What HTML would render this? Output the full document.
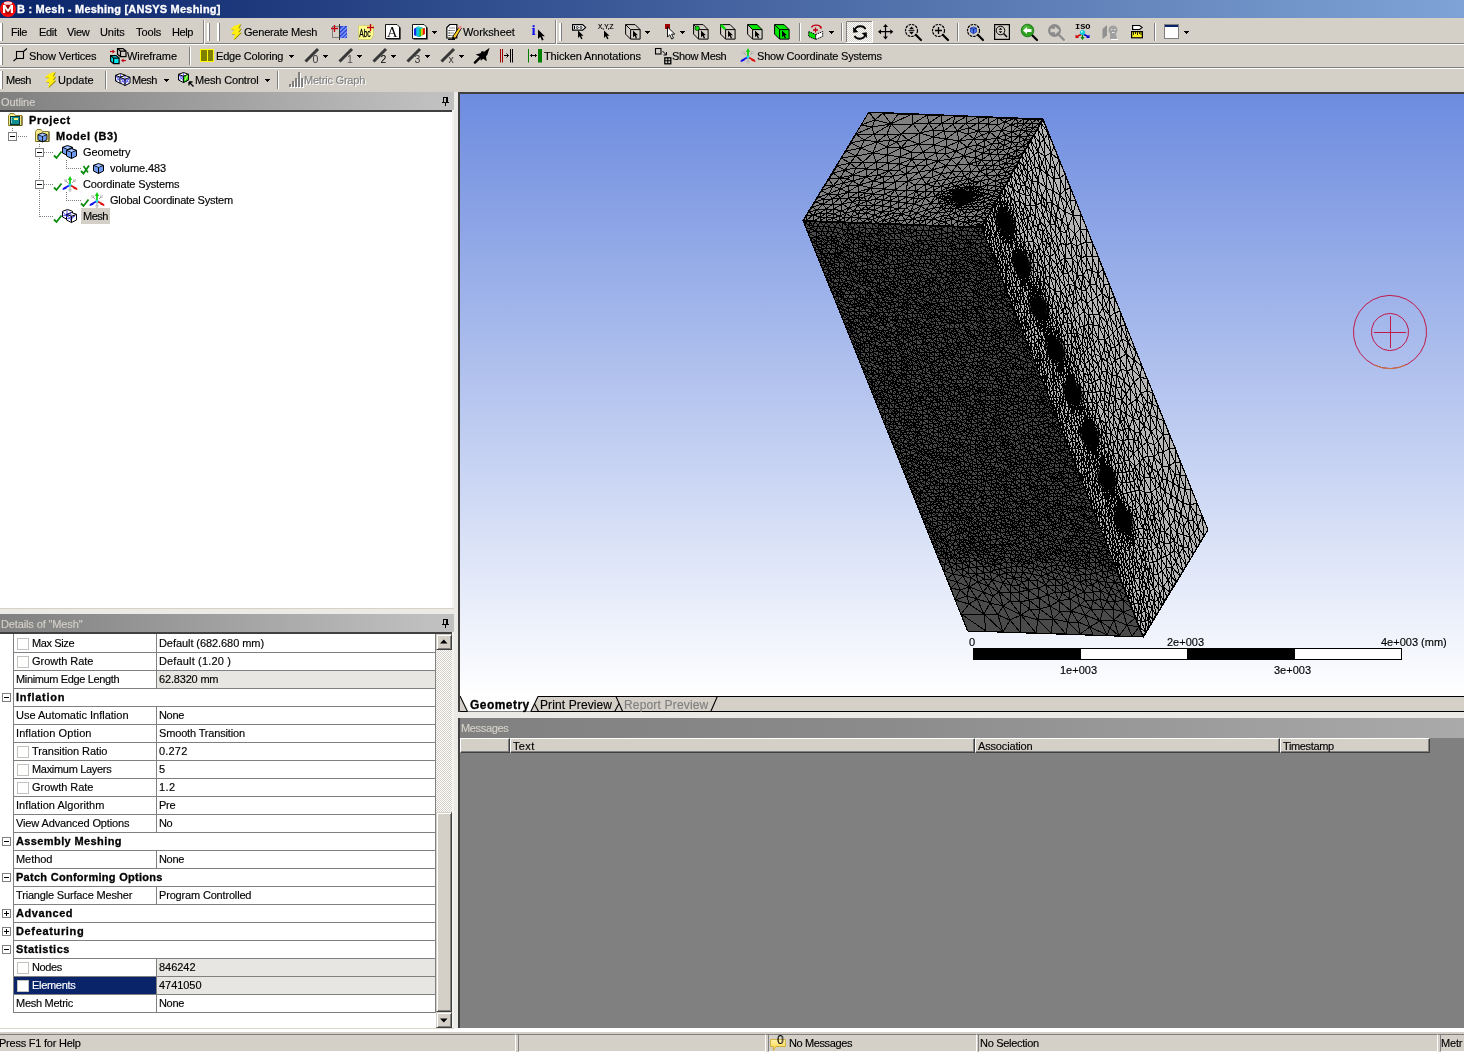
<!DOCTYPE html>
<html><head><meta charset="utf-8"><title>B : Mesh - Meshing [ANSYS Meshing]</title>
<style>
html,body{margin:0;padding:0;overflow:hidden;}
body{width:1464px;height:1052px;overflow:hidden;background:#d4d0c8;font-family:"Liberation Sans",sans-serif;font-size:11px;color:#000;position:relative;}
.a{position:absolute;}
.t{will-change:transform;position:absolute;white-space:nowrap;line-height:13px;height:13px;font-size:11px;letter-spacing:-0.2px;-webkit-text-stroke:0.15px currentColor;}
.n{letter-spacing:0;}
.b{font-weight:bold;letter-spacing:0.3px;-webkit-text-stroke:0.3px currentColor;}
svg{position:absolute;overflow:visible;will-change:transform;}
.vsep{position:absolute;width:1px;background:#808080;border-right:1px solid #fff;}
.grip{position:absolute;width:2px;background:#fff;border-right:1px solid #808080;}
.dd{position:absolute;width:0;height:0;border-left:3px solid transparent;border-right:3px solid transparent;border-top:3px solid #000;}
.hl{position:absolute;left:14px;width:421px;height:1px;background:#808080;}
.cb{position:absolute;left:17px;width:10px;height:10px;border:1px solid #c4c2bc;background:#fff;}
.ex{position:absolute;left:2px;width:7px;height:7px;border:1px solid #808080;background:#fff;}
.ex i{position:absolute;left:1px;top:3px;width:5px;height:1px;background:#000;}
.ex b{position:absolute;left:3px;top:1px;width:1px;height:5px;background:#000;}
.sbb{background:#d4d0c8;box-sizing:border-box;border:1px solid;border-color:#d4d0c8 #404040 #404040 #d4d0c8;box-shadow:inset 1px 1px 0 #fff,inset -1px -1px 0 #808080;}
.hc{height:15px;box-sizing:border-box;background:#d4d0c8;border:1px solid;border-color:#fff #404040 #404040 #fff;box-shadow:inset -1px -1px 0 #808080;}
.sp{top:1034px;height:18px;box-sizing:border-box;border:1px solid;border-color:#808080 #fff #fff #808080;}
</style></head><body>
<!-- title bar -->
<div class="a" style="left:0;top:0;width:1464px;height:18px;background:linear-gradient(to right,#0a246a 0px,#7fa3d6 1464px);"></div>
<svg style="left:0;top:0" width="17" height="18" viewBox="0 0 17 18"><defs><radialGradient id="mg" cx=".5" cy=".5" r=".5"><stop offset="0" stop-color="#600000"/><stop offset=".55" stop-color="#c00000"/><stop offset=".8" stop-color="#ff0808"/><stop offset="1" stop-color="#ff1010"/></radialGradient></defs><circle cx="8" cy="9" r="8" fill="url(#mg)"/><ellipse cx="8" cy="3.200" rx="4.200" ry="1.600" fill="#fff" opacity=".85"/><path d="M3 13V5h2.300l2.700 4.500 2.700-4.500h2.300v8h-2.200V8.500l-2 3.300h-1.600l-2-3.300v4.500z" fill="#fff"/></svg>
<span class="t b" style="left:17px;top:3px;color:#fff;letter-spacing:0.22px">B : Mesh - Meshing [ANSYS Meshing]</span>
<!-- toolbar separators -->
<div class="a" style="left:0;top:43px;width:1464px;height:1px;background:#808080"></div>
<div class="a" style="left:0;top:44px;width:1464px;height:1px;background:#fff"></div>
<div class="a" style="left:0;top:67px;width:1464px;height:1px;background:#808080"></div>
<div class="a" style="left:0;top:68px;width:1464px;height:1px;background:#fff"></div>
<!-- grips -->
<div class="grip" style="left:0;top:23px;height:18px"></div>
<div class="grip" style="left:0;top:47px;height:18px"></div>
<div class="grip" style="left:0;top:71px;height:18px"></div>
<!-- menu -->
<span class="t" style="left:11px;top:26px;letter-spacing:-0.44px">File</span>
<span class="t" style="left:39px;top:26px;letter-spacing:-0.29px">Edit</span>
<span class="t" style="left:67px;top:26px;letter-spacing:-0.31px">View</span>
<span class="t" style="left:100px;top:26px;letter-spacing:-0.09px">Units</span>
<span class="t" style="left:136px;top:26px;letter-spacing:-0.12px">Tools</span>
<span class="t" style="left:172px;top:26px;letter-spacing:-0.44px">Help</span>
<div class="a" style="left:203px;top:20px;width:1px;height:24px;background:#808080"></div>
<div class="a" style="left:204px;top:20px;width:1px;height:24px;background:#fff"></div>
<div class="grip" style="left:207px;top:23px;height:18px"></div>
<div class="grip" style="left:217px;top:23px;height:18px"></div>
<span class="t" style="left:244px;top:26px;letter-spacing:-0.20px">Generate Mesh</span>
<span class="t" style="left:463px;top:26px;letter-spacing:-0.07px">Worksheet</span>
<div class="a" style="left:555px;top:20px;width:1px;height:24px;background:#808080"></div>
<div class="a" style="left:556px;top:20px;width:1px;height:24px;background:#fff"></div>
<div class="grip" style="left:559px;top:23px;height:18px"></div>
<!-- row2 -->
<span class="t" style="left:29px;top:50px;letter-spacing:-0.18px">Show Vertices</span>
<span class="t" style="left:127px;top:50px;letter-spacing:-0.09px">Wireframe</span>
<div class="vsep" style="left:189px;top:47px;height:18px"></div>
<span class="t" style="left:216px;top:50px;letter-spacing:-0.19px">Edge Coloring</span>
<span class="t" style="left:544px;top:50px;letter-spacing:-0.11px">Thicken Annotations</span>
<span class="t" style="left:672px;top:50px;letter-spacing:-0.35px">Show Mesh</span>
<span class="t" style="left:757px;top:50px;letter-spacing:-0.21px">Show Coordinate Systems</span>
<!-- row3 -->
<span class="t" style="left:6px;top:74px;letter-spacing:-0.47px">Mesh</span>
<span class="t" style="left:58px;top:74px;letter-spacing:0.04px">Update</span>
<div class="vsep" style="left:105px;top:71px;height:18px"></div>
<span class="t" style="left:132px;top:74px;letter-spacing:-0.47px">Mesh</span>
<span class="t" style="left:195px;top:74px;letter-spacing:-0.16px">Mesh Control</span>
<div class="vsep" style="left:277px;top:71px;height:18px"></div>
<span class="t" style="left:305px;top:75px;color:#fff;letter-spacing:-0.21px">Metric Graph</span>
<span class="t" style="left:304px;top:74px;color:#808080;letter-spacing:-0.21px">Metric Graph</span>
<!-- toolbar icons row 1 -->
<svg style="left:0;top:18px" width="1464" height="74" viewBox="0 18 1464 74">
<defs>
<path id="cur" d="M0 0v7.500l1.800-1.700 1.400 3 1.300-.6-1.400-2.900h2.400z"/>
<g id="bolt"><path d="M12.400 .2L5.900 2.600L1.800 5.900L6.300 6.200L2.800 10.400L6.700 10.600L5.100 16.200L12.900 8.800L10 8.800L12.900 4.700L10 5.100Z" fill="#8c8000"/><path d="M11.700 -.3L5.200 2.100L1.100 5.400L5.600 5.700L2.100 9.900L6 10.100L4.400 15.700L12.200 8.300L9.300 8.300L12.200 4.200L9.300 4.600Z" fill="#ffee10"/></g>
<g id="dda" shape-rendering="crispEdges"><rect width="5" height="1"/><rect x="1" y="1" width="3" height="1"/><rect x="2" y="2" width="1" height="1"/></g>
<g id="cubeo" fill="none" stroke="#000" stroke-width="1"><path d="M.6 .6h9.500l5 5v9.500h-9.500l-5-5z"/><path d="M.6 .6l5 5h9.500M5.600 5.600v9.500"/></g>
<pattern id="dith" width="2" height="2" patternUnits="userSpaceOnUse"><rect width="2" height="2" fill="#fff"/><rect width="1" height="1" fill="#d4d0c8"/><rect x="1" y="1" width="1" height="1" fill="#d4d0c8"/></pattern>
<g id="mag"><circle cx="6.500" cy="6.500" r="6" fill="none" stroke="#000" stroke-width="1.200" stroke-dasharray="2.600 .9"/><path d="M11 11l5 5" stroke="#000" stroke-width="2.200" stroke-linecap="round"/></g>
</defs>
<use href="#bolt" x="229" y="24"/>
<!-- section plane -->
<g transform="translate(331,24)"><rect x="1.500" y="2.500" width="7" height="11" fill="none" stroke="#808080"/><rect x="8.500" y="2" width="7.500" height="12" fill="#3048d8"/><path d="M9 6.500l4.500-4.500M9 10.500l7-7M9.500 14l6.500-6.500M13 14l3-3" stroke="#8098ff" stroke-width="1.300"/><path d="M8.500 0v16" stroke="#303030" stroke-width="1"/><path d="M0 4.500h7M3.500 1v7" stroke="#c00010" stroke-width="1.300"/></g>
<!-- Abc -->
<g transform="translate(358,24)"><path d="M.5 1.500h15v9.500l-2.500 4.500h-12.500z" fill="#ffff90" stroke="#c8c870" stroke-width=".8"/><text x="1.200" y="11" font-family="Liberation Sans" font-size="9.500" textLength="11.500" lengthAdjust="spacingAndGlyphs" transform="scale(1,1.200)" stroke="#000" stroke-width=".25">Abc</text><path d="M9 3.500h7M12.500 0v7" stroke="#c00010" stroke-width="1.300"/></g>
<!-- A page -->
<g transform="translate(385,24)"><path d="M.5 .5h11.500l2.500 2.500v11.500h-14z" fill="#fff" stroke="#000" stroke-width=".9"/><path d="M1.500 15h13.500V3.500" fill="none" stroke="#000" stroke-width="1.200"/><text x="2" y="12.800" font-family="Liberation Serif" font-size="14.500">A</text></g>
<!-- colored cube page -->
<g transform="translate(412,24)"><path d="M.5 .5h11.500l2.500 2.500v11.500h-14z" fill="#fff" stroke="#000" stroke-width=".9"/><path d="M1.500 15h13.500V3.500" fill="none" stroke="#000" stroke-width="1.200"/><g transform="translate(-.8,-.8) scale(1.100)"><path d="M2.500 5l4-2 5 1.500v5.500l-4 2.500-5-1.500z" fill="#1030e0"/><path d="M4.500 4l2-1 5 1.500v5.500l-4 2.500-3-.9z" fill="#10c0e0"/><path d="M7.500 5.500l4-1v5.500l-4 2.500z" fill="#20c820"/><path d="M6.500 3l5 1.500-2 .5-4.500-1.300z" fill="#40e0a0"/><path d="M9 5.100l2.500-.6v5.500l-2.500 1.600z" fill="#f0d010"/><path d="M10.500 4.800l2-.5v5.500l-2 1.200z" fill="#e82010"/></g></g>
<use href="#dda" x="432" y="31"/>
<!-- worksheet -->
<g transform="translate(446,24)"><path d="M.8 3.500l3-3h7v13.500h-10z" fill="#fff" stroke="#000" stroke-width="1.200"/><path d="M2 15.300h7" stroke="#000" stroke-width="1.200"/><path d="M3 4h6M3 6.500h6M3 9h5M3 11.500h4" stroke="#909090" stroke-width="1"/><path d="M2.500 6.500h1M2.500 9h1M2.500 11.500h1" stroke="#000"/><path d="M13.500 2.500l2 1.500-6 10-3 1.500.5-3.200z" fill="#ffd020" stroke="#000" stroke-width=".9"/><circle cx="14" cy="3.500" r="1.700" fill="#f09090"/><path d="M7 12.500l-.5 3 2.800-1.500z" fill="#000"/></g>
<!-- i cursor -->
<g transform="translate(532,24)"><text x="-.5" y="11" font-family="Liberation Serif" font-size="15" font-weight="bold" fill="#1010f0">i</text><use href="#cur" x="6" y="5.500" transform="translate(6,5.500) scale(1.250) translate(-6,-5.500)"/></g>
<!-- label select -->
<g transform="translate(572,24)"><path d="M.6 .6h10l3 2.800-3 2.800h-10z" fill="#fff" stroke="#000" stroke-width="1.200"/><path d="M2.500 2v3M4.500 3.500h0" stroke="#000"/><circle cx="5.300" cy="3.500" r="1" fill="none" stroke="#000" stroke-width=".8"/><circle cx="9" cy="3.500" r="1" fill="none" stroke="#000" stroke-width=".8"/><use href="#cur" x="6" y="6.500"/></g>
<!-- xyz -->
<g transform="translate(598,24)"><text x="0" y="5" font-family="Liberation Sans" font-size="7.500" textLength="15.500" lengthAdjust="spacingAndGlyphs" stroke="#000" stroke-width=".2">X,Y,Z</text><use href="#cur" x="6" y="6.500"/></g>
<!-- cube cursor -->
<g transform="translate(625,24)"><use href="#cubeo"/><use href="#cur" x="8" y="6.500" transform="translate(8,6.500) scale(.9) translate(-8,-6.500)"/></g>
<use href="#dda" x="645" y="31"/>
<!-- red square cursor -->
<g transform="translate(665,24)"><rect width="5" height="5" fill="#a00000"/><path d="M2.500 3v10l2.300-2.200 1.900 4.200 1.800-.8-1.900-4.100h3.200z" fill="#fff" stroke="#000" stroke-width=".9"/></g>
<use href="#dda" x="680" y="31"/>
<!-- cube vertex -->
<g transform="translate(693,24)"><use href="#cubeo"/><circle cx="4.200" cy="4.200" r="2.300" fill="#00e000" stroke="#000" stroke-width=".6"/><use href="#cur" x="8" y="6.500" transform="translate(8,6.500) scale(.9) translate(-8,-6.500)"/></g>
<g transform="translate(720,24)"><use href="#cubeo"/><path d="M1 1l4.200 4.200" stroke="#00e000" stroke-width="2.600"/><use href="#cur" x="8" y="6.500" transform="translate(8,6.500) scale(.9) translate(-8,-6.500)"/></g>
<g transform="translate(747,24)"><path d="M.6 .6h9.500l5 5h-9.500z" fill="#00e800"/><use href="#cubeo"/><use href="#cur" x="8" y="6.500" transform="translate(8,6.500) scale(.9) translate(-8,-6.500)"/></g>
<g transform="translate(774,24)"><path d="M.6 .6h9.500l5 5v9.500h-9.500l-5-5z" fill="#00e800"/><use href="#cubeo"/><use href="#cur" x="8" y="6.500" transform="translate(8,6.500) scale(.9) translate(-8,-6.500)"/></g>
<!-- extend -->
<g transform="translate(808,24)"><path d="M3.500 3.500a5 3 0 0 1 9.500-.5" fill="none" stroke="#c00010" stroke-width="1.200"/><path d="M11 2.500l3 .2-.8 2.800z" fill="#c00010"/><path d="M5 6h5M7.500 3.500v5" stroke="#c00010" stroke-width="1.300"/><path d="M.7 7.500l7 3v5l-7-3z" fill="#00e000" stroke="#000" stroke-width="1" stroke-dasharray="1.500 .8"/><path d="M7.700 10.500l7-3v5l-7 3z" fill="#fff" stroke="#000" stroke-width="1" stroke-dasharray="1.500 .8"/></g>
<use href="#dda" x="829" y="31"/>
<!-- rotate (pressed) -->
<rect x="846" y="21" width="27" height="22" fill="url(#dith)"/><path d="M846.500 43V21.500h26" fill="none" stroke="#808080"/><path d="M846 42.500h26.500V21" fill="none" stroke="#fff"/>
<g transform="translate(853,24.500)"><path d="M2 5.200a5.500 4.500 0 0 1 10.500-.5" fill="none" stroke="#000" stroke-width="1.800"/><path d="M0 2.500l.3 5.800 5-.8z" fill="#000"/><path d="M12 10.800a5.500 4.500 0 0 1-10.500.5" fill="none" stroke="#000" stroke-width="1.800"/><path d="M14 13.500l-.3-5.800-5 .8z" fill="#000"/></g>
<!-- pan -->
<g transform="translate(878,24)" fill="#000"><path d="M7.500 0l2.500 3h-5zM7.500 15.500l2.500-3h-5zM0 7.700l3-2.500v5zM15.300 7.700l-3-2.500v5z"/><path d="M7.500 2.500v10.500M2.500 7.700h10.500" stroke="#000" stroke-width="1.200"/></g>
<!-- zoom -->
<g transform="translate(905,24)"><use href="#mag"/><path d="M6.500 2.500l2.500 2.800h-5zM6.500 10.500l2.500-2.800h-5z" fill="#000"/><path d="M3.500 6.500h6" stroke="#000" stroke-width=".8"/></g>
<g transform="translate(932,24)"><use href="#mag"/><path d="M6.500 3v7M3 6.500h7" stroke="#000" stroke-width="1.300"/></g>
<!-- zoom fit -->
<g transform="translate(967,24)"><use href="#mag"/><path d="M6.500 3l3 1v4l-3 1.800-3-1.800v-4z" fill="#4878f0" stroke="#1830a0" stroke-width=".7"/><path d="M3.800 4.300l2.700 1 2.700-1M6.500 5.300v4" stroke="#102080" stroke-width=".8" fill="none"/></g>
<!-- mag in box -->
<g transform="translate(994,24)"><rect x=".6" y=".6" width="14.800" height="14.800" fill="none" stroke="#000" stroke-width="1.200"/><circle cx="6.500" cy="6.500" r="4.300" fill="none" stroke="#000" stroke-width="1"/><path d="M9.500 9.500l3.500 3.500" stroke="#000" stroke-width="1.600"/><path d="M6.500 3.800l1.800 2h-3.600zM6.500 9.200l1.800-2h-3.600z" fill="#000"/></g>
<!-- green back -->
<g transform="translate(1021,24)"><path d="M11 11l5 5" stroke="#000" stroke-width="2.200" stroke-linecap="round"/><circle cx="6.500" cy="6.500" r="6.300" fill="#30a020" stroke="#107010" stroke-width=".8"/><circle cx="5.500" cy="5" r="3.500" fill="#60c850" opacity=".6"/><path d="M2 6.500l4-3.500v2h4.500v3h-4.500v2z" fill="#fff"/></g>
<!-- gray fwd -->
<g transform="translate(1048,24)"><path d="M11.500 11.500l5 5" stroke="#fff" stroke-width="2.200" stroke-linecap="round" opacity=".8"/><path d="M11 11l5 5" stroke="#8c8c8c" stroke-width="2.400" stroke-linecap="round"/><circle cx="6.500" cy="6.500" r="6.500" fill="#8c8c8c"/><path d="M11.500 6.500l-4.500-4v2.300h-4.500v3.400h4.500v2.300z" fill="#d4d0c8"/></g>
<!-- ISO -->
<g transform="translate(1075,24)"><text x="0" y="5" font-family="Liberation Mono" font-size="7.500" font-weight="bold" textLength="15.500" lengthAdjust="spacingAndGlyphs">ISO</text><path d="M7.500 9v6" stroke="#008000" stroke-width="1.200"/><path d="M5.500 13l2 3 2-3z" fill="#008000"/><path d="M7 10l-5 2.500" stroke="#d00000" stroke-width="1.500"/><path d="M.5 10.500v3.500h3.500z" fill="#d00000"/><path d="M8 10l5 2.500" stroke="#0000d0" stroke-width="1.500"/><path d="M14.500 10.500v3.500h-3.500z" fill="#0000d0"/><circle cx="7.500" cy="8.500" r="2.600" fill="#10c8d8"/><circle cx="6.800" cy="7.800" r="1" fill="#b0ffff"/></g>
<!-- look at (gray) -->
<g transform="translate(1102,24)"><path d="M.5 5l4.500-4v10.500l-4.500 3.500z" fill="#909090"/><circle cx="11" cy="6" r="4.500" fill="#a0a0a0"/><path d="M8 10h6l1 5h-7z" fill="#a0a0a0"/><path d="M9 5.500h1.500M12 5.500h1.500M10 8.500h2.500" stroke="#e8e8e8" stroke-width="1"/><path d="M9 15.500h7" stroke="#fff"/></g>
<!-- ruler -->
<g transform="translate(1131,24)"><path d="M1.600 1.500h7l2.500 2-2.500 2h-7z" fill="#fff" stroke="#000" stroke-width="1.200"/><rect x=".6" y="7.600" width="10.800" height="6.200" fill="#f8f020" stroke="#000" stroke-width="1.200"/><path d="M2.500 8v3M4.500 8v2M6.500 8v3M8.500 8v2M10 8v3" stroke="#000" stroke-width=".8"/></g>
<!-- window -->
<g transform="translate(1164,24)" shape-rendering="crispEdges"><rect x=".5" y=".5" width="14" height="14" fill="#fff" stroke="#808080"/><rect x="1" y="1" width="13" height="2" fill="#0a246a"/></g>
<use href="#dda" x="1184" y="31"/>
</svg>
<div class="vsep" style="left:799px;top:23px;height:18px"></div>
<div class="vsep" style="left:841px;top:23px;height:18px"></div>
<div class="vsep" style="left:957px;top:23px;height:18px"></div>
<div class="vsep" style="left:1154px;top:23px;height:18px"></div>
<!-- toolbar icons rows 2,3 -->
<svg style="left:0;top:18px" width="1464" height="74" viewBox="0 18 1464 74">
<defs>
<g id="slash"><path d="M1.500 13.500L14 1" stroke="#383838" stroke-width="3" stroke-linecap="butt"/></g>
<g id="csys2"><path d="M8 9V3" stroke="#10d010" stroke-width="1.800"/><path d="M8 0l2.200 4h-4.400z" fill="#10d010"/><path d="M8 9l-7 4" stroke="#1010f0" stroke-width="1.800"/><path d="M0 14l3.500-3.300 1.200 2z" fill="#1010f0"/><path d="M8 9l7 4" stroke="#e01010" stroke-width="1.800"/><path d="M16 14l-3.500-3.300-1.200 2z" fill="#e01010"/><path d="M8 10v5M3.500 4.500l3 3M12.500 4.500l-2.500 2.500" stroke="#a0a0a0" stroke-width="1"/><path d="M2.500 3.500l2.500.5-2 2zM13.500 3.500l-2.500.5 2 2zM8 16l-1.500-2.500h3z" fill="#e8e8e8" stroke="#909090" stroke-width=".4"/><circle cx="8" cy="9" r="1.500" fill="#20d8e8"/></g>
<g id="mc"><path d="M5.500 .5l5 1.800v5.700l-5 2.500-5-2.500v-5.700z" fill="#fff" stroke="#000" stroke-width="1"/><path d="M1 3l4.500 6M5.500 1v9M10 3l-4.500 6M1 7.500l9-4M1 3.500l9 4" stroke="#5050ff" stroke-width=".9" fill="none"/><path d="M.5 2.300l5 2 5-2M5.500 4.300v6.200" fill="none" stroke="#000" stroke-width="1"/></g>
</defs>
<!-- show vertices -->
<g transform="translate(13,48)" fill="none" stroke="#000" stroke-width="1.100"><rect x="3.500" y="3.500" width="7" height="7"/><path d="M.5 13l3-2.500M10.500 3.500l3.500-3"/></g>
<!-- wireframe -->
<g transform="translate(110,48)"><path d="M0 3.500h3" stroke="#c00010" stroke-width="1.200"/><path d="M2.500 1.500l2.500 2-2.500 2z" fill="#c00010"/><path d="M16 12.500h-3" stroke="#c00010" stroke-width="1.200"/><path d="M13.500 10.500l-2.500 2 2.500 2z" fill="#c00010"/><path d="M7.500 .6h5.500l3 2.500v5.500h-5.500l-3-2.500zM7.500 .6l3 2.500h5.500M10.500 3.100v5.500" fill="none" stroke="#000" stroke-width="1.200"/><path d="M.6 7.600h5.500l3 2.500v5.500h-5.500l-3-2.500z" fill="#00e8f0" stroke="#000" stroke-width="1.200"/><path d="M.6 7.600l3 2.500h5.500M3.600 10.100v5.500" fill="none" stroke="#000" stroke-width="1.200"/></g>
<!-- edge coloring -->
<g transform="translate(200,49)" shape-rendering="crispEdges"><rect x=".5" y=".5" width="13" height="12" fill="#808000" stroke="#ffff00"/><rect x="6.500" y="1" width="1" height="11" fill="#ffff00"/></g>
<use href="#dda" x="288.500" y="55"/>
<!-- slash icons -->
<g transform="translate(304,48)"><use href="#slash"/><text x="8.500" y="14.500" font-family="Liberation Sans" font-size="10.500" fill="#383838">0</text></g><use href="#dda" x="323" y="55"/>
<g transform="translate(338,48)"><use href="#slash"/><text x="9" y="14.500" font-family="Liberation Sans" font-size="10.500" fill="#505050">1</text></g><use href="#dda" x="357" y="55"/>
<g transform="translate(372,48)"><use href="#slash"/><text x="8.500" y="14.500" font-family="Liberation Sans" font-size="10.500" fill="#000">2</text></g><use href="#dda" x="391" y="55"/>
<g transform="translate(406,48)"><use href="#slash"/><text x="8.500" y="14.500" font-family="Liberation Sans" font-size="10.500" fill="#383838">3</text></g><use href="#dda" x="425" y="55"/>
<g transform="translate(440,48)"><use href="#slash"/><text x="8.500" y="14.500" font-family="Liberation Sans" font-size="10.500" fill="#383838">x</text></g><use href="#dda" x="459" y="55"/>
<!-- star arrow -->
<g transform="translate(474,48)"><path d="M.9 14.600l7-7" stroke="#000" stroke-width="2.400" stroke-linecap="round"/><path d="M15.600 -.2l-2.400 7.400-1.200.8.700 5.200-3.500-2.400-2.400 1.900-.7-3.900-4.400-2.400 4.800-1.100 1.300-2.400 2.300.9z" fill="#000"/></g>
<!-- red/black lines -->
<g transform="translate(500,48)" fill="none"><path d="M.5 1v13.500M2.500 1v13.500" stroke="#a00000" stroke-width="1"/><path d="M10.500 1v13.500M12.500 1v13.500" stroke="#000" stroke-width="1"/><path d="M4 7.500h4.500M6.500 5.500l2 2-2 2" stroke="#000" stroke-width="1"/></g>
<!-- thicken -->
<g transform="translate(528,48)" fill="none"><path d="M.5 1v13.500" stroke="#008000" stroke-width="1"/><rect x="10" y="1" width="4" height="13.500" fill="#008000"/><path d="M2.500 7.500h6M4 6l-1.500 1.500 1.500 1.500M7 6l1.500 1.500-1.500 1.500" stroke="#000" stroke-width="1"/></g>
<!-- show mesh -->
<g transform="translate(655,48)" fill="none" stroke="#000"><rect x=".5" y=".5" width="5.500" height="5.500" stroke-width="1.100"/><path d="M7.500 3l4 4M11.500 4v3h-3" stroke-width="1"/><rect x="9.800" y="9.800" width="6" height="6" stroke-width="1.300"/><path d="M12.800 9.800v6M9.800 12.800h6" stroke-width="1.100"/></g>
<use href="#csys2" x="740" y="48"/>
<!-- row3 -->
<use href="#bolt" x="43.500" y="72"/>
<use href="#mc" x="115" y="73"/><use href="#mc" x="119.500" y="75"/>
<use href="#dda" x="164" y="79"/>
<g transform="translate(178,72)"><use href="#mc"/><path d="M5.500 4.300l5-2v5.700l-5 2.500z" fill="#30d820" stroke="#000" stroke-width=".8"/><path d="M7 8l2.500-4.500" stroke="#c8ff60" stroke-width="1.200"/><path d="M11 10h3.500M11 10v3.500M11 10l4.500 4.500" stroke="#000" stroke-width="1.300" fill="none"/></g>
<use href="#dda" x="265" y="79"/>
<g transform="translate(289,72)" shape-rendering="crispEdges"><g fill="#fff"><rect x="1" y="13" width="2" height="3"/><rect x="4" y="10" width="2" height="6"/><rect x="7" y="7" width="2" height="9"/><rect x="10" y="1" width="2" height="15"/><rect x="13" y="7" width="2" height="9"/></g><g fill="#808080"><rect x="0" y="12" width="2" height="3"/><rect x="3" y="9" width="2" height="6"/><rect x="6" y="6" width="2" height="9"/><rect x="9" y="0" width="2" height="15"/><rect x="12" y="6" width="2" height="9"/></g></g>
</svg>
<!-- outline panel -->
<div class="a" style="left:0;top:92px;width:454px;height:18px;background:linear-gradient(to right,#808080,#c0c0c0 430px,#c0c0c0)"></div>
<span class="t" style="left:1px;top:96px;color:#d4d0c8;letter-spacing:-0.10px">Outline</span>
<div class="a" style="left:0;top:110px;width:452px;height:2px;background:#404040"></div>
<div class="a" style="left:0;top:112px;width:452px;height:496px;background:#fff"></div>
<div class="a" style="left:452px;top:110px;width:2px;height:500px;background:#f4f2ee"></div>
<div class="a" style="left:0;top:608px;width:454px;height:1px;background:#d8d2c4"></div>
<div class="a" style="left:0;top:609px;width:454px;height:5px;background:#eceae6"></div>
<div class="a" style="left:454px;top:92px;width:4px;height:940px;background:#eceae6"></div>
<!-- details panel -->
<div class="a" style="left:0;top:614px;width:454px;height:18px;background:linear-gradient(to right,#808080,#c0c0c0 430px,#c0c0c0)"></div>
<span class="t" style="left:1px;top:618px;color:#d4d0c8;letter-spacing:-0.13px">Details of "Mesh"</span>
<div class="a" style="left:0;top:632px;width:452px;height:2px;background:#404040"></div>
<div class="a" style="left:0;top:634px;width:452px;height:394px;background:#fff"></div>
<div class="a" style="left:452px;top:632px;width:2px;height:398px;background:#f4f2ee"></div>
<svg style="left:440px;top:92px" width="12" height="540" viewBox="440 92 12 540" shape-rendering="crispEdges"><g id="pin"><rect x="443" y="97" width="5" height="1"/><rect x="443" y="97" width="1" height="5"/><rect x="446" y="97" width="2" height="5"/><rect x="442" y="102" width="7" height="1"/><rect x="445" y="103" width="1" height="3"/></g><use href="#pin" y="522"/></svg>
<!-- tree -->
<svg width="0" height="0" style="left:0;top:0"><defs>
<pattern id="dotv" width="1" height="2" patternUnits="userSpaceOnUse"><rect width="1" height="1" fill="#808080"/></pattern>
<pattern id="doth" width="2" height="1" patternUnits="userSpaceOnUse"><rect width="1" height="1" fill="#808080"/></pattern>
<g id="chk"><path d="M0.500 5.500l2.500 2.500 5-6.500" fill="none" stroke="#0a8a0a" stroke-width="1.800"/></g>
<g id="folder"><path d="M.5 3.500l1.500-2h4l1.500 2h6.500v10h-13.500z" fill="#f3e98a" stroke="#8a8030" stroke-width="1"/><path d="M1.500 13.500h12.500v-9.500" fill="none" stroke="#5a5420" stroke-width="1"/></g>
<g id="cube1"><path d="M5.500 .5l5 1.800v5.700l-5 2.500-5-2.500v-5.700z" fill="#6f9cf0" stroke="#000" stroke-width="1"/><path d="M.5 2.300l5 2 5-2M5.500 4.300v6.200" fill="none" stroke="#000" stroke-width="1"/><path d="M5.500 1.400l3.600 1.200-3.600 1.300-3.600-1.300z" fill="#a8c6ff"/></g>
<g id="csys"><path d="M8 8V2" stroke="#10c010" stroke-width="1.600"/><path d="M8 0l2 3.500h-4z" fill="#10c010"/><path d="M8 8l-7 4" stroke="#1020f0" stroke-width="2"/><path d="M8 8l7 4" stroke="#e01010" stroke-width="2"/><path d="M8 9v5M3 3l3 3M13 3l-2 2" stroke="#909090" stroke-width="1"/><circle cx="8" cy="8" r="1.300" fill="#20d0e0"/></g>
</defs></svg>

<svg style="left:0;top:112px" width="452" height="120" viewBox="0 112 452 120">
<rect x="12" y="127" width="1" height="6" fill="url(#dotv)"/>
<rect x="17" y="136" width="10" height="1" fill="url(#doth)"/>
<rect x="39" y="143" width="1" height="74" fill="url(#dotv)"/>
<rect x="44" y="152" width="10" height="1" fill="url(#doth)"/>
<rect x="44" y="184" width="10" height="1" fill="url(#doth)"/>
<rect x="39" y="216" width="15" height="1" fill="url(#doth)"/>
<rect x="66" y="159" width="1" height="10" fill="url(#dotv)"/>
<rect x="66" y="168" width="15" height="1" fill="url(#doth)"/>
<rect x="66" y="191" width="1" height="10" fill="url(#dotv)"/>
<rect x="66" y="200" width="15" height="1" fill="url(#doth)"/>
<!-- expand boxes -->
<g fill="#fff" stroke="#808080"><rect x="8.500" y="132.500" width="8" height="8"/><rect x="35.500" y="148.500" width="8" height="8"/><rect x="35.500" y="180.500" width="8" height="8"/></g>
<g fill="#000"><rect x="10" y="136" width="5" height="1"/><rect x="37" y="152" width="5" height="1"/><rect x="37" y="184" width="5" height="1"/></g>
<!-- project icon -->
<use href="#folder" x="8" y="112"/>
<rect x="10.500" y="116.500" width="9" height="8" fill="#109090" stroke="#003838"/><rect x="14" y="118" width="4" height="2" fill="#f0f080"/><path d="M11 118h1M11 120h1M11 122h1" stroke="#fff"/>
<!-- model icon -->
<use href="#folder" x="35" y="128"/>
<g transform="translate(37.500,132.500) scale(.9)"><use href="#cube1"/></g>
<!-- geometry -->
<use href="#chk" x="53.500" y="150"/>
<use href="#cube1" x="62" y="145"/><use href="#cube1" x="66" y="148"/>
<!-- volume -->
<path d="M81 171l2.500 2.500 5.500-8" fill="none" stroke="#0a8a0a" stroke-width="1.800"/><path d="M83.500 166l4.500 6.500" stroke="#0a8a0a" stroke-width="1.600"/>
<use href="#cube1" x="93" y="163"/>
<!-- csys -->
<use href="#chk" x="53.500" y="182"/>
<use href="#csys2" x="62" y="176"/>
<use href="#chk" x="80.500" y="198"/>
<use href="#csys2" x="89" y="192"/>
<!-- mesh -->
<use href="#chk" x="53.500" y="214"/>
<g id="mshi"><path d="M5.500 .5l5 1.800v5.700l-5 2.500-5-2.500v-5.700z" fill="#fff" stroke="#000" stroke-width="1" transform="translate(62,209)"/><path d="M5.500 .5l5 1.800v5.700l-5 2.500-5-2.500v-5.700z" fill="#fff" stroke="#000" stroke-width="1" transform="translate(66,212)"/>
<path d="M63 212l4 5M67 210v7M71 212l-4 5M63 216l8-3M67 215l4 5M71 214v7M75 215l-4 5M67 219l8-3" stroke="#3030e0" stroke-width=".8" fill="none"/>
<path d="M66.500 214.300l5 2 5-2M71.500 216.300v6.200" fill="none" stroke="#000"/></g>
</svg>
<div class="a" style="left:81px;top:208px;width:29px;height:16px;background:#d4d0c8"></div>
<span class="t b" style="left:29px;top:114px;letter-spacing:0.66px">Project</span>
<span class="t b" style="left:56px;top:130px;letter-spacing:0.58px">Model (B3)</span>
<span class="t" style="left:83px;top:146px;letter-spacing:-0.13px">Geometry</span>
<span class="t" style="left:110px;top:162px;letter-spacing:-0.07px">volume.483</span>
<span class="t" style="left:83px;top:178px;letter-spacing:-0.15px">Coordinate Systems</span>
<span class="t" style="left:110px;top:194px;letter-spacing:-0.23px">Global Coordinate System</span>
<span class="t" style="left:83px;top:210px;letter-spacing:-0.47px">Mesh</span>
<!-- details grid -->
<div class="a" style="left:13px;top:634px;width:1px;height:379px;background:#808080"></div>
<div class="a" style="left:435px;top:634px;width:1px;height:379px;background:#808080"></div>
<div class="cb" style="top:638px"></div>
<span class="t" style="left:32px;top:637px;letter-spacing:-0.39px">Max Size</span>
<span class="t" style="left:159px;top:637px;letter-spacing:-0.07px">Default (682.680 mm)</span>
<div class="a" style="left:156px;top:634px;width:1px;height:18px;background:#808080"></div>
<div class="hl" style="top:652px"></div>
<div class="cb" style="top:656px"></div>
<span class="t" style="left:32px;top:655px;letter-spacing:-0.03px">Growth Rate</span>
<span class="t" style="left:159px;top:655px;letter-spacing:0.15px">Default (1.20 )</span>
<div class="a" style="left:156px;top:652px;width:1px;height:18px;background:#808080"></div>
<div class="hl" style="top:670px"></div>
<div class="a" style="left:157px;top:671px;width:278px;height:17px;background:#e8e6e2"></div>
<span class="t" style="left:16px;top:673px;letter-spacing:-0.36px">Minimum Edge Length</span>
<span class="t" style="left:159px;top:673px;letter-spacing:-0.18px">62.8320 mm</span>
<div class="a" style="left:156px;top:670px;width:1px;height:18px;background:#808080"></div>
<div class="hl" style="top:688px"></div>
<div class="ex" style="top:693px"><i></i></div>
<span class="t b" style="left:16px;top:691px;letter-spacing:0.70px">Inflation</span>
<div class="hl" style="top:706px"></div>
<span class="t" style="left:16px;top:709px;letter-spacing:-0.00px">Use Automatic Inflation</span>
<span class="t" style="left:159px;top:709px;letter-spacing:-0.34px">None</span>
<div class="a" style="left:156px;top:706px;width:1px;height:18px;background:#808080"></div>
<div class="hl" style="top:724px"></div>
<span class="t" style="left:16px;top:727px;letter-spacing:0.10px">Inflation Option</span>
<span class="t" style="left:159px;top:727px;letter-spacing:-0.16px">Smooth Transition</span>
<div class="a" style="left:156px;top:724px;width:1px;height:18px;background:#808080"></div>
<div class="hl" style="top:742px"></div>
<div class="cb" style="top:746px"></div>
<span class="t" style="left:32px;top:745px;letter-spacing:-0.08px">Transition Ratio</span>
<span class="t" style="left:159px;top:745px;letter-spacing:0.18px">0.272</span>
<div class="a" style="left:156px;top:742px;width:1px;height:18px;background:#808080"></div>
<div class="hl" style="top:760px"></div>
<div class="cb" style="top:764px"></div>
<span class="t" style="left:32px;top:763px;letter-spacing:-0.31px">Maximum Layers</span>
<span class="t" style="left:159px;top:763px">5</span>
<div class="a" style="left:156px;top:760px;width:1px;height:18px;background:#808080"></div>
<div class="hl" style="top:778px"></div>
<div class="cb" style="top:782px"></div>
<span class="t" style="left:32px;top:781px;letter-spacing:-0.03px">Growth Rate</span>
<span class="t" style="left:159px;top:781px;letter-spacing:0.44px">1.2</span>
<div class="a" style="left:156px;top:778px;width:1px;height:18px;background:#808080"></div>
<div class="hl" style="top:796px"></div>
<span class="t" style="left:16px;top:799px;letter-spacing:0.05px">Inflation Algorithm</span>
<span class="t" style="left:159px;top:799px;letter-spacing:-0.31px">Pre</span>
<div class="a" style="left:156px;top:796px;width:1px;height:18px;background:#808080"></div>
<div class="hl" style="top:814px"></div>
<span class="t" style="left:16px;top:817px;letter-spacing:-0.12px">View Advanced Options</span>
<span class="t" style="left:159px;top:817px;letter-spacing:-0.36px">No</span>
<div class="a" style="left:156px;top:814px;width:1px;height:18px;background:#808080"></div>
<div class="hl" style="top:832px"></div>
<div class="ex" style="top:837px"><i></i></div>
<span class="t b" style="left:16px;top:835px;letter-spacing:0.39px">Assembly Meshing</span>
<div class="hl" style="top:850px"></div>
<span class="t" style="left:16px;top:853px;letter-spacing:-0.04px">Method</span>
<span class="t" style="left:159px;top:853px;letter-spacing:-0.34px">None</span>
<div class="a" style="left:156px;top:850px;width:1px;height:18px;background:#808080"></div>
<div class="hl" style="top:868px"></div>
<div class="ex" style="top:873px"><i></i></div>
<span class="t b" style="left:16px;top:871px;letter-spacing:0.28px">Patch Conforming Options</span>
<div class="hl" style="top:886px"></div>
<span class="t" style="left:16px;top:889px;letter-spacing:-0.17px">Triangle Surface Mesher</span>
<span class="t" style="left:159px;top:889px;letter-spacing:-0.17px">Program Controlled</span>
<div class="a" style="left:156px;top:886px;width:1px;height:18px;background:#808080"></div>
<div class="hl" style="top:904px"></div>
<div class="ex" style="top:909px"><i></i><b></b></div>
<span class="t b" style="left:16px;top:907px;letter-spacing:0.57px">Advanced</span>
<div class="hl" style="top:922px"></div>
<div class="ex" style="top:927px"><i></i><b></b></div>
<span class="t b" style="left:16px;top:925px;letter-spacing:0.65px">Defeaturing</span>
<div class="hl" style="top:940px"></div>
<div class="ex" style="top:945px"><i></i></div>
<span class="t b" style="left:16px;top:943px;letter-spacing:0.50px">Statistics</span>
<div class="hl" style="top:958px"></div>
<div class="a" style="left:157px;top:959px;width:278px;height:17px;background:#e8e6e2"></div>
<div class="cb" style="top:962px"></div>
<span class="t" style="left:32px;top:961px;letter-spacing:-0.38px">Nodes</span>
<span class="t" style="left:159px;top:961px;letter-spacing:-0.03px">846242</span>
<div class="a" style="left:156px;top:958px;width:1px;height:18px;background:#808080"></div>
<div class="hl" style="top:976px"></div>
<div class="a" style="left:157px;top:977px;width:278px;height:17px;background:#e8e6e2"></div>
<div class="a" style="left:14px;top:977px;width:142px;height:17px;background:#0a246a"></div>
<div class="cb" style="top:980px"></div>
<span class="t" style="left:32px;top:979px;color:#fff;letter-spacing:-0.30px">Elements</span>
<span class="t" style="left:159px;top:979px;letter-spacing:-0.05px">4741050</span>
<div class="a" style="left:156px;top:976px;width:1px;height:18px;background:#808080"></div>
<div class="hl" style="top:994px"></div>
<span class="t" style="left:16px;top:997px;letter-spacing:-0.27px">Mesh Metric</span>
<span class="t" style="left:159px;top:997px;letter-spacing:-0.34px">None</span>
<div class="a" style="left:156px;top:994px;width:1px;height:18px;background:#808080"></div>
<div class="hl" style="top:1012px"></div>
<div class="a" style="left:436px;top:634px;width:16px;height:394px;background:#eae8e4;background-image:conic-gradient(#fff 25%,#d4d0c8 0 50%,#fff 0 75%,#d4d0c8 0);background-size:2px 2px"></div>
<div class="a sbb" style="left:436px;top:634px;width:16px;height:16px"></div>
<div class="a sbb" style="left:436px;top:812px;width:16px;height:200px"></div>
<div class="a sbb" style="left:436px;top:1012px;width:16px;height:16px"></div>
<svg style="left:440px;top:639px" width="8" height="5"><path d="M0 4.500h7.500L3.750 .5z" fill="#000"/></svg>
<svg style="left:440px;top:1018px" width="8" height="5"><path d="M0 .5h7.500L3.750 4.500z" fill="#000"/></svg>
<!-- viewport -->
<div class="a" style="left:458px;top:92px;width:1006px;height:605px;background:#404040"></div>
<div class="a" id="vp" style="left:460px;top:94px;width:1004px;height:602px;background:linear-gradient(to bottom,#6d8cdf 0%,#ffffff 100%)"></div>
<!-- tab bar -->
<div class="a" style="left:460px;top:696px;width:1004px;height:16px;background:#d4d0c8"></div>
<div class="a" style="left:458px;top:711px;width:1006px;height:1px;background:#000"></div>
<div class="a" style="left:536px;top:696px;width:928px;height:1px;background:#000"></div>
<div class="a" style="left:458px;top:712px;width:1006px;height:6px;background:#eceae6"></div>
<!-- messages -->
<div class="a" style="left:458px;top:718px;width:1006px;height:310px;background:#808080"></div>
<div class="a" style="left:458px;top:718px;width:1006px;height:20px;background:linear-gradient(to right,#808080,#8a8a8a 400px,#aaaaaa 1006px)"></div>
<div class="a" style="left:458px;top:718px;width:2px;height:310px;background:#404040"></div>
<span class="t" style="left:461px;top:722px;color:#d4d0c8;letter-spacing:-0.35px">Messages</span>
<div class="a" style="left:458px;top:1028px;width:1006px;height:4px;background:#fff"></div>
<div class="a" style="left:0px;top:1028px;width:458px;height:4px;background:#fff"></div>
<!-- status bar -->
<div class="a" style="left:0;top:1032px;width:1464px;height:2px;background:#d4d0c8"></div>
<div class="a" style="left:0;top:1034px;width:1464px;height:1px;background:#808080"></div>
<div class="a" style="left:0;top:1028px;width:454px;height:1px;background:#dcd8cc"></div>
<span class="t" style="left:-1px;top:1037px;letter-spacing:-0.23px">Press F1 for Help</span>
<span class="t" style="left:789px;top:1037px;letter-spacing:-0.38px">No Messages</span>
<span class="t" style="left:980px;top:1037px;letter-spacing:-0.29px">No Selection</span>
<span class="t" style="left:1441px;top:1037px">Metr</span>
<!-- mesh object -->
<svg style="left:460px;top:94px" width="1004" height="602" viewBox="460 94 1004 602" shape-rendering="crispEdges">
<defs><radialGradient id="hg"><stop offset="0" stop-color="#000"/><stop offset=".6" stop-color="#000"/><stop offset="1" stop-color="#000" stop-opacity="0"/></radialGradient></defs>
<polygon points="869,112 1043,119 981.5,227 803,220.5" fill="#808080"/>
<polygon points="803,220.5 981.5,227 1143.5,637 967.5,631" fill="#4a4a4a"/>
<polygon points="1043,119 1208,530 1143.5,637 981.5,227" fill="#b6b6b6"/>
<g fill="none" stroke="#000" stroke-width="1">
<path d="M869 112l6 8 8-7-14-1-8 13 14-5-3 7 2 7 3 8-16 6-15 3 10 5-6 7-13 3-4 7 7 5 3 5 10-2-5 5-5-3-3 6-2 6 10-3 11-7-6-4 13-4 0-8 10-7 11-7 13 2 12 2 14 0 1 6 5 5 9 4 11-2-6-6-14 4 0 7-6 7 7 2 4-5-11 3-11 1 7-7 4 6-10 7-1-6-9 5 10 1 3 4 6 3-4 8 5 4 4 2 0 4 8-4 6-3 3-4 5-1 4 0-2 2-2-2-2 4-6 1 2 3 5-1-1-3 4-2 3-1-1-1 2-2 1-1 3 0 0-2-2 1 2 1 2-1-2-1 2-1 1-1 1 1-2 0 0-1-3 0 0-2-2 1 0 2 2-1-2-1 0-1-2 1-2 0-1-2-2 0-5 3 2 1 1 2 4 0 2 0-2 2 2 2 1-3 1 1 3 0 1-1 1 0 1-1 0-2-2 0 0 1M883 113l15 1-7 10-16-4M883 113l8 11 21-10 1 10 14-9 2 8 12-8 14 1 12 0-14 8 2-8-13 7 11 1-9 7-11-1 0 7 1 8 2 8-10 6-3-7 13 1 9 1 11-3 3-10 15-2 8-4 3 5 7 4-8 3-1 6-8 5-6 6-5-8-8-5-5 8-5 7-5 8 6 5 5-7 10-1 7-7 7-2 6-2 1-7-8-2 0 7-11-2-13 3 6 6-5 7 4 5-9 2 4 4 5-6 6-6 9 1 5 5 4-6 5-6 7-5 6-6 2 6-8 0-10 0-7-2 1 4 1 4 3 5-9 1-2-8 8 2 5-6 3 5-8 1-6 6-3 7 8-2 4 4-7 2-3 3-1 2 3 1 3 2 3-1 2-3 0-6 9-2 6 2 2-6-3-5 5-5 7-2 6 1-3 3-3-4-6-3-1 5 3 4-8 1-8 5-10 2-3 4 0 2 1 3-4 0-5 1 4 1-4 3 0 2-2 1 2 0 3 0 0-2-1 0-2 1 0 1-2 1-2 2 1 1-2 2-1 1 2 1 2-1 3 0-2-1 2-1 0-1 1-2 1-2 2 1 2-1 2 0 1-3 4 1-1 3 5-2 5 1-2 4 7-2-5-2 0-4-5 3 0-4-5 1 1 2 4 1-2 3 7-2 7-3 7-1 3-4 2-4 2-4-4-2 6-2-5-2-9 3 8 1-3 3-7 2 6 2 6-1-5-3 7-1 2-4 2-4-7 2-4-3 4-6 1-5-7 2 7-6-9 0 5-4 4 4 0 4 6 1-1 5 6-2-5-3-7 4M898 114l14 0 15 1 14 0 1 8-9 7-4-7-16 1 7 9-1 11 15 1-11 7-11 7 4 7 10-7 12 2-6 9-10 8 10-1 9-3-4 7 10-2-6 7-8 0-8 5 1-7M967 116l11 1 0 6 10 1 1-7-11 6-9 5-12 3-4-7 13-1 1-7M978 117l11 0 9 1-10 6 9 1 1-7 9 0-2 4-7-4M978 117l-12 6 3 5 9 3 4 4 8-3-2-8-10 7-4 8 11 1-1 7-9 4-11 5-7 9 5 6 2 5-8 1 4 4-9 2-10 3-4-5-5-4M1007 118l9 0-11 4-8 3 5 5 10 2 9-2-2 6 6 4-2 6-7 0-4-4-7-2-8-2-5 6-3 6-6 3 7 1 8 0-1-5-5-5 7-1 6-3 6-3 1-5 7 4 9 0 3-4 5-1-3-3-2 4 3 3-6 1-3 4-6 2 4 4 6-4-2 4-4 0 2 4-3 4-5 2-4 3-1-3-5-2 3-6 6-2 3-4-7 0-1-5 8-1-7 6-2 6-7 2-6-1-8 1-5-3-7-2-2 6-8-4-8-6-13-2-12 6 12 2 13-6-2-10-11 8-13-2 11-6 2 8 0 8 10 4 11-4-3 9M1016 118l7 1 7 0 7 0 5 0-2 4-3-4-5 4-2-4-6 5-3 6 6-3-3-3-1-5-5 4-2-5-5 7 1 7 5-5 4 3 5 1 5 1M1005 122l-3 8-5 8-12 2-8 5-3-6-7 8 10-2M1005 122l6 3-9 5-12 2-5 8M929 123l13 0 2 8 13 0 9-8 12 0 0 8 12 1 7 6 2 5-2 6-7 5-8 6M929 123l-9 10 13-3M1018 123l-7 2 6 2 1-4 6 1-7 3M1032 123l8 0-2 4-2 4-2 4-3 4-2 3-4-2 6-1-3-3-2-5-7 5 0 6M1032 123l-5 4-1 4 7-3 7-5M1032 123l1 5 5-1M1032 123l-8 1M891 124l-17 10-18 0 8 6 10-6 13 0-10 8 10 5 10-5 4 6-1 9 11-5 12 0-4-8-8 8 1 7-13 5 1-7-12 6-12-1 1 7-11 0-3-7 13 0-3-9 14 2 14-7 10 4M891 124l22 0-12 10-4 8-7-2-13 2-13-2-3 8-10-5 13-3M891 124l-4 10 3 6-3 7 0 8 1 8-11 6 12 2 4 5-10 7-10-2 10-4 10-1 13-2 13-2 13-2M891 124l-19 3-16 7-5 9-5 8-5 7-4 8 8 4 5-7-9-5 15-2 5-8 12 5 4-11M891 124l10 10-14 0M861 125l11 2M861 125l-5 9M997 125l-7 7M1027 127l6 1M969 128l-1 6-9 7M1002 130l3 5 7-3M957 131l11 3 6 5M978 131l-10 3M920 133l13 4-14 7-18 4-14-1-14 6-17 3 7 6-13 1 6 5 10 1-13 6 0 6-6-2-7-1-11 1-4 6 8 1 10-3 4-4 6-4-13 3-7 8-12 5 4-6M920 133l-12 7-7-6-11 6M920 133l-19 1M1005 135l0 5-1 5 8-3M1005 135l-8 3M1005 135l6 2M908 140l-11 2M908 140l-7 8M908 140l11 4M999 143l5 2-1 5M1004 145l-7 4M1004 145l6 3 6 3 7-5M1016 146l0 5-9 3M1027 146l-2 4-9 1-4 5-5 2M946 147l-10 6 2 8 13-2-6-5 1-7M989 150l1 4 2 6 1 5 6 0M1016 151l1 5-5 0M1016 151l6 3-2 4-3-2M873 153l-10 9-7 6-3 7 13 2 11-8 1 6-5 6-2 7 12-5 1 6 0 5-8 5 7 1 7 1 8-5 8-6-11 0-11 4-1 6-9 5 0 5 0 5-8-2 8-3-6-1-2 4-7 5 4 4-6 0 2-4-8 4 6 0M945 154l-7 7-11 4-8 7 3 6-14 3 7 4M1020 158l-7 1M1020 158l-2 4-2 4-4-2M912 159l-5 7 9 0 11-1M1000 160l-7 5 1 5-7-1-7 2 6 4 11 0 5 4-1 4 4 3-5 1 2 3-2 3-2 4-7 3-2 4-3 4 7-3-2 4-2 4-2 4-3-4-9 3-9 1 4 3 5-4-4-4-5 5-7-1 2-6 0-3 5 0-5 3 4 3 1 4-2 5 6-2-2 3 7-2-5-1M938 161l8 5 11-1 12-1M888 163l11 1 8 2-1 8 10-8 3 6-11 9-2 9 0 7 0 6 0 5 5 3 10-5 10-3-5 7-3 6 7 0-5 4-2-4 7-4 8 0 4 4-2 5-2 4 7 0 6 1 7-5 8-4M888 163l1 8 10-7 0 6-6 6 2 6-12 1 0-6 6-6 10-1 7 4-11 8-11 7 11 1 3 6-8 0-7 4-1 6-8 4 8 2-8 3-6 4-5 3 7 1 3-4 1-4 5 2 3-5 8-1 4 2-2 5-8 2-2 3 6 0 4-5 5 2 8 0 4-4 2-5-10 3 4 6 8-1 4-6 4-7-7-2-8-1-8 6-4 4 7 1-9 4-5-3 7-2M985 165l2 4-1 6-6 6-6 5-2 3-3 2-1 1-1 1 1 1-2 2-1-2 2-1-2 0-3 0 1 1-2 0-3 0 1 1 2-1-1-1-1-2 3-1 3 1 2 1 2-1-4 0-1-2-2 1-1-1-2 2 3 1 3-1-3 2-1 1 0 1 2-1 0 1 1 2 1 0 2-1 3-1 1 1 1-1-2 0-1 2-3 1 2 0-2 1 0 2 1 1-1 2 0 3 5-3-5 0 4-2-3 0 2-1 1 1 2-2 4-2 2-3-4-1-2 1 0-1-2-1-2-1 3 0 1-3 4-1-1 3-4 1-2-1 0-3-5 1 1-2-2-3 5-5-8 2 3 3-4 3-4 2-4 1-4-2 4-5 4 3-4 4-5 1 1-3-6-2 0 5 6-3 8-2 0 3 2 1 2 1-2 2-3 1 2 1 1 1-2 1 0-1 1-1 2-1 2-1-3 0 1 1M985 165l8 0-6 4M907 166l-8 4M1016 166l-7 1-7 2-5 6-8 4-3-4M1016 166l-3 4-4-3-3 5-1 4M856 168l-11 2-5 8M845 170l-12 3-4 6 4 7 7 3 8 3 1 6-7 6 7 4 5 3-8 2 3-5 3-6-10 2-8 5-7 4-7 0 6-4 1 4-1 4 0 4 6 0 7 0 6 1 6 0 0-5 8 1 9 1-2-6-8 1 1 4M845 170l8 5M889 171l-11 4 5 2M971 172l-7 4 4 3 1 4 1 3M906 174l2 7-13 9 0-8 13-1M878 175l-12 2 7 4-14 4 7-8M964 176l-4 5-5 5 8-2 6-1 4 0M968 179l5 2 7 0 7 4 8-4 0 5 6-3-1 4-5 4 5 2-7 3 5 1-2 4-3 4-4-1 7-3-5-1-5-2-7 2-3-2-2 3-4 1 1 2 3-3-2-1-3-1-3 2 3 0 3-1 0-2 4 0-2-2 4-1 3 1 5 2-3 4 6 2-6 2 3 2 5 1-7 4-3 4-6-1 0 5 6-4 6 0-3 4-3-4M989 179l-2 6 1 5-5-1-3-2-6-1-5 2M973 181l-4 2-4 4-6 0 2 2 3 0M859 185l-11 1 0 6 10 0 0 5 6 0-4 3-2-3-6 5 8-2 7 1-3-4 9-3 3 5-9 2-1 5-5 4 5 3M859 185l12 3 13 1-11 5 11 0 6 2 0 5-8 5-8-1 2-6M859 185l-1 7-9 6 9-1 7-4-1 4M987 185l-7 2-4 1 2 2M987 185l-4 4-4 3-5 2 0 2-3 0-2 1-2-1-1 0-1 1M987 185l8 1 5 1M833 186l-4 8 9 1-6 4-8 0-9 3 8 2 3 5-9 1 3 3-7 2 1 6-7-1-1-4-2 4 3 0 6-5-7 1 3-4 8-2-4 5-4-3 3-5 11-3 1-5-6-2 11-3-5 5M848 186l-8 3-11 5-8-3-3 6-3 5-3 5 5 3 6-6 9-5-3-5M933 186l0 5-8 7 6 5 7-5 4 1 3 1 5 0 4-1 0 1 0 2-2 2-1-2-1-2 2-2-3 0-4 2-1 3 3 2 3 3 6 0 5 2-6 3 4 3 6-3 6-1 3-3-6 0-7 1M941 186l-8 5 2 5-10 2-7 1 1-4 6-4 0 7-11 6-8 4-5 6-4 6 4 4 6 0 6 0 0-5 10-3-4 5-6-2-4-3-8-2-3-5 8-1M955 186l4 1-2 3 4-1 4-2M974 186l2 2M995 186l-7 4 7 1-2 5-2 4-8 2 0 4-5 0-4 3-2-3-6 1-4-2-1 2-2-1 3-1 4-1-3-1 4-1M995 186l0 5M871 188l2 6-6 7 7 4-6 4-7 1-7 1 4 3 3-4-3-5-9 3-8 3 1-7-9 0 1 5-8 0 7-5-1-5 8-1 2 6M871 188l-6 5 8 1M871 188l-13 4 7 1M955 189l-2 2-2-1-3 3 4 1 3-2-1 2-2 2 0-2 1-3 4-1-2 2 4-1M895 190l-5 6M962 190l0 2-2 1 2 0 0-1M916 191l9 0 8 0 8 0 5 0 2 2-1 4-5 2-3 4 5 0-3 4 3 2M916 191l-10 6-8-1 0 6 8 1 7-5 6-3M916 191l-3 7 5 1-4 5-3 7 6 2 9-3 8-2-4 4M941 191l-6 5 3 2 1 5 6-3 2-3-4-1-1 3M941 191l1 3-7 2-4 7 8 0 2 4 6-2 4-3 3-2 2-2 0 2 1 1 2 0-1-1 2 0 0-1 1-2M946 191l-4 3-4 4 5-2 5-3 5-2 2 1 2 1-1 2 3 0-2 2 2-1M975 191l-3 2 0 1M848 192l-8 6-2-3M967 192l0 1M971 192l-1 1-2 1M971 192l1 1 2 1M948 193l-6 1 1 2M970 193l0 2M970 193l2 0M959 195l2 0 2 0 3 1-2 1-2 1-2 1-2 0-2 1 2 0 2-1-1-1-3 0-2 1-2-1 1-1 2-1-3 0-3 2M972 195l2 1-2 2-1-2-1 2-2 0 1-1 1 1-1 1-3 0-1 0-1-1M952 196l0 2M952 196l-5 1M952 196l1 1 1 2 1-2 1 1 1-1 0-1M981 196l-5 2M981 196l-2 4-5 1 2 2-5 1 1 2-4 3 3 3 8-2-5-1M906 197l-8 5-8-1 0 6 0 4 8-2-8-2-8-1 0 6 8-5 8-5 0 7M906 197l7 1 1 6M953 197l2 0 2 0 2 1-1 1-2-1M840 198l9 0 3 4 6 3 2-5M840 198l-7 6-10 0M966 198l-1 1-1 1M968 198l1 1 3-1-2 0M958 199l0 1-1 1-3 1-3 0-4 0 3-2M969 199l0 2M945 200l2 2 0 3M979 200l4 2-5 4-6 0 4-3 3-3M867 201l-9 4-4 6-3 6-6 5-1-4-5 3 1-5 6-3-2 5-4-2 1-5 5 2 5 4-7 1M963 201l0 2 3-2M947 202l-3 1M958 202l1 2-3 0M961 202l-2 2 0 2-2-1-1 3-2-2M961 202l2 1-1 2-3-1-2 1M983 202l-7 1 2 3 1 4-4 6M931 203l3 5 4 4 8 0-4 4 4 2-6 3-8 4 6 0 7-3-5-1-7-2-3-3M939 203l-5 5 7-1-3 5-5 7 9-3 7-1 2-4 4 2 1-5-5 3M963 203l-4 1M858 205l8 1 2 3M874 205l-8 1M959 206l-3 2 5-1M983 206l-4 4 7-2-2 5 5 0M966 207l2 2-3 4M950 208l-4 4 3 3 6-2-3 6 7-3-1 5 6 1 4 1 2 3 5-5 9 0-2 4-1 2-5-1 2-2 6-3M834 209l7 2-8 3-6-1-7 4 0-4M834 209l-1 5 7 2-7 2 6 3M979 210l5 3M890 211l-3 4-3 5-5-3-6 2-5 0 2 4 6 0 8-3 4 3 9-3-2 3 6 1 4-4 2 4 6-5M882 212l5 3-8 2-3 6-3-4M917 213l6 3M917 213l-8 3M833 214l-7 3-6 4-6 0 6-4 0 4 6 0 7-3-1 3M833 214l0 4-7-1-6 0-7-2M858 214l-7 3M949 215l3 4 6 2-1 5 6 0 5-3M949 215l-3 3 6 1-1 7 6 0 7-4-1 4 7 0 6 0 6-1-4-1-3-3M946 218l-1 4 6 4M933 219l-1 6-6 0-1-5-6 1 1 3-7 0 6-3M933 219l-7 6-6-1 5-4 8-1M952 219l-7 3 0 3M876 223l6 0M888 223l7 0M978 224l-8 2"/>
<path d="M804 221l5 0-4 2-1-2M809 221l6 0 3 5 2-4 4 4 2-4 6 0 6 0 5 0 5 7 4 6-3 3 5 2-2-5 6 4-4 1 4 4 4-1-4-4 0 5 0 4 5 4-5 0 0-4-5-5-4-5-5-3-6-2-5-1-2 4 3 4 4 1-3 2-4-3 0-4-5 0 2 5 3-1-5-4-5-1 2 4 5 2 3 3 0 5 4 4 2 4-3-2-5-2 2 6 3 4-4 0 2 4-4-1-3 0 4 4 3-3 3 0-1-4 0-5 3-1 5 2 2 4 2-2-4-2-3 3-2-5 3-2-5-2-1 2 0 3-3 1-1 4-2 3 1 4 6 4 0 4 4 4 3 4 2-3 4 1 2 4 4 2 4 2-2 2-1 5 3 4 1 3 1 5-6 0-5 1-5-2-2-4-3-5-1-5-2-5-2-4 4 2-2 2 4 3-2 2-4 0 1 4 2 4 2 4 5 2-4 2-1-4 3-2 3-3-6-2-2 3 5 2 6 2 6 3 0 4 0 4-1 3 2 3 1 4 6 3-5 2-1-5-5-2 4-2-4-2 0 4-4 1 3 2-2 2 2 4 1 4 3-3 3-3-4-3 3-2 4-2-5-2 3-2-4-4-4-3-1-4 5 3-4 1-5-2 4-2-1-4-4 2 1 4-3 2 6 3 6 0 4-1 4 3 2 5 0 4-2 2 5 1 5 0 4-1-2-5-2 3 0 3 2 4 5 2 4-2 2-2-2-5 2-4 3-4 3 6-6-2-2-4 5 0 7 3-4 3 6 3-2-6 6 2 1-4 4 4-5 0-4-5 5 1-4-4-2-3-4 0-3-3-6-1 0 4 1 3-1 3-3 0-5-2-2-4 0-3 1-3-2-3 3-3 2-2 0-4-5-3-2 1-4-1-5-1-1 3-5 2-4 2 3 3 4-1 3-2-6-2-5-5-2 4 7 1-1 5 5 2 5 2-4 3 7 1 6 1-3 2-3-3 3-3 3 4 3 3-3 0-3-1 0 2 3-1M809 221l4 5 2-5 5 1 6 0 3 5 4 5 2-5-3-5-3 5 6 0 3-5 4 7 6 0 5 0-1 6-5-2 1-4 0-3-5-4 6 1 4 6 7 3 5 4 4 0 1-3 2-4 4 5-6-1 3 4 3-3 5 2-2-4-7-3-6-6-5 0-2 4 1 5 0 4-2 3 6 2 6 4 4 0 0 4-4-4 0 4 4 0 3 5 1 4-6-2-2 3 2 5 5 5-5 0 0 4 3 5 4 1 2-2 3 5-5-3 0 5-3 2-4 1-5-1 2-3 3 4 3 5-3 3 1 4 4 3 4 1 4-1 2-2-2-4-3-4 5 1 2-2 2 3 2-1-4-2 2-2 4 0 5 2 3 4 3-2-3-5-3 3 6 2 2 6 3 5-4-2-4 1-1 3 4 1-3-4-4-4-1-4 5 0 5 4-1 3 0 2-4-1-5-1 4 4 2 3 3 5 1-4-2-3-2 2 4 1 5 3-6 1 0 5 5-1-5-4-5-2 2-3-5-2 3-1M809 221l0 4-3 3 5 1-3 4 2 4 2 4 1 4 4 0-5-4 4 0-6-4 6 0-8-4-2-5-1-5 4 2 2 4 2-3 5 0 6 0 5 1-1 4 3 5 5 1 2 4 1 5 5 2 4 3-6 1 2-4-1-4-5-3 3-3 3-3 3 6 2-3-2-5-3 2-2-6-7-2 3 6-2 4-3-5-5-1-2 5-3 3-2 2-5-4 5-2-5-4-8 2M843 222l-1 7-4 4 3 5-5-1-2 3 1 3 4 3 3 6-6-4-1 5 3-1 2 3 2-3-4 0-2-4-5 1-5-1-4 1-3 1-2-5 5 4 7 4 6 0M849 223l6 0-2 6 6-2-4-4 6 0 4 5 7 1 0-6 6 5-6 1M849 223l-1 3 5 3 4 5-5 1M866 223l-1 5 5 5-4 0 3 3 1 4 0 5-4 1-4-3 2-2 6-1 4 5 2-3-6-2-5-4-5 0 4 5 1-5 1-3-6-1 5-4-6-1M866 223l6 0 6 1 0 4 1 4-3 2 4 6 5 3 5 1 0-5 5 0 0 4-5-4-2-6 7 6 6 0 5 6-2 3 5 2-3-5 1-4-6-2-1-5 2-3 5 2 4 0 5-2 0 5-5-3-1-4 6 2 7-1 5 6 5 2 3 4 7 4-1 5 0 3-5-3-1 4-4-4-2 3 6 1 5 5 6 0 0 4 4 4-1 3 1 4-4 2-6-4-4 0-6 0 2-4 4 4 0-3-4-1-3-5-6-1-5 0 4 4-3 3-2 2-4 1-2 3 4 2-2-5-6 0-5-2-1-4 5-1 5-1-1-4 4 2 4 0-1 3 2 4 2 4-4-2 1 4-3 2-4 2 0-4-4-3 1 4 3-1M878 224l5 0 6 0 6 0 6 1 1 6-5-2 3 5-6-1 1 6 5 5 6 1 5 1-2 4 3 5 5 0-4-4-4-1-2 3-3-5-1 3-5 0-5-1-3-6 5-1 5 4 4 1-4-4-5-1 0 4 3 4 5 4-6 0 1-4 2-4-5 0-2 3-5 0-1 4-3-4 4 0 4 5-5-1 0 4 6 3-4 3 0 4-3 1 4 4-1-5 5 1 2 5 4 5-6-2-6 0 1 4-5 1 6 3 5 4 3 6 2-4-3-5-2 3-2-5-4-3 4 0 1-4 2-3 2-2 5-1 3-2-4-2 0-4 5 3 0-4 5 3 3-2 3 3-6-1-2 4 4 4 5 3 3-2 2 4 4 1 4-1-1-5-6-2-5-1-5-1 3 3M878 224l5 4-1 3-3 1 5 3 6 4-5 1 0 3-4 1-5-2 4-2 1-4 4 4 5 4 5 3M883 224l0 4 5 5-6-2-4-3 5 0 5 0 0 5 6 0 7 6 3-3 3-3-1-4 5 4 0 4-4-4M883 224l5 4 6 5 3-4-2-5-2 4 4 1 4-4 5 0 0 4-4 2 2 5 3 5 6 2 6 4 3 5 4 0 0 3 4 4 4 3-4 2 0-5 0-5-4-2 2-3 4 2 5 0 5 0 5 0 6 0 4 4 5-1 5 1 4-1 2-2 5 2 4-1-2-6 5-1 2-4-2-5-3 2 5 3 2 4-4 0 5 4-1-4M889 224l4 4 1 5M889 224l-1 4 5 0M809 225l4 1 3 5-5-2M901 225l5 4 4 0-4-4 6 0 4 6 2-6 6 0 5 1 6 0 0 4 6 4 6 4 6 3 6 2 5 5 0-4-5-1-4 2-2-4-3 2-3-5-5 1-1-5 6-1 0 5 5-2 1 5 4-3 2 5 0 6 3 5 0 4-5-3-2 4 5 1-3-5 0-4-4 0 2-3 0-3-5-2-4 0 1-5M912 225l-2 4M912 225l6 0 5 5 1-5 5 5 6 0 6-1 6 4 6-1 4-2 4 5-8-3 4 6 4-3 1-5-5 0-5-4 1 6-1 4-5-3 0-7-6 3 0 5-7 0-1 4 5 0-2 4 5-1 1-2-4-1 3-4M818 226l-2 5 0 6 7 2 3 5 2-3M818 226l4 5-1 4M824 226l-2 5 4 5M824 226l4 5-6 0-6 0M929 226l6 4-1 4-6 2-3 4-5 0-4-4 5-1-5-4M929 226l0 4-6 0-2 5-1 5 3 4 2-4 6 1 2-3M935 226l6 0 6 0 6 6M935 226l6 3 0-3M947 226l5 0 6 1-1 3M958 227l4 3 6 1 6 0-4-4 5 0-1 4 4 0-3-4 6 0-3 4 5 1-2-5M958 227l6 0 6 0-2 4 4 4 2-4 5 4-1-4M964 227l4 4-1 4 5 0-1 4-1 3-3 1-3 1-2-4-3 3M964 227l-2 3 5 5 4 4 6 0 4 4 4 3 0 4 5 0 2 4 1 4-3-1 2-3-5-1-1 4-4-4 3-3-5-3 1-4 6-1M865 228l1 5M842 229l5 4M929 230l-1 6 3 5 5 1 2 5 4 4 4 4-4-1-2 2-4-1-1 4-5 0-5 1-1 3-1 4-5-1-3 3-1 4M929 230l5 4 4 4 3 3 2 5 4 5 1-4 5 4-2-5-1-3M882 231l2 4-3 1M860 232l-3 2 1 5M983 232l2 5-6-2 4-3M888 233l-4 2 1 5-5 0 1 4-2 3-5-2 3 3 2 3 5-1-5-3-3-5-3-5-4-1M857 234l3 2M900 234l4 2 7 1 5-1 0 4 4 0-2 3 1 4 4-3 5 5 2 5-4 1-4-3-1 4-4-1-2 4 4 4 1-4 4 4 4 5 3 5 5 4 1-4 5 5 3 6 4 4 4 1-4-4-4-1 1 6 3-2 0-3 4 0 0 4 5-1 5 3 5 1 3-3-6-2 4-2 2 4 3-3-5-1-1-4 2-3-2-5 5 2-3 3 2 4-3 3-5-3 0-4 6 0-5-4 3-1-2-4-3-4 3-4-6-1-2 3-2 2-2-3 1-3 3 4-4-1-3 2-4-4-1-5 1-4 5 4 5 0M921 235l4 5 3 4-5 0-5-1-5 0-2 3 2 5-1 4-5-2-4 2-1 4 5 3 4-1-4-2-4-4 6 2 3-2 3 4-4 2-2-4-2-4-4-2 0 4M921 235l7 1M961 235l1 5 5 3 5 2-2-3 5 1 6 0 1-4-5 0-5-4 7 0-2 4-2 4-4-4-5 0 1 4 2 4 4 5 2 4-4-2 0 3-4-2 1-4 5 1 3-3 6 4 5 0 3-3M961 235l5 4 4 3M961 235l6 0-1 4-4 1-5-2-5-2M979 235l3 4M816 237l0 4 1 4 4-1 1 5 1 4-4-3 2 4 1 4 4-1 5 2M873 237l-3 3M873 237l7 3M911 237l-4 4 4 5 4 2 4-1 4 2 3 3M911 237l2 6 3-3 2 3M911 237l5 3M841 238l6 3 2 4 1 4-2 2 5 1 1 6-5-3-1-4-1-4-3 1M841 238l2 6 6 1 4-2 1-3M901 239l-1 5 0 3 3 4M942 239l4 4-3 3 5 1-2-4-5-2M831 240l0 4 4-1 1 5 3-2 4-2 4-3 6 2 5 1 4 3 1 5-1 4-3 2-5 0-4 1 1 4-5-2 4-2 4 3 0-4 4 4 1-4 4 3-1 5-3 4 0 4 1 4-4-2-3 3-5-3-5-5-4 0 4 4 5 1-1-5 2-2 3-2-1-4 5 3 6 0 5-1 5-1-4-2 2-3 5 2-3 3 6 1-1 4 0 4 4 4-5-1-4-3-5-4-5-3 1 4-4 0-3-4-1 5-6-2 2 5 2 5-2 2-3-5 3-2 5 2 3-2 4 3 3-1-3-3-4-3-4 1 4 3 4-1 0-3 4-1 0-4 5 4 0-5M831 240l3 0M816 241l5 0 0 3 5 0 5 5-2 4-3 4 4 6 5 4 4 4 0-4-5-4 5-1 5 1 0 4 5 2-1-4-4-2M816 241l5 3 5 4 3 5 5 5 5 4 0 5 4 4 4 0 4 3 4-3 1 5 3 5-6-2 3 4 6 2 5 1-2 4 1 5 3 3 1-2 3 3 2 5-6-2-2 4 5 1-3-5 0-4-4 1 1-4 3-2 1 3M821 241l5 3 5 0 5 4M864 241l2 5 4 3-2 2-5 1 4 4 3 3-4 0-3 2 4 4 1-3-5-1-1-5-4-4-5 0-3-3-3-2 2-2 5 3 4 0 4-1 0-4M931 241l-3 3 0 5 3-1 1 3M931 241l2 4 3-3M853 243l1 5-4 1M885 243l-1 4 0 3 0 4 3 0M885 243l3 4 5 3-1 5 1 6 4-2 5 0 5 0 0 3-5 1-5-4-5-4-5 3 2 6 5 5 4 3 3 3-5-1-6-1 4 4 3 4 3-2 1 5 2 4 2-2 4 1 2 3 5 3 4 3 4 1-1-5-5-2-2 3 0 5 4-2 0-3-4 0-3-5-4-1-4-4-5-4 1-4 2-4 2 4 3-2 2-4-3-3-1 3 2 4M913 243l2 5-2 3 5 0-1 4 3 4 5 1 1-5-5 1 4 4 5 4 5 2-2 3-5-1-5-1 2 4-3 3 5 1 4-2M946 243l5 3 4-1 4 4 5-1 0 3 3 4 2 4-3 2 5 2 3 5 5 2 1 5 2 5 5-1 1 4-6-3-2 3 2 4 6 3 4-1 4 3 4-1-4-4-4 2-3-2-1 3 3 5 3 4 2-3 5 3 5 2 3 3-3 2 0-5-2-4-3 2 0-4-1-4 0-5-1-5 2-3-3-1 1 4-5-3-3-4-5-4-7 0 4 3-3 2-3 1 5 4 2-3-4-2-4-3-3 3 4 1-1-4 3-2 2-3 5 3-3 3 1 4 3 2 3-1 4 0 2 5 3-2 4 1-3 4-4 1 0 5 0 4-5-1-2 2 5 2-3 2-4 2-4 2 1 3 3 4 3 5-6-2-3 2-1 4 5 2-4 2-1-4-4-4-4-4 0 4 4 0 5 0-4-3-5-1 3-3 2 4-1 3 0 4 4 0 3-1 3 0 4-3 5 2 0 3 4 1-4 3-2 3 3 4-1 2 0 4-4 1 3 6 3 4-1 4-4 0-4-3 1-4 5-1-5-3 0 4 4 3 4 0 4 2-5 2-4 4 0-4 1-4 3 4 5 3 4 2 5 1 6 3 4-3 0 5-4-2-1 3 3 4-2 4-4-6 6 2 5-1 1-5-4-4-3-3-3-3 3-4 6 2 5 3 3-2 2 4 1 4-4-2 3-2-5-2-1-4 4 2-2-4-3-2 1 4-4 1-4-5-6-2 4 5 2-3 4 1 0 4-4 3-2-5-6-1 2-4-5-1-5-2-4-4-3-5 1-3-4-1-2 3 5 1 4 1 6 1 4 2 4 0 4 2 4-2-3-5 3-2-2-4-2-4-4-3-5-3-3 2-4-1 1 4 3-3 2 5 5 2 1 5-4 0 3 3 1 4 3 5 2 5 3-4 0-6-5-2 2-3-5-2-1 3 4 2 1 4-1 3-4 3 0-5 1-3-4-3-4 1-4 2-2-3-1 4-4-3-4 1 4 3 4-1 3-1 3 3 1-5-4-4-5-1-2-4 0-4-3-1-2-4 3-3 2 5-3 2 3 5 4 2-2 2 3 4 2-3-3-3 3 0-3-5-4-4 3-1 4-1 2-4-5-4-4-2-1 3 5-1-1 4 4 4M975 243l5 4-4 2 2 5 3 4 1 4 5 1 5 4 4-1-1-4-2-4-3 2-4-3 1 6 3-3 5 2-3 2 0 3 6 3-2-4-4-2-2-4 0-3-3-4-2-3M975 243l1 6-4-4 3-2M826 244l0 4M843 244l4 3M881 244l3 3 4 3 0-3 2-3M923 244l0 5-1 3-4-1 1-4M928 244l3 4 6 3 1-4 5-1M928 244l5 1 4 6 3 5 1 4 6 4-4 2-3 3 1 4-4-3 3-1-2-5 5 2 4 2 3 3 4 3-3 1 4 2 5 3 4-2-4-6-2 3-3 2-1-3 4 1 6 3 1-4-5-2-4-4-5 0-4 0 0-4 4 0 0 4 4 3-5 0-4 0 1 6 6 2-2-4-5-4-5 2 1 5 5-1 0 4-2 3-6-2 2 5 4-3M964 244l5 3-5 1 4 3 3 3M813 245l2 4 4 1-3 3 5 1 5 3-3-4 6 0M817 245l-2 4 1 4 2 4 2 4 1 4 4 1-2 3 1 4 2 4 4 1 1-3 4-1 4 0 0-3-4 0-3-4M933 245l-2 3M933 245l5 2M972 245l-3 2 7 2M866 246l-4 1 6 4 4 5 3 5 3-3 2 4-2 3 6 0 5 3M866 246l2 5-1 5 5 0 1-3 1-4 5 2-2 3 5 2 2-2 3 4-4 2-5-2 4-2 5 2M951 246l4 2 4 1 5 2-2 3-5-3-2-3M951 246l-3 1M879 247l0 4 5 3M879 247l-2 1-3 1M879 247l5 0 4 0M969 247l-1 4-4 0M854 248l4 4-1 3 2 3M854 248l-1 4-4 3-7-3 3 5 5 2-1-4-4 2-3 2-2-4 5 2 1 4 2 4 3-2 3-1 2 4 2-4 5-1M915 248l3 3 3 5-1 3-5 0 0 4M870 249l3 4 5 5M923 249l5 0M959 249l-2 2M893 250l4 5 0 4 1 5-5-3 1 4-5-1-6-4-3 2 4 3 2 4 0 3 4 1 4-4 4-1 5 3M868 251l5 2 4 1M879 251l3 5 1 4 1 5 5-1M953 251l-1 4 3 4-4 0-4 1-4-3-1-3M853 252l4 3-3 3M823 253l-2 1-3 3 4 1-2 3 5 1 0 4M982 253l-1 5 6 5 1 4 4 0 0 3 6 0 2 4-5 0 3-4M930 254l5 5-1 3 4 2 3-4 2 6 3 5-6-2-5-3-1-4M962 254l3 3 2-2M978 254l-3 2 4 4 3 2 2 3 2 5 6 0-4-3-2 3 1 5 0 4 5 3 4 5 0-4 4 3 4 0 2 4 1 4 2 4-3 3 5 1-2-4-5-1-3-2-5 1-3-3-5-3-3-5-3-5-6 0-6-2M857 255l5 1 5 0-1 3 2 3M892 255l5 0 5 4 0 4-4 1 4 3-4 1 0 4M946 255l5 4 3 3M946 255l-3 2-2 3-6-1 3 5-3 2 2 4M946 255l6 0-1 4 0 5 5 1 0 3-5-4M862 256l4 3M940 256l3 1M975 256l-4 1 3 4-3 2 5 2 3 5M975 256l-1 5 5-1 2-2 5-1 4 0M975 256l6 2M826 257l-1 5 3 4M909 257l-2 2M909 257l6 2M965 257l1 4-4-3-2 2 3 5-5-2 3 5-1 4-5-1 3 4 2 5-3 1-2-4-2 2 2 4-4-1-4-5M965 257l-3 1M965 257l4 2 2 4-3 3 6 2 2 4-5-1-3 2-4-2-4 1M971 257l-2 2 5 2 2 4-2 3-3 3-5-2 2-3-2-5M822 258l3 4 5 1M979 260l0 3 3-1M875 261l5 1M875 261l3 4 4 4 4 0M974 261l5 2 5 2 3-2 5 1M825 262l-4 3 2 4 6 1-1 4 3 1 4 3-2 4 1 5 4-1 4 0 5 1 3 1 3-2 1 4 5-2 2 6 4 5-4 2-1-4 5 2 4 3-4 0-4-1 2 4-5-2M839 262l5 5-1 4 0 4-4-1 1 4-5-4 0-3-6-1 2 5M854 262l4 0 4 4M979 263l2 4 3-2 4 2M979 263l-3 2 5 2M898 264l0 4-4-3 0 4M898 264l-4 1M930 264l-2 4-3 3 2 4 5 3 3 2 4 2-2 2 1 5 3-2 5 3 2 5-3 3-1 4-6 1-1 3-5-2 6-1 6 3 0-4 4 4 0 3 4 1 5 4 0-4 5 4 3-2 2 4 5 1 4 4-4 3 6 3 3-2-5-4 2 6 2 5 3 4-4-1-2 4-4-1-3 3-5-2-2-5-6-2-4-1 1-3-5 1 1 4 3-2-4-2 0-6 3-1-3-3-5-4 4 0 1 4 4-2-2-5 6 2 5 0 0 4-4 1-5-2-5-2-4-4 4-2-4-3 4 0 5-1 4 5 1-3 4-1-1-5-4-5 5 1 4 3 4 0 4 2 5 4 4-1-1-4-3-3 4 0 2-2 4 1-2-3 1-4-4 1 1 5 2-2 4 1 2-2-1-4-1-3 5 1M848 265l-4 2 3 4M848 265l4 2 4-1M884 265l-2 4-5 0 5 5-1 3 4 1-1 4 2 5 3 4-5-2-2 3-3-4-3-2 1 4 5 2-2 2 5 2 2-3 4 1 4 3 4 2-1 3-4 2-4 0-3-4 5 1-2 3 4 4 0-4 5 3-5 1-4 1-1 4-3-4-3 3-1-5 4-1 4-2-5-2 1 4 4 3 0-5M912 265l3 4-5 0-4 0M956 265l5 3 2-3 5 1 3 5 2 4 3 5-4 2 2 4 5 3 3-2 3-2-5-2-4-3 1-4M835 267l4 0 5 0M835 267l0 4 4 3M852 267l3 4M947 268l-1 3M956 268l-1 3-1 3M956 268l5 0 5 1-2 2 1 3M961 268l3 3M867 269l0 4-1 3 4 1 5 1-3 4 0 5 5 3 2-2 0-4-4-6 1-2 3 3M867 269l5 0 5 4-1 3M882 269l4 3 2 5 2-4M882 269l0 5 4-2M829 270l-5 3 4 1 2 4 5 0 5 0 4 5-5-1-1 4 0 3 2 2-4 0-4 1 6 4 5 2-4 3-4-1M863 270l4 3-4 0 0 4-3 1-1 3 3 4 3 5-4 4-5 0-2-4-3 1-1-3M992 270l3 4-1 4-2 4 4 1M992 270l-1 4-1 4 2 4-4 1 1 4-4-2 3-2 3 3-2 1M867 273l3 4-3 3-1-4M867 273l5 0-2 4 2 5 4 4M872 273l5 0 5 1 6 3 5 4 0 3 4 2 6 2 4 2 2-3 1-3 2-4-3-3-3 2-6 0M983 273l4 2 3 3M828 274l-2 3 2 3 2-2 3 4 6 0 1-4 3-3 3 5 2-4M882 274l3 4 4 3 1 4 3-1M991 274l4 0 3 3 2-3 1 4 2 4 1 4 0 4-4 1 4 3-3 1-5-3-3 1M991 274l-4 1-3 2M901 275l5 4 6 1 6 3-2-5 5 3 3-3 2 4 3 4 1 3 5 3 3-3 2 5 5 4-5 0 4 4 5 0-4-4-2-6 3-2 6 2 5 4-1 4-3 1 0 4 5 2-1-4 5 3 5-1 3-2 0-3 3-3 6 1-3-4-3-2-2-3 5 2-3 1 0 5 1 5-4 1-4-3 1 5-1 4 6 4-1-4 4 1 4 3 2 4 5 3-1 3 5 1 3 5-6-1-2-5-2-3-2-3M901 275l4 0 4 2M905 275l1 4-1 4-4 1 4 2 0-3 5 1 3 4-2 2-4 0-1 3 5 4 5 1-2 3-3 3-4 0-1 3 4 1 1-4 4 5-2 4-1 5 0 4-5-3 3 4 4 3-2-4-2 1-4 0-4 0 1-4 4 0-1 4 0 4 4 5-3 2-3 1-1 3 5 4 4-1 4 3 0 4 3 4 2 4 3-1 5 2 1-4 5-1 4 4 4 2-4 1 0 4-2 3-5-2-2 3 0 3 4-1 3-3 4 3 5 1 0-4-4 0-5 0 2 6-1 3 1 4-5 0 1-3 4 3 3-2-4-2-3 1-1-3-2 2 2 4 3 5 2-5 3 1 1 4-4-5M927 275l-3 3-5-2 2 5-3 2 6 4 5-1 1-3-2-4-2 3-2 5-1 5 5 0 2-3 2 5 4 1-2 3 4 5 2-5-4-3-1-3 5 2-4 1M927 275l1 4 4 3 0-4 4-1 3 5 3-4-6-1-1 3 2 4 4 3 2 5-5-3-5-3-4 0M863 277l4 3-3 2 3 4 3 5 2-4M863 277l1 5-4-4M888 277l-3 1M998 277l-4 1M840 278l6 2-2 3 3 4 1-3 3-3 2 5-5-2-2-4 5 1 5 2-3 3 6 2 3-3 2-3 5 1-2-3 5 2-3 1M942 278l5 3 2 4 2-3 2-3 4 2-2 2 3 5 3-1 2 4-3 2-3 3-1-4-3-3-1 3-3-4M964 278l4 3 4 1 5 2-3 2 2 5 0 3-3 3-5-5 5 0M906 279l4 5 5 1-3-5M828 280l5 2 5 4 3 3 1-3 4 4 4 4 6 0 4 3M828 280l1 4 5 3-3 1 1 4 2 4 5 5M935 280l-3 2 5 2-4 2-3 3-6-2 4 5 4 2 2 4 6 0 0-4 3-2 5 3 4-3 4 0 2-4 2 5 2 4 4-1 4 4M960 280l4 2 4-1M960 280l0 4-5-1-2 2 5 3 2-4 1 3 4 0 3 5-2 4 0 4-5 1 1-4M976 280l1 4 3-1M859 281l-3 2 3 5 6 2 4 3 3 2-2-4-5-1M859 281l5 1M893 281l4 0 4 3-4 2 0-5M893 281l4 5M921 281l5 1 4 1 2-1 1 4 2 6-3 2-3 1-5 2 7 3 7 3 3 4-4-1-2 3-3-5-3 0 1 3 2-3-1-4 3-2-5-3-6-3-3 1 4 4-2 3 3 5 2 4-5-2 3-2 4-1-2-2-3-5M921 281l3 6-4 0 3 5M947 281l4 1 2 3M957 281l3 3 4-2 1 5-2 4 3 5 7 1 5 4 5 4 6 3-5 0-5-2-1-5 1-3 1-4-4 0M833 282l-4 2 2 4 5 3M872 282l7 2 5-2M992 282l-1 4M918 283l2 4-2 3-5-2 2-3 3 5 2 3M918 283l-3 2 5 2M930 283l3 3M879 284l7 3 5 2 2 4 2-4M879 284l5 5 3 4 3 4-5-1-2 3 4 1 3-3 1-3M960 284l5 3M977 284l2 5 1 5 5 2 2 3-4-1 4 5 5 3 3 1 1-3 3 5 3-1 4-2 4 1-1-3 2-2 1 4-3-2M977 284l5 3 2 4-5-2-3 2 4 3 3 4-1 3 5 2 0-4 2-2 2 4 1 5 2 4 4 3 0 5 5 3 5 2-2 3-3-5-4 2 0 5M890 285l1 4M890 285l-4 2-2 2-5-1M905 286l2 4 4 3 5 0M1000 286l4 4 2 0M847 287l4 4-1 3-6 0-4 0 0-3 1-2-3 0M847 287l-1 3-5-1 3 5-4-3M859 288l-1 4 3 2M846 290l-2 4-1 4-3-4M846 290l5 1 5 3M877 290l3 4-3 4-4 1-4 3M877 290l-2 2 2 6 4 5 1 4 4 2 4 0 4 3-2 4-5 1 1 5-4-3-4-1 3 4M911 290l0 3-5 0M1004 290l3 4-3 0 5 4M1004 290l0 4 0 3M870 291l-1 2M870 291l5 1 5 2 3 5 2 3M984 291l3 3M984 291l-4 3M928 292l1 3 2 5-4 2 5 2M952 292l1 5 4-1M956 292l4 1 6 3M893 293l5 2-3 2 3 5 1 5 3 5-3 3-3 1-2-4-5 1-2 4-4-5-5-4-4 2-4-1-3-3-3 2 6 1 2-2 6 1-3-4 4 1-2-3M893 293l2 4-3 4 2 3M911 293l5 5 3 5 3 4 3 4-2 3 4 5-2 4-6-2-2 3 4 4 5 3 5 0 4 2-2-5-2 3 0 3-5-3-4 2-2 3-2-3 4 0-1-5 0-3 4-2-1 4 2 4 1 4-5-2 3 5-5-2-3 3-5 2 1 4-5-3 1 5 2 5 2 5 3 5 2-3-5-2-5-2 3-3 3-2 5 2 5 3 1-3 4 5 1 4 2 3 2 5-4-2-2-4 4 1 2-3-5-4-3 2-5-3-3 3 2 5-4-2 2 4-1 4-2 4-3-4 5 0 5-1 3-2 5 0M911 293l0 4-3 2 6 2-3-4M844 294l4 4 3 3-4 0-2 2 3 5 6-1 6 4-1 4-5-4 0-4 5-1 4-1 4 1-2-4 0-3M898 295l5 4 0 4M903 295l0 4-4 0M948 295l1 3-4 0M948 295l5 2 3 3 1 3-4 2-4-3-1 4 4 4 5 0 5 0 3 2 1-3-4-3 0 4 0 4 5 2 3 4 2 4 3 6 5 2-1 3-4-5 3-3 5 2-2-4 6 3 4 4 0 4 0 4-2 3-4 0 4 4-5 0 4 4-5-1-4-3-5-2-4-4 0 4-4 1-5-4-5 0 3 2-1 2-2-4 0-3 5 3 4-3 2 4 3-2-2-5 5 2-3-4 4 1-1 3 3 4-6-1M920 296l2 4-6-2M996 296l2 4 3-1 1 4 4-2M890 297l2 4 6 1M890 297l5 0M953 297l0 4-4 1 0-4 4 3 4 2 4-2-5-1M953 297l-4 1M843 298l2 5 5 1 1-3M843 298l4 3 1-3-5 0M869 298l4 1M877 298l6 1-2 4 5 3 0 3M903 299l4 3M903 299l5 0M987 299l4 2 5 3-2-5 4 1 4 3 4 3 2 4 1 6 4-2 1 5 3-1 1 4-2 1-2-4-3 2-5-3-2-5 5 3 2 5 2 4 3-2 4 3-3 2-4-3-3 2-2-4 3-2 5 2 1 5 2 4 4 2-1-4-5-2-3 2 3 5-3 2M922 300l-3 3 6 2 5 2-3 2 3 5 4 3 5 1-3 3-2-4-3 1-4 1 3 5-5-1-3-5 5 1 5 3 4-1 6 1-3-4 1-2 4-1 0 4 5 0 0 4-7-1-2 4-4-5-1 4-2 3 5 2-3 3 2 4 4 5 2-4 5 2-1-4-4 2-6-1 2-3-4-1-4 1 6 3-5 2-3 3-4 0 0-4 4 4-2 3 2 5 6 2 3-3-1-4 4-3 1 6 4 4 4 1 2-2 4-2 4 5 5 0 1-4 0-4-4 1-1-5-2 2 3 3-4-1-2 3 0 4-4-2-4-2 2 4-1 2-3-3 2-3-2-3-5-4 6 1-4-5 0-5 4 3 5 2 4 4-4 2 4 5-6-2 2 4 2 5-4-3M922 300l5 2-2 3M998 300l-2 4-4 2-3 2-2 4-3 3 2 5 6 1-2 3 5 2M847 301l3 3 4 0 0 3-4-3-2 4M914 301l5 2-2 2-6-1M914 301l3 4 5 2-2 3 3 4-5-1-5 0 4 4-5 1 4 2 3 1 2 4-4-1-3 2 4 3 3-1 3-1-3-2M961 301l6 4 4 4-5 0-4 1-4-3M978 301l-4 1-1 4 2 4 2-1 2-3 3 4 2 5-5-2-2 1M978 301l4 0M865 302l-2 3 1 3 3 4 3 5 5 3 3 5 2-3 5 4 3 4 3-2 1 5 5-2 4 3 2 4-4 2-4-3-3-4-2 4-5-2 2 3-4-1-2-4 4 2 3-2-5-3-2 3-5-1-4-2-3-4-5 0 2-4 3 4 5 1 4 3-2 2 0 3-4-2-2 4 4 0 2-2 3 4 2 4-5 3-1-5 4-2 6 3-2-5-4-2 0 4M881 303l-2 2 3 2-4 1 0 5-5 0M970 303l3 3 6 0M987 303l2 5 5 2-1 4-6-2-5-2 2-2M1002 303l0 5 6 2 5 4 1-4-4-3 2-1 2 4-6 0 2-3M1002 303l-6 1 6 4 2 5 4-3M907 304l3 4-2 2M879 305l-1 3M917 305l-2 4 3 4-1 4 2 4 3-3 1-4 4 1 0 4M917 305l3 5-5-1-5-1 3 5M953 305l-1 5-1 2-3-3M967 305l6 1-2 3M937 306l3 3-5 0-5-2 2 4-5-2-2 2 5 3 1 4 5 3M944 306l-3 1-1 2 4 2 0-5M973 306l4 3 2 4 3-3-5-1M899 307l-2 4-3-3 0 4 5 3-1 4-1 3-2 3-3-5-4 2M941 307l3 4 0 4-4-3-5-3 1 5 3 4 5 1-2 3 3 3 4 4-5-1-4-2-2 4 5 3-4 1 4 4M989 308l4 6 5 4 1 5 7 3-4 2 0 3 4-1 0 5 3 5 4 5M935 309l-3 2-2 3 6 0-2 3M940 309l0 3 0 4 4 3 5 4 5 5 1-4-3-2 2-1-5-2M966 309l2 4 4 0M874 310l4 3 5-1M920 310l-2 3 4 5-5-1-1 3-4 2 5 2 1 5 0 4-3 2 5 1 2 4 3 2 2 3-3 3-4 0-1 4 6 0 5 1-1-3-4 2-5-4-4 0-2 2-5-3-3 2 5 3 5 2 3-2M920 310l5 1 2 4 3-1M1014 310l1 4-2 0 4 4-2-4M860 311l4 4 3-3M897 311l2 4 4 4-5 0-3 0-3-3 0 4 5 2-2-3 1-3M897 311l5 1 1 4 4-2M897 311l-3 1M932 311l4 3 4 2M944 311l7 1-3 3M944 311l-4 1-4 2M840 312l5 2 3 5 5 3-2 1-3 0 3 4-6-3-2-4 5-1 2-3M840 312l2 4 1 4 5 3-3 1 2 4 1 4 4 1 5 1 5 3 0-5-2-5 4-1 4 3 4 4M965 312l3 1 4 4-2 3 6 1M878 313l5 3 4 1-3 2M878 313l2 5 0 4M878 313l-2 3-1 4 5-2 3-2M968 313l-1 3-2 2-3-4M998 313l6 0M998 313l-5 1M957 314l-4 3 1 4 1 3-6-1-4 2-5 1-5-1 3 5 1 4M957 314l5 4 4 4-2 4 3 3 3 2 5-1-6-3-5-1-5-3-4 1 5 5 4-3-2-4 0-4 3 0 5 2-4 2 6 2-3 3-2 2-1 2-2-5M957 314l1 5 1 4 3-1-4-3-4 2 5 2 1 6 3 5 5 2-3 3-6-2 4-3 3-3 4 3-2 2-2-5 4 0-1-4-3-5-4 0M854 315l4 3 1-3-5 0M859 315l4 3 3 4-4-1 1-3-5 0 0 5 6 3M859 315l5 0 6 2 1 5 4-2M864 315l-1 3 4 1-1 3 5 0 3 5 4-2 7 1M864 315l3 4 3-2M899 315l4 1 4 3M927 315l4 3 1 4 3 3-5-1 3 4-5-1-2 4M876 316l4 2M903 316l0 3 3 4 4 4 4-1 0 4 4 3M887 317l5 3 3-1M965 318l1 4M848 319l0 4M848 319l3 4M867 319l4 3-2 4-1 3-4 1 3 3 3 4 2 5 4 4 6 1 4 3 1 4-4 1-5 1-1 5 3 4 2-3-5-1-4-5-4 1-4 0-1 4-3 3 6 2-4 2 4 3-3 1 4 2 3 5 2-4-5-1-1-3 6 4 5 3 3 3-5-1-5-1 3 4 2-3-3-5-2-5 3 1-1 4 5-1 0 4-2 2 3 6-1 4-4-4 0-3 5 3 2-5 3 0 4-1 4 0 4 2 5 2-4-6-4-5 3-3 5 3-2 2-3-5 0-5 5 0 4-1-1-4-3 1 4 3 5 2 2 4-5 1-5-2-1 4 2 3-1 3-1 5 5 2 3 4 3 4 6 2 4 0 6 0-6-3 3-2 3 5 6 3 3 0 1 3-1 5-4-1-3 2 2 4-4 2-6-4-5 0-6-1-1-4 3-2 4-1-6-4 1-4 1-3 5 5 3 2 4 2 3-4 1-3-4-2-1-4-5-3-4 3-5-4-3-4-5 0-5-1-1 4-1 2-3-4-5-5 3-1 3 3-1 3 0 3-4-3-1-5 1-4 2 3 3-1-5-2-1-5-5-4-4-6-5 0-4-4 0 5-4-5 0 5-5-4-2 3 3 1 4 0 4 5 0-5 4 3 4 1-2 3-2-4 0-4 0-4 5 4 0-5 5 4 0-4 3-1 4-1 4 0 5 2 4 2 3-4 2 6-5-2 3 5-2 2 4 2-3 2 0 3-4-2 0-4-4-3-5-1-5-3-4-3-1-4-1-4 4-1 2-4 4 3-1-4-3 1M916 320l1 4M986 320l4 4-3 4-4 1-3 3 4 1-1 3 3 4 5 0-4-4-4 0-1 4-5-1-3-4 1-5M862 321l-4 2-5-1M871 322l7 3 5 5-5 0 3 3-2 2-3-3M932 322l-2 2-2 3-3-4M858 323l2 4 4 3M910 323l0 4-4 0-1 3-4-3-2 1-4-3M878 325l0 5M945 325l-1 3-2 2 1 3 3-2 1 5 3-3 2 5-4 2-1 3-1 3-4 2-4 1 2 3-5 0-1 4-5 1M940 326l2 4-4 0M1006 326l4 4 0 4 0 3 3 3 4 2 5 1-4-4M1006 326l0 4-4-2M1006 326l4 1 4 3M851 327l2 4-3-1 1-3M901 327l1 4-5 0 2-3 3 3 3-1 5 2 4-2 4-1 4 4M910 327l0 5 2 4 0 5-4-3 0 4-4 2-5-4 0 3 5 1 2 5-5 0-2 2-2-5-3 3-3-3 0-5-6 1 6 4-1 3 0 4-4-3 0-4-5-3-6-2-1-4M910 327l4 3 1 5-5-3M924 327l4 0 3 4M1010 327l0 3-4 0 4 4 3-1M944 328l2 3 3-2M954 328l3 4-2 3-2-4M954 328l6 1-3 3 2 5 2 5 6 1-1 3 4 4 0-5 4 0 1 4-5-4-3-2M987 328l0 4 4 4-4 0-1 4 3 3M868 329l-1 4-1 3-4-4M868 329l4 1M960 329l6 2M983 329l1 4 3 3 0-4 4 0 4 3M983 329l4 3-3 1M850 330l2 3-2 3 4 1-2-4 1-2M883 330l5 0 4 3-4 0 2 4 5 0 0 3 4 0-1-5-1-4M888 330l0 3M905 330l2 4 5 2 3-1 2 4-1 5 4 4 2-4 3-2M942 330l4 1 4 2 5 2 1 4-4-1 3-3 4 2-3 2M902 331l-1 3 3 1 4 3-5 0 1 6 5 3 4-2 3 3M902 331l2 4M902 331l5 3 1 4 4-2 5 3 5 1 3-2 2-3 5 4-7-1M970 331l0 3M970 331l4 4 5 0 3 5 3 3 1-3-4 0-1 3-4-4-1 3-2 3M892 333l6 2-3 2M857 334l2 5 2 4 4 0-1 4-3-4-1 2 4 2 1 5 4 0-5-5 5 1-4-5-3-6-3 2 6 4 5 1 6 2-3 2 0 4-4 0 0-4 4 0 5 3-2-5 4 3-2 2-5 1-4-4 1-4 3 4M901 334l-3 1 5 3M931 334l1 5 2 4-5-1 4 5 2 5M931 334l-4 1M1023 334l2 4 1 4-4-5 1-3M876 335l3 0M866 336l-4 1 5 3-2 3M866 336l4 1-3 3 5 2-2 2-3-4-1-4M854 337l2 5 5 1M854 337l5 2-3 3-3 2-2-4 5 2 1 4-2 2 1 4 2-2-3-2-2-4 4 2 3-1 1 4 4 3-5 1-4-1 2 4 1 4 2 4 2 4 1 4 2 4 2-2M870 337l5 4-3 1M890 337l5 3-4 1 6 5-6 0-5 0 4 3 5 4-1-4M937 337l-1 4 5 1M1010 337l-1 3-1 4 3 5 3 5 5 1 1 5 7 2-3 2 3 3 4 4 4 0 2-2-5-2-1 4 4 4 0-4 4 2-2-4-1-4-4 2 3 4M1022 337l3 1M952 338l0 6-4-4M999 338l1 5-5-4 1 4-2 3-1 4-5 1-3 2 2 4 5 1-3-3 3-1M999 338l6 2-2 2-3 1-1 4-2 3M917 339l5 5-6 0-3 1 1 5 2 4-3 3-2 3 5 2-3 3 4 5 3 5-5-1 1 4 3 6 5-1 0 4-4 2 2 4 0 3-1 2-1 3-3 1 5 4 4-1 4 3-1-4-3 1 1 4 5 3 5 2 2 4 2 4-3 2 4 2 0 4-3 2 6 2-3-4-4-3 1 5-1 5 1 5 4 2 4 1 1-3 1-4 3 4-4 0 6 4-2-4 5 2-3 2 5 2-2-4 2-2 1-3 6 0 1-3 5 0 0-3 2-2 5 1 5 1 4 3-1 4-4-1 3 4 1-3 5 1 3 5 5 3 5 0-1-4-4-3-2-4-5-2 0-4 2-3 6 3 4-2 3-2 2 5-5-3-5-2-5 1 2 5-4-2-3-4-4-4-4-6 0-4 2-3 0-3 4-1 2-3 5 3 3 4-3 2 4 2-1-4 5 3-4 1-4 1 0-3-2-4 2-2 5 1-2 3-5-2-3-5-5-4 0-4-5 1-6-3-5 2-4 1 5 4 6 3 2-2 3-1-1-4-2 2 0 3-4-3 2 5 0 4 3 3-2 3 5 4-1 4 5 2 0 4-3 1-4 3-2-5-3 4-2-4-5-3-1-5-4-4 2-4-4-5-4 1-5-1-1 4-4-5 5 1-4-5 2-3 3 4 4 5 0 4 6 4 1 5 3-1 3 1-1-4-6-1-4 2-2-6-5-5 1-4-5-1-1 4-1 3 5 2 6 1 3-1 3 5M932 339l4 2 1 4 5 3 6 1 2-2-4-1M895 340l4 3-2 3 4 3 2 4-2 3 3 4M895 340l2 6 4 0-2-3M922 340l0 4 5 1 6 2-4 3-5-2 1 4M991 340l5 3 4 0 4 4-1-5M1005 340l3 4-4 3 7 2-4 3-6 0-2-5-5-1M1005 340l4 0 4 0M936 341l-2 2-1 4 5 2 4 2 4 1-2 3 5 0 3 4 5 2 1 5-4 1 2 5-3 3 4 4 5 0 0 5-5-5-6 0 2-4-4-1-3-4-4-4-3-3 5-1 2 4 5 4 3-3 5 3-3 2 2 4-5-1-2-5-5 0-2 3 5 1 2 5 5 4 1-4 1-3 4 3 4 4 6 2 4 5-2 4 0 5-5-3-3-4-4-1-4-2-4 1 1 6 4 5 1 5 2-2 4 1 3 4 3 4 2-3-5-1-5 2 0-4-4-1-1 4-3-3 0-4 4 3M856 342l4 3M885 342l1 4-4 1-2 2 3 2-5 0M976 342l3 5-4 2 4 3 4-2 2 3-2 3 4 1-3 3 1 3-4-2-4 0-3-3-1 4-6 0-2 4 5 1-3-5-5 0-5-1 3-3 7 4 5 3 1-3 4-1 2-4-5 1 0-5 1-4-5 1-4 0-4-3-1 3-1 4-4-1 4 5 0-4 4 3 3 5 2-4 5 0-4-4-5 0 4 4 4 4 4 4 0-5 5 4 3-2 6 2 1 4 1 4 2 4 3-1 4 4 6 0-2-5 1-2 4 0 5 1 4 4-2 3-4 0-6-1 6 5 0-4 1-4 3 4 1 4 3 5-4 2 1 5 3 5 0 5-4 2-1 4 1 4-4 1 5 3-1-4-5-3 1 4 0 3-5 0 3 4 4 4 1 5 2 6-4 1-3 3-3-5 6 2-4-4-2 2-4 0-3 1-4-2-2 3-1 5 2 6 3-3 3 4 3 4 5-1 4 2 4-1 4 3 0-5-4 2-4-3-4 2-4-3-1 4-1 3-2 4-7-2-6 1-6-1-4-1 3 4 1-3-4-5 0 4-3 3-4 0-1-4 5 4 6 1 3 4-4 2-4 1-5-1 4-3-4-4-4-1 3-3-5-2-3 3-6-5-6 0 0-4 6 4-2 3-4-3-5-4 0 4 5 0 0 4-2 3 2 4-3 3-3 3-1 3-4-3 5 0 5 2-2-5 5 1-2-4-5-1 2 4-7-2-5-5-5-1-6-2-3-5-6-2-7-3 5-1 2 4 0 4-3 2 2 4 3 5 1-3-4-2-3 3 6 2 2 4 4 3 5 3-1-3-4 0-6 0-6-3-6-2-3 1-2-4-1-4-2-4-1-4 5 3-4 1 7 4-3-5-2-5-1-4 6 3 4-2-5-2-2-5 2-5 5 2 4-2-6-3 2 5 3 5 2 4 5 2-3 2-6 2-1-5-1-4 6 3 4-2 1 4 3 4 6 2 3 5-1 3-2 3 1 4-1 3-4-3-6-4 6 0 4 0 6 2-4-5-5-5 0 4 3 4M976 342l5 1 4 0-1 4-1 3M1026 342l2 4 1 3-2 2-4-3 3-1-4-4 1 5M1026 342l-4 1 6 3-2 1M934 343l3 2-4 2M947 343l5 1 6 2 3 4 4 4-1 3-4 1-6-2 3 5-4 2 1 4-5-2-3 1M947 343l3 4 2-3M981 343l-2 4 0 5 4 4-4 1 2 4 1 4 0 3 4 3 3 0 4 2 5 3-1-4-4 1-3 2-4-4-1 4-4 0 2 4-1 4 5 4 5 5 6 3 1-3 3 0 5 2 1-3-4-4-5-2-6-1 2-4 0-3-5-2-1-4 3-2 5 3-1-4-5-3-4 2-1 4-6 0 1 4-3 1 5 3 2-4 4 5 4 4 5 5 4 3 1 3 4-1 5 1-4-4-5-1-1 2M981 343l3 4-5 0M996 343l3 4 4 2 1-2-5 0M904 344l-3 2 5 3M922 344l2 4M857 346l4 3 3-2M857 346l1 4 3-1-1 4 1 4-2 3 5 1 3 5 4 4-4 1 0-5 2-4-5-1-3-4M901 346l0 3M1004 347l3 5 7 2-4 2 0 4-2 3-5-2-2 3-2 3-3 1-4 1-5-2-2-4 4-2-2-4 2-2-1-4M942 348l0 3-2 1-1 4 0 3-5-3-4-3M956 349l5 1 5 0 4 4 4-1 5-1 6 1 4 2M1003 349l4 3-1 4 4 4 2 4 4-1 2 4 0 3 4 4 5 0 1 4 2 5 6 3-1 5-2 4 0 5-2 4-3-4 5 0 3 4-5 0-4-1-5-1-4-1-4 0-4 0-4 2 1-4 0-5-4-4 1-3-3-4 1-3 4 4-2 3 5 1-1 3 5 1 6 5-1 4 0 3 4-2 4 4-4 1-4-3 0 5 4 6-4 2 5 3 4-2 0-4 4-1 4 4 7 0-3-5-1 3 4 2 2 4 4 2 4 3 4 1-3-4-5 0-5 1-5 1-2 4-4-3-4 1 0 6-2 2 4 3-2-5-4 0 2 2-1 4 5-1 4 1 4 4 4 2 4 3 3 3-2 3 5 1 3 5 1-3-4-2-3-4 5 2-2 2-2 4-3-5-2 3 2 4-5 1-5-4 0 3-5-2 5-1-4-4-1 5-1 4-1 4-3 1-4 0-5-1-2 3-3-4-4 1-6-3 5 0 5 2 0 3 3 1 0 2 0 4 4 3 4 4 0 3 1 5-4 1 0 4-3 2-5-2-3-4 0-4 6 0 5 4-1-4 5 3 4-2-5-3-4-3 4 0 5 2-5 1-4 2-4 0 0 5-3 3 2 6-4 3 2 4 4-1-6-3-5-2-2-5 5-1 4-1-5-2 2-2 6 1 5 3 3 4-6-2-3 4 2 6 6 2 2 4 2-2 4-1 5 0-1-4-3-4 2-4 6 3-3 2-5-1-3-3 5-1 3 5-2 3-4 0 1-4-4 0 1-3-5 0 2-4 8 3 2-3 3-2-1-4-1-4 0-5-6-2-4-3 3-1 1 4 3-3 3 5 5 1 4-2 3-3 3-1 5 2 0 3 5 1 4 3-1 2 4 0-3-2 2-2 1 4 1 4-5-4-3-5-5-4 4 0 1 4 2-3-3-1-3-3 1-3-5-4-5 1-5-3-3 2-3-1-3-4-4 0-4-4-4 1 4 3 0 5-4-4 0-4-4 1-4-3 0-4-1-5-2-5 4 2-1-5 5 3-1-4 5 3 4-1 2-4 3 6 5-1 4-2 0 4-3 2-1-4 0-4-2-3-2 3-1 5-5-2 1 4-5-3-4 1-4 2-2 3 4 4 5 2 4 4 5 0-2-5-3 2-4-1-3-5-2 3 1 4 0 4-4 2 0-5-5 1 1-3-1-4 5 2 3-1M1003 349l-2 3 0 5 2 4 2-2 3 4 4 5 3-2-3-2-4-1-2 3 6 2 0-4M858 350l2 3M970 350l4 3 5 4 0-5M970 350l0 4-1 4-5-1M899 351l2 5 0 5-5 0 0 4 6 4-6 1-5-1 2 4 6 2-2 3-4-1 0-4M899 351l-4 2 2 5 4-2 5 2 2-3 3 5-5-2 2 4 2 4 3-1-1 5-1 4 4 0M942 351l2 4-1 3 4 1 2-4 5 1-2 3-5 0 2 6 4-2-1-4M940 352l4 3-5 1-5 0 0 5 3 5M1001 352l5 4-5 1-3 2-2-5M1007 352l3 4-4 0-1 3M1023 352l2 5 3-2 2 4-3 3 5 5-5 0-4 2 4 5 5 3-4 1-4 1-4-1-5-1 1-3 6 0 2 5 2 2 4 2 3-2 3 5 5 2-2 2-4 1 5 3 4 2 2 3 2-2-1-4-3 3 4 1 2 4-4-2 1 4 1 4-4 1 6 3-2-4-4-3 0 4 3 5 3-2 3-2-5-2 3-2-4-2-3 1-2-5 2-3-1-4-3 2-1-4-3-4 3-2 2 4 3-3 1 4 2 4-4-1-4-2M890 353l-3 1 0 4-4-3 0 4-5-3M890 353l2 4 4 4 5 4 1 4 4 6-5-2M890 353l5 0-3 4-1 4 5 4-5 0 5 5M895 353l6 3M956 353l-2 3M916 354l5 2 2 5-5-2-2-5M1014 354l1 4 1 5M924 355l2 4-3 2-3 3 2 5-4-3 2-2 5 3 5 3-4 3-4-4 0 4-5-3M944 355l3 4 6 4 5 3 1 4 4-1 2-3 3 5 5 2 2-4-3-4-2 2 5 2 2 4 4 2M1019 355l-2 2-2 1-5 2M1019 355l6 2-5 3-5-2-5-2M983 356l1 4-3 1M892 357l-5 1 0 4-5 0 2 5-4-2-2 4-4 2 4 3 3 4 0 3 3 4 0 4 4 0-4-4 0-4 0-4 4 3 1 5-5-4-3-3-3 0M979 357l5 3 5 1 3-3 6 1 5 2 3 5-5-2-3-5-3 4-3-5M1025 357l5 2 2 4 2-2 2 4-4-2 0 4M1025 357l2 5 0 5 1 4 3 0 0 3-4 0 1-3-5-2-5-2-3-1M887 358l4 3-4 1 0 4-3 1 4 4 3-2-4-3 4-1-4-3-4-3-1 3M887 358l-4 1M897 358l-1 3-5 0 0 4 0 4M943 358l1 4-5-3-5 2 5 2M960 358l2 4 3 4-4-1-4-4M926 359l2 4-5-2 2 6 1 6-2 4-2 3-3 4 1 5-5-2-2 4-4-1-2 3 5 1 3 4 2 4 1 4-5-3 1 4-4-2-4 1-4 0-2 2 4 4 0 3 0 4 0 4-5-2 5-2-5-2 5-2 5 0-5-3 1-3-5-1-5-4-1-4 3-1 5 0-2-4-3-4-1 3 4 1-3 4-1-5-4 1 2 5-4 3 5 1-1 4 6 0-1 4 5 3 4 4-4 0 4 3-4 1-1 3-4-5-5 0-4-4-4 3 3 5 5 4-2 4 2 4 2-4-4 0-2 2-2-3-2-4-1-4 1-4 5 2 3-1-1 3-4 1 2-3-1-5 2-4 4 1 3 3 0 4-2 4-3-4 1-4 4 4M926 359l4 2-2 2-3 4M947 359l-3 3-2 4-1 3 3 4-2 4 0 3 4 1 3 5 5 4-4 1-3 2-5-2-3-3-1 4 4-1 3-2 4-3 1 5 5 5-4-1-2 3-2-5-2-4 5 2 1 4-4-2-4 3-1-5-1-4-2 1-5-1-1 5 5 0-4-5-6-2-4-2-2-3 4 1-2 2M873 360l-4 2 3 5 2 4M911 360l-3 2 5 3 5 1M911 360l2 5M930 361l4 0M989 361l2 4 4-2 4 4 2 4 6 2 1-3 4-2-1 5 4 4-5 0-3-4-3-4-5-2M989 361l6 2 1 5 5 3 5 4-4 1 0 4-4-1-3-2M869 362l6 2 5 1 3 5 5 1M944 362l5 3 2 5-2 4-3 3 5 2 0 4-2 3-6-2 2 5-4-2 2-3-6 0 2 4M962 362l-1 3 2 4-5-3 3-1M1027 362l5 1M995 363l6 1 3 5-3 2-4 1 5 4 6 4-2 4-5-1-2 2 4 5-5-1 1 3 4 3-5 0-2-4 3 1M875 364l-3 3-1 3M875 364l3 5 4 4 5 2 6 2 3 5 3 5 2-3 3 5 5 1 1-3 5 0-1-5 5 2M905 364l3 4 4 2M1024 364l-4 1 3 4-1 5 6 4 5 3-1-4 3-2 4-2 1 4-3 2 5 2 2 4-5-1 3-3-2-4-5-2 2 4-5-2-1-3 4 1M972 365l5 1 5 2 5-1 2 4M982 365l5 2M982 365l-5 1-2 3 5 2 5 4 5 0 5 5 3-1 0-3 4 0-1-5M1020 365l-2 2M867 366l5 1 6 2 0 5 4-1 2 4 3-2-4-5-1 3M910 366l-2 2-1 3-1 4 1 4-4-3-4-1 3 4 4 4-5 1M977 366l3 5 2-3M1006 366l2 4 3 3-1 4-2 3 2 5 4 0 0 3 4 4 6 3 4 5 1-4 4-1 5 1-3-5-5-1 3 5-6-3-5-2 3-3 5 3-3 2 2 4 4 4 4 0-4-5M1006 366l-2 3 4 1M884 367l-1 3-5-1M905 367l2 4 4 3 0 5-1 4 4-1-3-3-4 0-1 4 4 0 0 4-4-1-2 3-2 3-5-1-3-4 1-3-3-1 2 4 5 0-2 4-5-1 4 4M905 367l-3 2M905 367l3 1M970 367l3 6-3 3-2-5-5-2 1 5-2 5 6 1 4 5 6 3-2 2-4-1 0-4 5-2 5 0-3-3 4-1 5 4-6 0 0 4 5 0 5 1 1-4-5-1-1 4-1 3 6 2 4-1 2-2 1-4-4-5 6 3-3-4M970 367l-2 4-4 3-5-4 1 4 2 5M934 369l0 4 4 2M934 369l5 3 3 5 4 0-2-4-5-1 2-3M930 370l4 3 5-1M930 370l2 5 3 1M951 370l5 2 4 2 4 0 6 2-2 4-4-6M980 371l-3 2-4 0 1 5-4-2 2 4 0 5-5 2-5-3-6-1 3 4 3-3 4-1 2-3 4 0 5 3 1 5 5 2 3 0-4-3-4 1 3 4 4 4 5 4 5 0 4 3 1 5 7 2 6 4 4-1 5 2 5 3 6 3 2-4 3-2-3-3 0 5-4 0-4-3-5 1 1-4-5-2-5 1-6 0-3 2-6-1M1028 371l3 3M922 373l4 0 6 2-3 3-5-1 2 4 2 4-4 2 5 1 4 4-4 1 4 3-5 0 4 6 6 0-4-3-2 3 1 4-4-2 3-2 5 5 5 2 3-1 0 4 5-2 2 6 4 4 1 4-3 1-5-1 2-3 3 4 4 3 3-2 0-4-4 2 4 2 3 5-5 0-2 3 3 5 2-4 4 4 5 1 1-4-3-3 3 0 5 3 2-4 3 3 1 4 2-2 3-1 5 0-1 5-4-5 0-4 5 0M922 373l2 4-4-2 2 5-6-2-2 4M922 373l-2 2-4 3-5 1-5-4-3 1M926 373l3 5 5 1-2 3 2 5-5 1-1-3 4-3 5 2-3 3M973 373l5 3 1 4-2 3-3-5 5 2M977 373l1 3-4 2-2 2M878 374l6 3-3 1M911 374l-5 1M911 374l5 4M960 374l-2 2M1022 374l-2 4 3 4 1-3M990 375l-1 5-6-1M1006 375l4 2 4 4 5 4-5 0 4 3 4 2 2 5-5 2-7-2 3 3 3 3M866 376l5 3 0 3 3 1M866 376l1 4 4 2 3 4 1 5 3-1 4 1 2 5-2 3 4 1-2-4-4-2-2-4M942 377l4 4 5-2M946 377l0 4-3 3M929 378l-3 3 6 1-3-4M1028 378l-2 3 2 4 2-2 2 4 3 4M871 379l-4 1 2 4 5 2 5 0 5 3-2 2-3-5 5-1 5 0-1 4 4 6 5 4 1 4 2 5M1037 379l-4 2 6 3-2-5M989 380l6 0M989 380l-1 3 4 5 0 4 3 4 0 4 5 0 6 3-3-5 0-3 4 4 3 2 3 4 5 4M946 381l5 2 5 0-2 3 0 4 6 4 5 3 1 5 0 3-2 2-2-3-3-3-3 2-4-1 1-3-4-1-6-2 4 5-5 0 4 4-4 0 0 4 3 3 7 4 6 1 5 3 4 4-6-2 2-2M1018 381l5 1 3-1M871 382l-2 2 2 4 3-2M1023 382l2 5 2 5-3 3 5 1M1023 382l5 3 2 5 2-3 4-1M1023 382l-4 3-1 3 0 4-5 0-1 3-1 3-4-4M892 383l-3 2 5 2-2 3-4-1-1 4-3 3 5 2-3 2 4 3-5 0-3-4-5-4-2-4 5 3 2 5-1 5 3 5 1-3 0-3 1-3M906 383l0 3M906 383l4 4 3 4 5 1 0 4-3 2-4 0 2 5-4-2 1 4-4-4-4-2 3-2-5-2 2-3 3 5 4 4-3 0 0 5-1 3-3-3-4-3-3 1M951 383l3 3-5 0M966 383l1 4 2 4-3 1-2 2 1 3-4 1-6-2 5-2 2-3-3-4-1 2-4-3 5 1 5 1 2 4M977 383l5 4 1 3 2 3 0 3 5-1 5 5 0 4 0 3M895 384l4 3 3 5 5 1-2 4 6 1-2 3M937 384l4 3M962 384l2 4-2 3 2 3 5 2 1 5 4-2 4 0-4-5-5-3 0 5M1006 384l4 1 4 3 4 0M1006 384l3 4 5 0-1 4-4-4 1-3M889 385l3 5 0 5-3 3 5 2 4 3 4-1 0 4M1019 385l6 2 3-2 4 2M899 387l5 2 3 4 4 5M915 387l3 5 4 1M924 387l4 3-3 1-5-2-2 3 4 4 3 4 1 5-6-4-2-5M967 387l5 2 2 5 4-1 2 4 5 3-4 1-3-2M967 387l-3 1 5 3 3-2M871 388l1 4 5 3 3-1 2-3 5 2-3-4M871 388l4 3-3 1 2 4 3-1 1 4 4 0M929 388l-1 2 5 2 0 4 4 3 5 2-4 1 4 3-5 2-2 3-3 2 2 4-6-2-1-5 3-1 5 2-2-4M992 388l6 1M992 388l4 3M1041 388l4 1-2 3-2-4M958 389l2 5 4 0M928 390l1 3M976 390l2 3 3-1-5-2M983 390l-2 2-1 5M986 390l-1 3-4-1M986 390l4 5 2-3M933 392l5 4-1 3M938 392l0 4-5 0 1 3M938 392l5 4-1 5-4-5 5 0M887 393l2 5 1 5 4 5 5 4 5 0 4 0 1 3 6 1 4 1 3 3 6-1 0-5-6 1-3 2-3-4-5-4-5-3-4-4 0-3M887 393l5 2M985 393l5 2 0 5 0 4 5 0 4-1 1-3-2-5 5 3 4 1 4-1 3 3 4 3-5 1-7-2-2 2 3 5 2 6 0 5-5-3-1-4 6 2 5 2M960 394l1 4 5 4 4-1 1 5 5-2 5 0-3-2M1040 394l2 5 4 0M1040 394l-2 2 4 3 5 4 3-2 1 4 2 4 1 4 2 4-4-3-2-3 4 2-2 1-5-1 5 5 1 5-1 3 2 3 2-2 3-2-1-4-5 2 6 2 2 4-5-2 2 4-3 2-1-4-4 3 0 4-1 2-3-4 4 2 3 3-4-1 3 5 5-1-4-3-1 4-4-1 1-4-5 0-2 3 6 1 3 5-5 1 0-3-4 0 2 5 3 4-6-1 4 4-3 0-5 1 1-4 3-1-2-6-6-3 2 6 6 3 3-3 2-2M951 395l2 4 2-3M990 395l5 1 3-1M1024 395l0 4-2 3M874 396l1 4 2 4 4 0 4-1 4 5-5 1 4 4 4 0 3 4 4 0 0-5-3 2-1 3-5 0-2-4-3 1 1 6-3 0 2 4 4 1-3 3 4 1-1-4M874 396l4 3 3 5 4 2 4 2 3 5 2-2 0-3-5 0 1-5M995 396l5 4 4 5-5-2M1038 396l-1 4-1 4 3 4 5 0-2 3 5 2-1 3-4 1 6 3 0 3 0 4 4-1M905 397l1 4-4 1-5-3M1019 397l-4 1-1 3-1 4 0 5 0 4-4 2 5 5-2 4-4 3-2-5 3-2M1019 397l5 2 4 1-1 3 3 5 1-4 4 4 0 4-4 1-1-5 5 4 4 0 0-4 3 3 1 3-1 3-3 4-4-4M915 398l5 3 2 5 0 4 5-1-5-3-4 0-4 1-3 2-6 0 3 3 3-3 1 4-3 2-1 4 5 4 1-4-5-4M961 398l-2 3 4 1-1 2M961 398l2 4 3 3 5 1-2 3-5-2M1003 398l-3 2M1011 398l-1 3M1011 398l4 0M878 399l-3 1 6 4-3 4-1-4M953 399l6 2M953 399l3 4M1024 399l3 4-1 3 4 2 5 0 1-4 4 0 4 4M1042 399l-1 3-4-2 5-1M925 400l4 4M925 400l7 2M925 400l-5 1M985 400l5 0 5 4 5 4 4-3 4 2-2-4M985 400l0 4 3 3 5 2-4 3 6 1M1037 400l3 4 4 0-3-2-1 2-1 4-4 0 4 4 3-1M942 401l0 4 3 3M981 401l0 3 3 4 5 4-1-5M981 401l4 3 5 0M963 402l3 0 5 4 5 2-2 2 5 1 3 3-5 0-5-1 1 3-1 3-3 1 2 3-5-4 2-3-4-5-5-1M976 404l4 4-1 3 5 0 5 1 3 6 3 4-3 0 0-4 3-2-6-4-3 4-4 2-5 1-5 0 5 4 4-1-4-3 0 4 0 4-5 0-1-4 1-4-4-3 5 0 4 3 0-5-4 2-4-3-5-2M981 404l4 0-1 4-4 0 4 3 2 5 6 2-4 2-6-2M981 404l-1 4-4 0M1013 405l-5 2-1 3M918 406l-1 4-3-3M918 406l4 4 0 5-5-5-1 3-1 3-1 3-6 0 0 3 5 1 5-1 0 3-5-2 3 4-5 1-1 3-2 4-3-4-5-1 1 5-5-2-2-4 6 1-4 3 3 5 4 5-6-2-3-4 5 1 2-3 4 3 3-3 5-1 1 4 3-2 4-1 3-3 5 2 1 4 3-2-4-2-1-5-4 3-3-4-3-3 5 0 5-1 5 4 6 4 4 5 5 5-5-1 4 4 0 3-4-4 0-3-5-4 5 0 2-3 4 1 3-2 5 1 5 1 5 1 4 4 4 4 4 0 0 3-4-3 0 5 4-2 4-1-4-2 2-3 2-2-6-3-5 0 4 4 3 4M971 406l3 4 3 4M1026 406l0 4 1 4-4-3-1-4 4 3 5 3 0 4-4 1 1 5 0 4-5-3-4-3-5 0 4 5-6-1 1 5 3-1 2-3 1-5 4-1 0 4 5-1 5-2 5 4-6 1 1-5-2-4M937 407l3 4 2-2M1008 407l5 3 4 3M878 408l6 1-4 3 5 2-1-5M878 408l2 4 2 4 3-2 5 3M889 408l-1 5M889 408l5 3 5 1M1000 408l4 4-1 2M1030 408l-4 2-3 1M969 409l0 4 3 0M935 410l2 4 5 1-3 3 6 2 4 4 1 4 4-3 1 5 2 4-3 4-2 4M935 410l5 1 2 4 3-3-5-1-3 3-3 2 5 2-3 2 2 4-5-1-5 1-6-4 0-5-6-2-4 0-4-1M950 410l4 3 2-2M894 411l2 3M945 412l2 5 5-1-1 5 6 3 1 4 6 3 3 5 2-3-5-2-2 4-3-4-1-3-3 2-3 3-2-5-4-3 3-1M1004 412l5 4-5 2-5-3 0 3 3 4-3 2-4-2 2-2 5 2 2-4-5 0-4-2 2 4-5-2M1039 412l4 2 4-1M912 413l3 3 3 3 1-2M954 413l-2 3M954 413l4 4-2 3-5 1-6-1-4 2 1 4 5 4-5 0M969 413l-1 3M928 414l4 5 1 4 0 5 5-1 4-1 4-1-5-3-5-2-3 3 5 4 0-3M982 414l4 2 2 4-2 4 5 1 4 4-5-1-4 0 2 4 5 4 3 5-4 0-2 4-4-2-3 3 3 3 1 3 4 3-3 1 3 3 5 3-2 5-3-1-3 0-4-4 2-3 4 4 1 3 1 4-6-1 0 5-4-3-5-3 1 4-1 3-4-4-5-1-3 1-2 3 4 5 1-3-5-2-3-4 5 1 3 5 3-1 2-4-4-5-1 4 3 5 6 4 0 5 1 6 4 3 2-3-6 0-5-6-6-5 1 5 5 0 4 0 4 3-3 3 3 7 0 5 4 0 5 1 5 1 4 3 4 5 4-1 2 4-6-3-5-2 1-3-1-4-3 1-1-4-4 3 0-5 4 2 4 3 5 2-4 2 5 2-1 3-3 3-5 1-5 0-4 0-5 1 2 5 3 4 5 1 4 3 1-2-5-1 2-3 4 1 5-1 3 2 1-3 5 2 2 3-4-1 2-2 3-2 4 1 3 4 3 3 5-1 4 4 5 3 3 1-1-3-2 2 5 4-2-3 3-1-1 4-5 2-5-1-4-2-1-5 1-5 1-4-6 0 0 5 0 3 4 1-4-4-4 0 4 3-3 2 3 5 5-1 4-1 0 3-3 2 2 5-4 1 3 3 0 4 5 3-1-3-4 0-6-1-5-2 2 5-3 2 3 5 5 2 5 6 5 6 9 5 3-5-2-6 5-2-7-4 2 6-6-3 4-3-7-2-2-6-3 3-2-6-4-5 1-2-5-2-3-5-5-3-4-5-6-3 0-4 4-1-3-4-4 1-1-5-6-3-1-5-5 0 1 5 6 4-1-4-3-2-2 2 0 4-4-4-5-4 0 5-3 4 5 1-1 3 4 1-1 4-4 1-3 2 0 4 1 5 6 2 5 0 1-4 6-1 3 5-2 4 3 3 0 3-2 2-5-1-5 0-3-3 0-3-1-5 2-4 3 4 5 0 3 4-4-1-4-3 0 4-5-4-3-4-3 2-5 1 1 4 0 4 3 5 5 2-2 3-3-5-6-2-3 3-5-4-5 0 1 5 2 5-6 1 1-5 5 4 3-2-5-3-5-3 4-2-2-4 4 1-2 3-5-3 1 5 2 4 3-1 5-1 4 0-2-5-2-5 5 3 5 1-3 3-2-4-3 2-3 1-3-3-2-4 6 1 2-4 2-2 5 2 1-3 4 2 0 4-5-3-3 1 4 3 4 3-4 1 4 3-1 2-2 4-7-3 1 5 6 5 0 7 2 8 10 4 11 6 4 14-5 9 5 17 17 0-10-12-12-5-8-12 13 3 7-5 0-9-11 0-7-12-4 6-4-7-8-5-7-7-7-4 0 6 1 7 6 11 9-5 6-3 8 1 7-5 1-6-5 1 4 5 7 4 5 6-1 7 9 0 9-2-6-8-1-5-5-5-5 0-5-4 5-1 0 5 3 6 8 4 7-2-1 10 11 8 1 11-10 0-9 6-18-9-10-10-5-10-5 6-5-10-7-4 5-4 8-1-8-6 7-1 7 6 9 3 4 8 3-4 8-1 7-1 2-5-1-6-5 0 2-5-4-3-5 0 1-4 4 4 0-4 5 0-2 3 1 4-5 0 1-3 3-1 4 2 3-3 1 4-4-1 2 4-5-2M1043 414l3 2 6 2 4-1 2 4-6-3-4 2 5 3M1052 414l0 4M922 415l6 4 0 5 0 5 5-1 0 4-4 2-3 2-5-1 1 4-5-3 1-3-3-1-5-1-5 0-2-5-3 4-3-5-3 4-1-5-2-2M942 415l3 5 1 5 1 5 2 5 0 3-4-4 2-4 5 3 2 5 6 1 4 4 2-4 4 6 5-1 1-4-5 0-1 5-3 1 0 4 3 0-3-4-3-3 6 2 5 4 5 2-1-4 4 3 0-4 5 2-2-5-5-2 2 5M942 415l5 2 4 4M1022 415l1 5 5 3 4 3 0 4 4-1 1 4-1 3-3-1-3 3M882 416l4 4M882 416l1 4M934 416l-2 3 4 1-2-4M1046 416l2 4-4 1-1 3 5 3 6 2 4 2 3-2 1 4-2 3-5-3-5-1-4 2-5 0-4-1-4 2-5-2 4-3-4-3-4 2 4 4M947 417l-2 3M958 417l3 5-5-2M999 418l-2 2 2 4 1 4 1 4-4 2 1 4 3-2 4 3 0 3-1 3 5 0 3-1-4-2 1-3-3-4-1 4 3 3 1 3 5 4 6 1-4-4M1004 418l2 5 6 2M914 419l4 3 4-2 1 5-5-3 0-3-4 0M918 419l4 1M928 419l5 4M928 419l4 0M988 420l4 2-1 3-3-5M1033 421l6 0-1 4 2 5-4-1M1039 421l4 3 1 4-6-3M1039 421l5 0M908 422l-1 3-3-2M908 422l3 3 2-2M961 422l3 5-3-1M981 422l0 3 5-1M992 422l4 3-1 4M995 422l1 3 3-1 4 2-1-4 4 1-3 3 5 2 5 2 4 4-3 3 1 4M971 423l-4 1 2 5 5 2 3 5 5-1 2-2-1-4-6-2-6-4 6 0 4 2 5 3M893 424l4 1 6 1 4-1 4 3 4 4 2 4-4-2-3-3-3-3-2 3-2 3-2 1M967 424l-3 3 0 4 5-2 3 4M1023 424l-5 2 2 5-4-2M1023 424l1 5 0 4-4-2-3 3 4 4-2 2-5-3-3 0-5-2-1-5-2-4-3 2-4-3-5 0-1 3-2 4-4 1 1 4 2 3 3 5 5 1-2 3 4 3-4 0-2 3 0 4-1 4 4 4 3 4-5-1 2-3 6 0 3-3-3-4-4 2 0-5-5-2M907 425l4 0 0 3-4 0-4-2M907 425l0 3M911 425l5 2 2-2M923 425l-2 3-2 3 2 4-3-2 1-2 5 1 2 4 4 2 2 5 5 5-1 4 3 3 1-2-4-1 0 4 3-1 4 1-3-3-3-5 0-4 2-2 4-1 0-4 6 1 5 0-5-3M923 425l5 4-7-1-5-1 3 4-4 1-2 2M981 425l2 4 5 3M981 425l-4 2M1018 426l6 3-4 2 2 4 4 0M916 427l-1 5M964 427l5 2 3-2M1048 427l2 5 4 4 1-3M1048 427l-4 1 2 6-2 4-3-4-1-4 6 4M950 428l-3 2M950 428l5 2 4 1M1044 428l6 4M1044 428l-4 2-3 3-5-3 1 5 1 4 4 0 4 2 4 4 2-3-4-4-4-1-4-1M890 429l2 4-4-1 2-3 4 0M928 429l5 3 6 0M969 429l0 4M900 430l3 4 5 1M1013 430l-3 3 1 4M1058 431l2 5-3 3 0 3 4-1-4-2-4 0 1-3-4 0M1058 431l4 2 2 4-4-1 1 5 4 0-5-5-6 0 3 3M933 432l5 5-5-1 0-4M1001 432l0 4 1 4 2 5-4 0 0 4M1001 432l5 3-5 1-4-2-4 2M1010 433l4 4M1010 433l7 1 5 1 2-2M1010 433l-4 2M1037 433l3 4 2 4M903 434l2 4-6 0-2 3-6-2-1-4 4 2-3 2 2 4 4 2 3 4-6-2 2 4 5 2-3 2-2-4 4-2 5-1 1 4-5 1 5 3-3 2 4 1 4 2 5 2 3-2-2-4-6-2 3 4-3 2 2 5-3 2-3 2-5-3 3-1 2 4 2 4 2 4 2 4-4 1 4 3 0-4-6-3 2 4 1 4 2 4 2 4 1 4 5 4-3 0 1 4 2-4 3 5 4 2 0 4 5 3 5 4 0 5-2 3 5 3-3-6-5-4 0-5 5-1 2-4-4 0 0-4 4 4 5 0 3 4 4 5-4 3 5 3-1-6 5 4-4 2 3 5-3 0 3 3 4 4-4 1-5 0-5-3-2 3-3 2-5-2-2 3 1 4 4 1 3 3 5 2-1 5 3 0 4-1-6-4-4-5-1 3 0 4 5-2 2 5 1 4 7 2 6 5 7-2 7 0 0-7 7 6 7 1 0 5 2 8-8-7 6-1 5-2-5-3-3-4 4-2 4 1 5 2 0 5 6-1 0-6 5 5 5 5 1-6-5-3-2-5 4 3-2 2-6-1 4-4-5-5 2-3 4 4 4 0 3 3M1041 434l-1 3-2 2M982 435l3 2M1022 435l-1 3 3 5 1-4 3 3M1022 435l3 4-4-1M917 436l1 4-4-2 2 5-6-3-2 3-5 0 6 3 4-1 3-2 3 4 4 2-3 2 6 2-3 2-2 2-4 0 5 3 4 0 3-3 5 2 3 4-1 3-4-4 2-3 2-3 6 3-3-4M926 436l-4 3 1 5 5 6-5-1 0-5-4 3-6-2-5-2-3-5M926 436l1 5 3-3 5 2 3-3M933 436l2 4 4 2 3 5-5 1 6 4-3 1M977 436l4 5-5-1 1-4M1064 437l1 4 2 4 2 4-5 0-2 3-5-1-3 2 2 4 4-2 2-3-2-3-3 2 3 4-6-2-3-6 6 4-1-5 1-4 3 3 4 4-4 0 0-4 1-4 3 4 0 4 3 4-5-1 5 5 5 0-2-4-1-4-2 4 3 0M954 438l3 6 5 2 5 0M954 438l5 4 5 1-2 3-3 2-3 2-2-4-3 1-3-5M922 439l-4 1 5 4-7-1 2-3M922 439l5 2-4 3 6 1-1 5 5 2 3 0-3-3 4-1M935 440l2 4 5 3 1-3M935 440l-3 3 5 1M1002 440l-2 2-4-1 4 4-5 1M1002 440l3 2 4 3-1 3 6 1-4 3-5-3 2 4 3-1-2-4-3 1-2 4-6-1-1 5 4 3 5 0 3 4 1 3 4 2-2 3 5 4-1 4-3-4 4 0 5-3-5-1-3-3M897 441l-4 2 1 4 3-2 0-4 4 4 2-2M927 441l5 2 1 6-5 1 3 5 5 1-3-4 0-3-4-4 3-2M927 441l2 4M1065 441l-1 4 3 0M959 442l3 4 5 4 3 4 2 6 4-2 4 3M1000 442l0 3 5 4M1005 442l3 0M908 443l1 3-4 2-4-3-1 4M1024 443l1 5 4 3 1 3 3 0-4-3 6-1 4-3 5 3 5 1 2-4 1-4 4 3-5 1-5-2M1020 444l0 6 6 2-3 3M1020 444l5 4-5 2M1033 444l-4 2 0 5-3 1 4 2M897 445l4 0M947 445l4 2 5 3 2 6 5 0 1 5 5 2-2-5-4-2-3-4-2 4 2 6-4-3-4 1-5-1 3 4-3 3-5 2 4 5 3 5-4-2-2 2-4 1 4 4 0 2 1 4 5 3 3 4-4 0 1-4-5 0 0 4-5-3 0 3 5 0 4 4 5 4 1 4-5-3 4-1 5-1 4 3 3 5 2-4-5-1-3 2 6 3 5 2 4-1 4 1 3 4 6 5 4 5 0 3 4 0 5 2 5 0 0 3 6 0-2 5 3 5-5-2 3 4 2-2 3-2 0-3 3-2-7-3 1-4 1-3 3-1-5-2-1-5 4-2 4-2-2-4-3-3-5-1 3-3-2-4-5-3-6 0 0 5 4-2 2-3-5-4 1-4-4-3-4-3-1-4 5-1 3-2 2 4-5-2 1 4-5 1-6-3 5-1 6 3-1 4-1 3 5 0 0-3-4 0-5 0 1-3M970 445l0 5 5-1 3 4 2-2 3 3 5 2-1-4 1-4-2 1-3 1-3 1M990 445l-2 3 5 4 0-3-5-1M990 445l3 4M1004 445l4 3M1060 445l4 0 5 4M1060 445l-4 1 4 3M962 446l2 6 3 6 3-4 6 4 1 6 0 4 4 0 2-3 5 1-2 3-5-1-4-4M1029 446l6 4-2 4 5 0-3-4M1029 446l-4 2 1 4 1 4 5 3 3 4 2-2 5 1 2 4 0 4 5-1 5 4 5-1 0-5-5 1-3-5-4-2-5-4-1-4M942 447l5 5-4 0 0 4 4 3-5 0 1-3 4 0 0 3-2 3 5 1 5 2-3 2 4 2-2 2-3 4 3 4 5 4-2 3 2 5 5 1 5 0 3 4 4 3 5 3 2 3 2-3 1-3 4 4-2 4-3-5-4-5 1-4 4 2 4 3 2-2 2 4 4-2-3-4 0-4 4 4-1 4-6-2-6-1-5 2-5 2-6 0-6 0 4 4 3 3-4 1 1-4 2-4 2-3 3-2 3-4-6-3 1-3-1-4-5-1-4 2-4 2-6 0-2 3-3-3-5-5-2-5-6-3-5 2-5-4-5-3-1-4-5-2-4-1 1 3-5 2-5 0 4 3 5 2 3 4-4 2-3 1 5 3-4 1-1-4-2-4 5 3 6 3-4 1 5 3-3 1 5 4-2 4-4 1 4 2-2 2 4 2 2 6 1-4-3-2-3 2 2 4M942 447l1 5 4 4 5 4 5 2 3 4 0 4-2 3 5 1-2 3 6 2M942 447l5 1 0 4 5 0 4-2 4 2-1-4 5 4-1 4M951 447l-4 1 5 4-1-5M923 449l3 4 2-3M975 449l0 5 3-1 2 4-4 1-1-4 5 3 3-3-5-1M967 450l-3 2-4 0M970 450l0 4-6-2M970 450l5 4-5 0M983 450l0 4 4-2 6 0 3 5-5 2-5 0 2-3M983 450l4 2M906 452l0 4 1 3 3-1-4-2 5-1-5-3M933 452l-2 3 3 4 4 1-1 3 5 0 5 3-2-4-3-3 0 4 0 5-4 1-2-3-5-1-5-1-1 4 0 4 0 3 0 5 5-2 3-1 6 2-4 2-5-3 1 4-1 3 4 4 5 4 5-1 0-3-5 0 0 4-6 0-6-1-3-4-6-2-5 0-3 1 6 3-3-4M997 452l4 5 5 0 4 2-5 1 5 2 3 4 2-3-5-1-2 2M917 453l4 4 5 3M926 453l5 2-2 2-3-4M1003 453l4 0M1003 453l-2 4 4 3M1067 453l5 4 1 4-2 4-1 3-3-3 4 0 2 3-3 0-1 5 4 5 0 4 5-1 3-1 2 4 1 4 2 4 1 4-3 3-3-5 5-2-6-3 4-1-5-3 4-1-5-3-5-3 0-3 4 2 4 3-1-3-3 0-4 1-5 0 1-5 4 2 2-3-5-4-6-1 3-2-3-2-4 0-5-3-5-1-5-2M1067 453l0 4 6 4 2 4-2 3 3 1-1-4-4 0-3-3-1 3M983 454l3 5-6-2M1038 454l4 3 0 5 6 3 1 4 0 4 0 4 5 2 3 2-4 1-4-5-4-3 1 6 0 5-1 3 4 1 6 1-1 3-5-4 1 5 4-1-1 4 0 4 1 4 5 1 3 4 2 5 4-2-1-4 3-1-4-3 1 4-5 1 6 3 2 6-6-4-4-3-3-1 3 5 2 5 5 4 3 6-2 4 1 4 3-1-4-3-6-3-2-5-5-3 0 3 5 0-1-4 3-2 4-1-2-5-4 1 0-4 2-2-5-1 0 2-5-3-4 1-5-2-3-5-2-3-4 0-3-5-6-3 1 5-5 0M911 455l-1 3M1060 455l0 5 4 3 0-4-4-4 7 2-3 2-4 1-5 0 0 3-4 0-3 2-1-4 3-2 1 4M936 456l2 4 4-1M1027 456l0 3 0 4 4 0 3 5 4-1 2 4 1-3 3 2 5 3 3 3 2 3 3-1-3-5 0-5-6-3-4 1-5-2-1 3M921 457l1 3-3 1 3 3-2 1M996 457l5 0-1 3M1056 457l4 3 0 3-5 0-1 5M1067 457l1 5-4 1 0 4 5 6-6-2-4 1 5 2 5-1 6-1-2-4M907 459l-1 4-1 3M956 459l1 3 3 0 0 4 5 5 6 4 1 5 5 4 4-1 5-2-5-2-4 0 4 4 0-4-4-4 0 4-5 1-4-4M1010 459l5 4 3 4-5-1M1010 459l0 3M1050 459l5 4 4 4 1-4 4 4-1 4-4-4 5 0M1064 459l4 3 5-1M922 460l4 4-4 0 3 4M922 460l0 4M938 460l4 3 3-1M952 460l3 5 5 5-4-1 2 4-4-2 2 5-5-1-2 3-1 5 5 0 4 3 4 2-2-5 5 2 1 4 4 3 0-4-4 1-1 3 3 4-3 3-5 1-1-5 6 4-2-4 2-3-3-4-2 3-1 4-5-1-4-2 4-2-2-4 4 1 2-1M964 461l5 5 0-3 3 4 1-3M964 461l-4 1 4 4 1 5M964 461l0 5 4 4M1019 461l1 4 3 3-2 5 6 3-1 3 5 0 2 4 4-2 4 4-4 1-4-3-4-2-3-2-2 4M1019 461l4 3 0 4 3 4 1-4 4 3-1 4 4 1 5 2-2 3M1037 461l2 3 2 4M957 462l-2 3 1 4M996 462l4 5-3 4 5 1 3 4 2 5-1 3 4 4 6 5 5-1 5 4 3 4M1042 462l-3 2-4-1-1 5-4-1-3-4-4 1-3 1-5-2M906 463l4 5 6 2 3-2M906 463l7 3 3 4-3 2 2 5 4-2 2-3 4 0 5 0 3 5-4-2M990 463l-2 3 4 4 3 4 1 5-5-3 0 4-4-3-1 4-1 5-4 1 0-4 4 3 5 5 5-1-4-3-5-6-4-5-4-4M1003 464l2 6 4-3 2 5-3 2-3 2-5-2-1 3 3 1 5 3-6 0-4 2 3 4 3-2-6-2M955 465l5 1 4 0 5 0 3 1 1 4M1020 465l-2 2 3 6-5-3M936 466l-1 4 3-1 3 4 1-5-6-2M972 467l5 1M1000 467l2 5-2 2-3-3-2 3 4 3M1000 467l5 3-3 2 3 1 0 3 5 2 2-2-1-4-6-2 0 3 3 1 2 4-3 3 4 4 5 3 0-3 4-2 0-4-5 1 5 3 0 5-4-3-1-5-5-2 2 4-5-1M1030 467l1 4 3 5 3-3 2 5 7 2 5 5 4 5 5-1 5-2 1 5 3 3-3 1-4 1 5 4-1-5-3-2-1 3-5-1-3-3 4 0-3-3 0-4-4-1-2 4-3-4-4-3-1 3 4 3-3 1-5-3-3 1-1-4-4 2 0-4 2-2M981 468l1 3 0 5-1 3M1034 468l6 3 4-1 1 4 4-1 5 0-2 3M1034 468l-3 3-5 1 1 4M1034 468l3 5 3-2 5 3-4 1 5 5 7 2 1-3M986 469l4 4 2-3M1076 469l2 4-3-1 2 5 1 4 1 4-6-3 1 4-5 1 4 3 4 0 4 4 6 2 2 4-5-1-5-1 2-4-5-1 1-3-3-4-1 4-3 1-1 4 5 2-4-6 6 2 3 5-5-1 2-4-3-3M1076 469l-1 3 5 5-2-4M916 470l5 2M916 470l3 5 0 4-4-2 1 4 2 5 4 6 3 6-4 1 4 3-5 1 6 3-3 2-5-1 2 4 2 4 5-1 4-1 4-1 2 4 0 5-5 1-3 2-3-4 6 2 0 4-3-2-3 3 2 4 1 4 2 4 4 1-2-5-1-4 3-2 1 4 4-1 5 0 0 5-5-5 0 4 3 4 4 2 3-2 3 5 4 4-3 1-5-3 1 5-4 1 1-4 2-2 4-2 2-5 0-5 0-3 4 2 0 5 5 0 5 2-1-5-3-5 0-2-1-4 0-4-3-4-1 3 4 5-3 3-5-3 3-1 5 1 5 2 4 3 5 3-4 1 4 3-3 3-3-4 6 1 5-1-5-3-1-4-4 1 1 4-5-2 4-2 0-4-2-5-2-2-2-3-2-5-2 3-2 3-3-4-4-5-4 1-1-4-1-5 4-1 1 5 6 4-5 0 0 4-1 4-2 1 0 4-5-1 1 4 0 5 5 3 0-5-5 2-2 3-3-3-5-3-5 0 3 3-5-1-1-4-4-1 1 4 4 1 2-2M935 470l2 5 2 4 1 4 3 2-4 1 5 3 3-2 2 5M1005 470l3 4 4 2M1031 471l6 2 4 2-1-4M1063 471l1 3 4 4 5 4-5 1-6-1-3 3 6 2M930 472l7 3 6 3 0 5 5 0-1 4 4-1M1011 472l5 0M1026 472l4 3M1026 472l-5 1-1 6 6 0 3 6 0 4 5 2 5 3 5 3 4-1 5 5-5 1 6 3-2 3 5 1-3-4 3-2-4-2 5-1 4-3 1 5 4-1-1 4-4 0 5 4 6 3-3-4 1-3 3 0 4 2 5 2 2 5-5-3 3-2 2-2 4 1 2-4-5-1 3 5 5 4-2-4-3 0-1 3-5-2-2-3 4 1 3 4-3 3 6 3-2 3 5 2 1 3 3-1 2 4-5-3-5-2-1-3-4-1 5 4 4-1 3-2-6-3 3 5 4 2-1-4-2-4-1-4-3 5 4-1M1059 472l3 4-1 2M941 473l-4 2-4 2 2 4 4 5 0 3 5 3 4 4-4 0-1 5-4-5-6-3 1-4 5 0-4-4-5 0-5-5 6 2 4-1 5 2 3 0 4 4-4-2M958 473l3 4 2 4 5 3 1 4 3-1-4-3-4 1-1-4-4-2 0 4M958 473l-2 3-2 3-1 4 2 4 4 4 3 4-4 0-5-5 6 1M990 473l-4 1-4 2 5 1-1-3 5 2 4-2 5 0 2 4 3-2M990 473l5 1M990 473l1 3-4 1M1021 473l5 6M1054 473l4 2-1 3M1064 474l-2 2-4-1M919 475l6 5-6-1-3 2 5 2-3 3M971 475l6 0 5 1M1041 475l-2 3 3 4M956 476l3 3-5 0-5-1-6 0M956 476l5 1-2 2M1062 476l2 3 4 4 6 3 6 3 1 5M1062 476l6 2-4 1M949 478l4 5M1002 478l-1 3 5 3-3 1-2-4M1068 478l0 5M919 479l2 4 3 5-2 4-6-2 0 3 2 4 2-2 5 3 0 4 5 3 5 3 2-3 2-3-1-3 1-3-4 1-2-4-4 3-2-4-5 0 7 4-4 2 5 3 0 4 1 5 4 2M925 480l1 5 4 0-1 4 5 0 1-4 0-4M925 480l-4 3 5 2-2 3 5 1 4 4M1015 480l-3 2-1 3-5-1 0 3-3-2 2 5 5 2M1057 481l2 4 1 4 3 5 3-2 0 4 5 4-2-5M931 482l4 3 4 1 1-3M1012 482l4 3-5 0-1 3-4-1-1 3-5 0 4 4 0 4M1053 482l-2 3-5 0-5 0 1 4-4 1-4-3-5-2 2 3-2 1 2 5 5 2 2 3 5 1-3 2 6 3 2 4 6 4 3-2M1053 482l6 3-4 1 5 3 6 3 4-1M1053 482l2 4M926 485l3 4-2 3M964 485l5 3 4 2 5 0M964 485l-3 3 4 1M1079 485l-5 1M1079 485l1 4-3 1M985 486l6 1-1 4-4 4 0 4 4-1M985 486l-1 4 2 5M947 487l6 3 0 4-1 2 0 3 6 4 1-3-4-2-3-2M955 487l-2 3M972 487l1 3-4 2 6 2 1 5-3 4-2 3 4 2-1 4-2-3-5-2 3 6 2 5-3 1-3 0 5 2 1-3 6 3 4 4-3 1 2 5 2 5 4 4-5 0-4-3M981 487l3 3 6 1 5 3-3 2-2-5M1000 487l5 3 5-2M1034 487l0 4 2 5 4 1-1-3 4-1 5 3 5 1-3-3-2 2-2-5-1-3M1034 487l-3 1 3 3 4-1 5 3-1-4 4 2 3-2M1060 489l-2 4 4 4M916 490l3 3 3-1-2 3-4-2 3 0 1 2 1 4M973 490l2 4 6 3 5 2M1005 490l3 4 1 3 6 5 6-1-3-3-2-5M1005 490l-1 4 4 0M1034 491l-3 3-5 2M1046 491l4 3M1046 491l-3 2 1 4 4 5 0-6M969 492l-2 4 5 0M1058 493l5 1M1058 493l-1 3-4 1 5 3-1-4M953 494l2 4 3-3M995 494l4 0 5 0 5 3 0 4-3 2-3 2 5 3-1 3-3-2-1-4-1-4 4 2 2 5-4 1M962 495l5 1 3 3 3 4-5 0-5 0 1-4M929 496l1 5 5 0 4 1 2 3-4 0-2-4 3-2-3-2 0 4-6-5 6 1M948 496l0 4-5 1-4 1M948 496l4 3 3-1 3 5 1 5 4 6-5-1-4-1-4-3-1 4-5-1-1 4-4-4 2-4 3 4 2-5 4 2M1040 497l-2 2M1040 497l4 0-1 3 5 2 4 6-6-3-3 2-6-3 2 5-3 2 3 4 2-2-5-2-5-4 0 4 4 4 1-4M1040 497l3 3 3 5 2-3M1074 497l-3 3 3 5 3-3 2-4 3 4 3 5 1-4 3-3 2 4 1 4M1074 497l3 5 1 5 2 4-2 2 0 4-2 3 4 5-5-2 1-3-6-1 5 4 3 4-2 2 3 4 0 4 6 3-1 3-3-2-2-4-2 2-5-1 1 4-3 2-5-2 3-1 2 3 6 3 2 5-4-1-2 3-2 3-4-6 6 3 3 4 5 1 5 4 0-3 2-2 3 0 5 4 1-5-6 1-1 4-2-4-1-3 4 3-1-5 4-1 3 5 4 0 4 3 4 3-5 2-1 6 6 0-5-6 1-5 4-1-2-5-5-3 5-1 0 4-3 1-2-4 2-5 3 4 2-2-2-4-3 2-6 0 4 5-3 2-5-1-3-3-1 4 7 4 2-4 2 4 3-2 1 5-4 1 0-4M998 498l4 3M938 499l5 2 6 4-3 2 3 6 4 3 2 4-4 1M976 499l3 6 2-3M1084 499l2 4-4-1 2-3M959 500l4 3-1 3M1024 500l4 3 3 4-6 1 6 3-1 4-5-1-4 0-3 2 2 5-6-3-5-3 1 5 4 3 2 4 2-3-3-3-1-3-2-5 6 3 4 2-1-4 2-4 4 2-2-4-2 2-3-4-3 2-1 4 5 2-4-6M1024 500l1 4 6 3M1024 500l-3 1 4 3 0 4-5-2-5-4-6-1M1058 500l4 5-3 1-2 3 3 3M1058 500l5 2-1 3 0 5M1058 500l-1 3 2 3M1071 500l-4 1 4 4-5 0-3-3M1071 500l0 5 4 4-5-1M1071 500l6 2 4 4-3 1-3 2-1-4M930 501l3 3 2 4-4 2-5-4 4-1 3-1 4 1 4 3-6 0M930 501l-5 1 1 4 1 4 4 3 1 4-4 1-1-4-4-3 0-3M935 501l-2 3M943 501l3 6-5 1 0-3 5 2M943 501l-2 4M1021 501l0 3-6-2M1077 502l5 0-1 4M958 503l5 0 4 4M973 503l2 5 6 4-3 1-3-5-3 1-1-3M973 503l6 2 2 7 3-3 5 2-1-4 6 4 4-1 2 5 4 3-3 1 5 4-2-5 6 2-4 3M990 503l4 4 5 0M1028 503l-3 1-4 0 4 4M1057 503l5 2M995 504l-1 3 4 3M1021 504l-1 2M979 505l-4 3M979 505l4 0 5 2-4 2-1-4M979 505l5 4 2 4 4 3M918 507l5 4 4-1 4 0 0 3 6 3 6 0 3 4 1-4-4 0-1 4 5 4-5 1-5 1M988 507l6 0 0 4 6 4 1 4-5 1 1 5-1 3-3-4 3-4 6 4 3 4 0-2 4 1 3 4 4-1-3-2M1035 507l4 2 2 4 2 4-4-2 1 4-2 3-4 0 5 4 0 5 4 3-3 1-1-4 5-1 4-1 1-3 3-1 3-1 4-1-4-2 0 3-4-3-2-4-2 1 0 4 2 4 4 4-5-1 2 4 2 4-3 3-6 1 5 4 1-5 3 4-4 1-4 1-6-3 0-6-5 2 0-5-5 1 5 4 5 4-3 3-2-4M1043 507l2 4 3-2 1 5 0 3 4 0-2 4 4 0 3-3 4 3 1 4-3 2-2 4-3-4-3-2-1-4-4-3-1-3-5-2 4-2 1 4 3 2M1043 507l-4 2 6 2 4 3 4 3 2 4M959 508l-1 5-1 3-4 0M1008 508l4 5 1-4M1052 508l2 5 6 3 6 4 1 5-2 4 5 2 5 1 1-3 5 2 5 2-2 3-5-3 2-2 2-2 3 4 4 4 5 2 4-2 4-1-6-3 2 4 6 3-2-4-1-4-2-4-5 1 0-4M972 509l-2 4-3 3 5 2 3 5-4-2-3 2-4 2M1075 509l3 4 4 2 3-1 2 3 2 3M1075 509l5 2 2 4 3 4-7-2 4-2 5 2-2 2-2 3-3 3 3 4-5-2 2-2 4 1 4 1 4 4 5 2 5-1-7-3-7-2 2-4-7-1 5 5 0 3-2 3 6 1 3 5 3 3 5 4 5 2 1 4-3-2M1075 509l-2 3 5 1M920 511l3 0-1 4 1 4 2 4 1-3-3-1 5-1-2 2M989 511l-3 2 0 3 1 6-1 4 5 4-1 5 7 4-2 5 5 0 3 4-5 0-2 3-2 4-4-3-1 3 4 4 1-4 3 4-2 3-2-3-2 2 3 4 1-3M989 511l3 3 2-3M1007 511l5 2-3 2-4 1-2-4M1088 511l6 1M1088 511l3 6-4 0M954 512l-5 1 2 4 4 3 1 5 2 5-3 2M954 512l3 4 4 1 5 2-2 2-4-1-1 4 2 4 4 1 4 3-4-1-4-3 1 5 3-2M974 512l2 4 5 1M981 512l5 1M1016 512l-4 1M1027 512l3 3 5 4-1 3-4 0 0 4 4-1 0-3-4-3 5 0 3 3 1 4-5-1-4-3-4-4-1 4-1 4 5 4 6 2-2 2M1073 512l-5 1 5 3 3 4 7 2-5-5-5-5 0 4-3 3-4 1 6 4 4 5-4-1-2 3 4 4-6 0-4 3 1 4-4-2-5-1-4-2-5-2-4-1 1 3 5 3-2-5 3-2 4 2-2 2 2 5-5-2M949 513l-2 3 4 1M970 513l6 3 2 5 1 5 6 4-3-5M978 513l-2 3-4 2M1054 513l-1 4 5 1 1 5 4 2 4 0 5 3 3 4 4 1M1054 513l4 5 2-2M1054 513l-5 1-3 1-3 2 4 1M963 514l4 2-1 3 2 4-4-2M963 514l3 5M1021 514l5 4-1-4 3 3-2 1-4 0 3 4 5 4 5 6 4-1-4-3 4-2 5 4-1 4M922 515l6 3 4 4M1000 515l5 1-1 2M1030 515l5 0 4 0M1030 515l-2 2 2 2 0 3-5 0-5-1 4 5-3 2-5-1 0 3 0 4-5 1-3-4-3 1-4-4-4-3M1030 515l0 4-4-1M1035 515l0 4 5 0-5-4M937 516l5 4-5 1 5 4 5 4-5 0-2 3M957 516l3 4-5 0 4 4M957 516l-2 4M1005 516l5 4 5 1-1 2M1073 516l5 1M1043 517l-3 2 7 3 5 3 1 5 2-3M1043 517l4 5 4-1M1022 518l-2 3-2 3 6 2M1040 519l4 6 4 4M1070 519l2 5 3-1M942 520l4 0M942 520l0 5 0 4M990 520l3 4-6-2-4 0M990 520l6 0M990 520l-3 2M978 521l-3 2 4 3-2 3 4 2 5 3-3 2-1 4M1015 521l5 0M1038 522l6 3-5 1M1047 522l-3 3 5 1M1083 522l1 4-1 3 5 1 4 1 0 3 7 3 1 3-5-1-2 2-3-4-1 3-4 0-4 1-4-2-4 3-4-3-1 2 5 1 3 5-2 4 3 4 1-3 4 3 5 3M968 523l1 4-4 2M968 523l5 3 4 3M975 523l-2 3 6 0M1090 523l5 6-3 2M1002 524l-1 4-5 0 4 4 5 3-3 3-5 1 5 3-2 2 5 2 2 4-4-2-2 3 4 2 6 1 1-3-5-1 3-3-5-1-2 2 2 5-4 1 3 3-5-1-3-5 5 0M1072 524l-5 1M1072 524l6 3 3 4 3 5-5 1-4-5-1 3 5 2M1072 524l0 4M1034 525l1 3-5-2M1044 525l0 5 6 3 3-3 1 5 2 4-2 3-2 2 4 2 1 4 2 4 2 4 5 4 4 5 5 5-6 1 3 7 3 7 9 5 3-6 5-1-2-6 8 2-6 4-7-5 5-1 1-5 0-4 4-2 7 3 0 6-4 4 3 10-1 8 7 2 8 1-2 7 1 11 5 16 13 0-5-11-8 11-12-1-14 0-3-8 17 8 3-7 4-8 13 5-4-13-8-10 8-2-4-9-8-3-2 6 6 8 0-7 8 5 0 12-10-3-6-8 2-7-8-3-9-6 1 7 7 7-7 2 10 8-3-10M1063 525l2 4 3 6M973 526l-4 1 0 5 3 4 2-2M1084 526l4 4 4 4-2 3-6-1 1 4 5 4 4 5-1 3M952 527l6 3 3-2M1009 527l-1 4-3-3-4 0-1 4 2 6 0 4 3 4 2-3-5-1M1016 527l4 4 1-3M1060 527l5 2-3 3-4-1-5-1 5 5 4-3 2 6 5 1M930 528l-2 3 4 0 4 2 4 3 5 1 2 5 2 5-4-3-2-4-5-2 2 4 2 6 5 1 3 3 5 3-3 2 4 7 1 6 6 6 8 2-2 9-2 9 2 8 8-5-10-3-12 4 14 4-8 10 7 17 18 0 17 1 7-12-7-14M930 528l2 3M1035 528l0 4 3 5M947 529l3 6 0 5M1095 529l2 4-5 1M958 530l4 3 6 3 1-4M958 530l1 4-4 1-5 0 2-3M985 530l1 4 4 1-5-5 6 0 5 4-1-4M1016 530l4 1 1 5-3 2 6 3 1-4-1-3M1044 530l3 5-3 2-4-2-5-3M928 531l5 4 3-2 2 5-3 2 2 5 3-3 5 2-3 4-4 0-2 3 5 0M1008 531l4 0 4 3 5 2 4 1 4 3 1 4-6-3-4 2-5 0-6-3 6 0M1020 531l-4 3 2 4 2 5 6 3 6 3-1 4 4 4 4 1-3 2 6 2 3 6 6-2 1 6 3 7-6 1 6 6 7 7 0-8-7-6-8-5-6 2 8 4M1058 531l0 4 3 5 3-2 4 3M945 532l5 3 5 5 4 6-2 3M1000 532l-4 2 1 5M962 533l2 6 4-3 4 0 0 3 2 4M962 533l-3 1 5 5 3 4 3 4-5 0-2-5-4-3 1 4 5 4-2 3 1 3 1 4-6-4M986 534l1 3 0 3 4 0-1-5-3 2-4-1M996 534l-6 1M996 534l6 4 7 2-4-5M929 535l4 0-2 4 2 4 4 2 5 3M933 535l5 3 2-2M950 535l-5 2M1028 535l-3 2M1054 535l4 0-2 4 5 6 4-3 2 5 3-3 1 4 3 3-4-1 2 4 5 1 3 4 5 1 4 2 6 0 4 0 4 3 5 2 0 4 5 4-1-5-4 1-1 6-5-6-6 2-5-3-2-4-4-3 4-1 6 6 0-6 4 4 3 5M1058 535l6 3M1074 535l-2 3M1074 535l3 4 3 5-7-2M968 536l4 3 3 1M1084 536l5 4 4 1 4 5 1-4 2-2 5 0 1 4-4-1 1 3M987 537l4 3 4 4-1 3 2 4 5 3M1002 538l5 5 2-3M964 539l-1 3 4 1 4 1-2-3 3-2M955 540l5 3-1 3-6-1 1 5-4 2 2 5 5 2M1061 540l0 5 5 6-4 1-5-2-3 2 5 2-2 2 4 2-1 3 4 5 6 1-1 6-5-7 2-4 6 2 3 0 2 5-7-2 2-3 5 5-2 3 5 3 5 5 2 6-7-4-5 5-8-4 5-3-7-3 4-4-7-2-3 3-7-2 4-3 3 5-4 5 0 7-9-1 9 7 7 1 8 6-11 2 3-8 7-2 6-4 2 8 7-3 1 8-8-5-7 4 1 12 7 11 2 12 13 1M1089 540l1 4 0 5 4 0 4 4 5 2 5 4 0 4 3 3 0-4-3 1 0 4 3-1 3-2-3-2-3-3 3-3-2-4-3 2 5 2 2 4 1 4 2 4-4 2-1-4 5 2 1 4 2 5-6-2 2 7 4 9-4 4-6-1-4-7-7-6 8 1-4-5-6-4 2 8-7-7-6-6 6 2M1100 540l2 3 3-3M1024 541l2 5 2 4M1043 541l1 5 5 3-1-4 4 3 5 2 3-1 6 2 1-4 4 1 5-1 5 0-1-3-4 3 7 4-5 1M1081 541l-1 3 4-1 6 1 7 2-3 3 4 0-1-3M1093 541l5 1 4 1M1093 541l-3 3-5 3-4 0 2 4 3 4-4 0-2 4-3 2-2 3-2-4-3-3 5 1 2-3 5 0 3 5M947 542l6 3M947 542l-2 2 2 5M963 542l-3 1M979 542l3 4 3-2M1054 542l2 4-4 2 0-4M1054 542l7 3-5 1 4 3 2 3-3 2 6 2-4 2M1015 543l3 4-6-2 3 5 5 4 1-3 4 5 2-4 4 1 5 1-4-5 6 2 3 4 2-2-5-2-2 3 5 1 4 2 4 1 3 4 2-2-5-2 2-4 3 6 3-4 3 5 6 1 3-2 1-3-5-1 1-5 4-1-3-3-6-2-1 4M1020 543l-2 4 5 1-2 3 6 1-4-4 3-2 4-2 5 2-3 3M1038 543l2 5 3 5 2 4 2 5 2-4-2-3-4-2 3-2-2-5-4 2-2 3-3-5 5 2 6 3 5 3 6 2-3-4-3 2-4 1-2 2-2 2-2-4-2 3 3 4-4 4 3 5-7-2-2 5-9-2-7 0-2 6-3 7 8 7 0-6 9 4 1 10 11 9 13 10 13 15 2-12 10 0 12 5-10 7-14 0-15-1 2-14 7-7 8 10 12 12M1084 543l1 4 5 2M971 544l-1 3 5 4M1080 544l5 3 4 6-3 2M937 545l-3 2 2 4 5 4 4 3 0 6-1 7 3 8 10 3 6-6-10-2-6 5 4 9 6-6 12 5 8 12 13 4 3-7 6-4 11 9 11 14 15 18-16-1 1-17-11 5M937 545l1 3M959 546l4 4-2 0M979 546l-4 1-5 0 0 3M979 546l4 4 3 2-2 2 5 1-1 3 3 3M979 546l0 4 0 4 4 4 1-4-5 0M979 546l3 0 4 3-3 1 1 4-5-4 4 0-1-4M994 547l-4 1-4 1 4 3-4 0M1010 547l2 4 3 3 0-4 6 1-3-4-3 3-3 1M1010 547l5 3M1085 547l-2 4-1 4M990 548l6 3-6 1 0-4M1052 548l2 4-5-3 2 5M1052 548l-3 1-3 2 1 4M1071 548l-1 2M1098 549l3 2M1098 549l0 4M963 550l4 2 5 2 4 6 5 1 2 5 1 7 0 6M936 551l1 4 2 4 6-1 4 4-4 2-4 0-2-5 6 5 6 3 5-3M1083 551l6 2M1062 552l3 4 1 6M1005 553l-1 4 6 1M984 554l4 4-5 0 4 5-4 3M1036 554l-1 3M1036 554l3 4 4 1 4 3-2 6M937 555l4 0-2 4M999 556l-2 3-4 0-5-1-1 5-6-2M999 556l3 4 4 2-2-5-2 3-2 4 6 4 0 5-6-4-6-4-4 2M1025 556l4 4 2-3M1065 556l4 4 3 4 1-4 2-2 2 3-4-1-4 0M952 557l-3 5 2 5-7 4-3-7M965 557l0 4 4 6 1-5-5-1M965 557l5 5 6-2M1096 557l3 5 1-1 3 4-4 1 0-4M1096 557l4 4M997 559l3 5 6-2M997 559l5 1M1043 559l-1 3 5 0 5 0 5 3 7 1-2 5 3 6-6-3 3 6-7-1M1080 559l1 4 4 0 0 5-8 1 3 6-5 1-3 4 8 2 5-2 0-6 5 5M1108 559l5 1-2 2M1026 560l3 4-2 4 7 1-5-5 4-1 5 3-4 3-1-6-4-3-3 0-2 3-2 3M1029 560l0 4-5-1 3 5-4 4-6-6-3-5M1054 560l6 1-3 4-3-5M1077 561l2 4-4-1M1077 561l4 2 4 5 4-2 0-4M1047 562l4 4 1-4M987 563l7 2 1 5M1012 563l-1 4 6-1M1081 563l-2 2-2 4 8 5 0-6-6-3M1000 564l-6 1M1057 565l5 6-6-2 1-4-6 1 5 3M1089 566l6 2 1 5-5 1-6 0-5 1 0 7 4 10 9 9-8-1-5 5-10-6-1-8-7-6-7 1 0 6 4 9 1 11 11-1-3 11-15-3-3-13-10 3-2 11 13 13-15 0 2-13-8-11-1-9-10-8 1 10-10-10-7-9-4 9M1099 566l-4 2M951 567l6 3 5-1 6 4 8 1M951 567l2 7-9-3M969 567l-1 6-5 3M1108 567l4 3 5 2-4 3-6 2-5 0M1034 569l7 7-4 4-8 0-8-3M957 570l-4 4 4 8 3 8 7 6M1041 571l0 5 5 9-8 3-10 2M1011 572l-5 1 0 6M1023 572l6 8 3-6 9 2M1075 572l0 4-6-3M968 573l3 5M1006 573l-7 2M1006 573l8 5 5 8 3-4M1075 576l5 6M1065 577l2 6-5 2 0-5 5 3 2 8 8 4 3 10-9 6-12-10-9 5 10 6M1065 577l-3 3M1107 577l-1 5 5 6-6-1-4 4 6 10-4 8 10 0M1107 577l8 5-9 0-1 5M1119 577l2 5 3 6 2 7-7-4 5-3-9-6-4 6 4 7M1119 577l-4 5 6 0M992 580l11 3 8 2 8 1M1029 580l9 8-1-8M1046 585l2 10-9 3 11 8-2-11 7-3M1087 586l6 6-9 0M969 587l-9 3-5 10 6 14 25 17-2-17 14 1M969 587l14 5-6 7 7 15-15-10M951 588l4 12M951 588l9 2M1038 588l1 10-10 2-9 2-10-1M1038 588l10 7 11 6M1101 591l-8 1 0 9-2 8-6-9M983 592l10 4M983 592l7 11-6 11 19 18M1126 595l3 7 3 7-9 3-9 8-11-11-12 0-11-4 5 10-7 7M1126 595l-3 5 6 2M1123 600l9 9 3 9-8 7 12 2-7 9 11 1-4-10-4-9-12-6M1020 602l10 7M1020 602l1 13 17 5 15-1M1091 609l9 12 7 14M1091 609l-6 6-14-4M1103 609l-3 12 14-1M961 614l23 0M1085 615l5 12 10-6 10 7 9 8M1085 615l15 6"/>
<path d="M1043 120l-2 3-3 6 6 11 4-7-5-13M1041 123l3 17 7 13-3-20 6 14 5 13 6 14 5 14 0 12 6 1-3 14 2 19 5-5-7-14 8 0-1 14 7 0-6-14-5-14-6-13-5 2 0-16-5 4-1-18-8-7 3-6M1041 123l7 10M1038 129l2 14 4-3 1 16 6-3 4 15 4-8M1038 129l-4 6 4 17 4 11 3-7-5-13-6-8-3 6 7 11 2-9M1031 141l-3 5-3 5-3 5-3 5-2 5-3 5 2 11 3 11-6-4-6-5 2-4 4 9-2-14 3-4 5 6 6 8 5 11 0 9 5 11-2 8-2 6 2 11 4 11 4 6 4 8 5 10 5 15 6 0 6 8 6 6 4-3 7 10 3-9 6 11 6 0-2-17 6 11-4 6 0 12-6-12 0 11 6 1 6 14 4-3 6 10 4-3-6-11-4 4 2 11 4-1-2-14-3-17-7-8-1-15-5 4-1-13 2-11 6 11-2 9-4-20-6-2-6-15 6 0 6 17 0-17-6 0 0 15-5-2-1-13 0-14-6-13 1 15 5 12-5 2-5-4 2 10-1 11-5-5-4 3 1 11 1 10 3 11 6 10 5-3 0 15-5-12-2-13 4-3 6 4-1-13-4-7-5-8 6 0-1 8-1 7 6 13 2 12-5-3 4 12-4 3-1 9-1 8-3 2 2 9-4-4-2 6-3-12-1-12 1-9-2-13 3-6 2 14 4-4 1 11 4 1 5 8 5 9 7 13 6 15 4 13 5 2 6 13-7-2 1-11-4-12-5-3-1 10-6-3-2-14 3-8 3-7 1-10 6 8 4 12-3 5-3-11 2-6M1031 141l3 14-6-9 2 13 2 11 6 11-1 12 4 10 5 6-3 6 7 9-4-15 1-7-1-14-8-7 4 15 4 13 5 5-1 10-4 4-3-13-2-12 1-7-5-3-6-3-1 6-5-1-6-2 6 12 5 0-5-10 0-10 2-7 5 3 6 0 2-12 2-6 5 11-7-5 6 19 1-14-2-18-7-4-4 3-4 4-5-8 2 12 5 7 3-3 3 14M1038 152l2 17-6-14 1 12-5-8-3 4-5-7 2 11-5-6 3 12 3 12-4 1-2 7 0 8-6-12 3-7-5-7-2 5M1051 153l-1 13-3 8 6 17-1 12-5-1 4 12 4 10-5 0 2 15 3 14 3-5 2 13-5-8 2 12 3-4 3 13 6 10-4 3 2 12 3 12-5-6-2 7 0 10-2 5 3 10 4 7-1 8 3 9-1 7-1 4-2 2 1 6 2 3 1 1 0-3-1 2-1-4-1 1-1-2-2-6 2 2 0 4 1 5 2 0 1 4 1 5-1 0 0 3-2-1-1 2 1 5 2 2-1-5-1 3-2-2 1-3 2 2-1-4 0-4-2-3-2-3-3-5-3-8-2-5 0-3 1-3 1-2 2 2-1-5 0-5-1-3-2-2 1-1 1 3-1 1-1-3 0-4 1 3 2-1-1-5-1 3 0 3 2 3 0 3 1 0 0-3-1-4 3 3 0 4-2-3 2-1-1-6-2 3 0 4-1 0 0 4-1-3-1 2-1-1-1-3 0-2-1-3-1-4-1-3-3-4-3-2-1 5-2 6-4-5-1-8-1-6-2-6-1-5 2 0 2 3 0-4-2 1 2 5 0-2 1 4 2 3 1 1 2 3 2 5 2 7 1 6-2-3-2-5 3 2 1-5 0-4 0-5-3-2 1-3 1 0 1 5-2-5 0-3-1-4-2-1-1-3-1 2 2 1 1 4 1-3 2-2-2-4 0 6 3 4-1-6 1-4 1-6 3 11 4 0-3-9-4-2 0-10-5-6-4 0-3-3-1 6-2 0-3-5-2-6-1-4 0-4-1-7-2-5-2 0-2-3-1-4-3-5-1 5-3 3-2-4-2 5-4 0 4 7 0-7-1-8 3 3-3-6 0 3-2 1-1 7-4-4-1 4-4-6 2 9 2-3 3 4 2-4-2-9-2 5 2 8 2 6 0 5 1 8 4 8 1 6 0 6 3 4 2 2 2-4 2 9-4-5 0-7 2 3-2-9 4 0 2 0 3 3 0-4-1-5 0-3 0-3 0-5-1-4-1-1-1-3 0-2 2 0-1-3-1 3-1-3-1-3-1-3-2-4-4-4-1 3 2 9 0-5-1-7-1-5 0-4 0-3-1 1 1 2 1 1-1-4 0-3-1-4-1-5-2-1-1 0-1 0 0 3 0 2-1 2 0 2-1 4 2 4 1 0 1 1 1 4 0-5 0-3-1-4 1-3-2-1-1-3-2 0-1-4-1-1-1 0 0-2-1-2 1 4 1 3 1-2-1-3 1-2-1-3 1-2 2 2 1 4 1 2 0 3-1-2 0 2 1 3-1 0-2-5 2 2M1045 156l5 10 5 2 5 10 0 17 5 17 8 3-6-12-2 9 3 15 7 7 6 10 5-2 1-13 5 13 6 14 5 14 1 14 5 0 5 13 6 14 1 15 4-1 6 13 5 14-2 8 6 17-6 5-7-11-3 10-3 7 1 12-2 10-5-12 1 11-3 6 5 14-1 10 4 9 4 4-2-11-2 7 3 12 1-8 4 8 4 11-4 0-5-11-6-7-5 0 5 10-3 1-2-11-2 5-3-3 1 8-2 0-2 0-2-3-2-5 0-5 3-2 4 7-1 2 0 6 2 5-1 2-1 0-1-3-1-4-1 1-1-4 1-3 3 6 0 4 0 3 0 4 0 3-2-2-1 1-1-4 2 3 2-1 1 4 2 2-1 1 0 4 1 3 1 3 1 3 2 3 0-6 3 0 2 6 1 6 1-2-2-4 2-2-4-4-3-5 0 5-1 1 1 5-2 0 0-3-1-2 0-1 2 1-1 2M1027 163l1 9 4-2 0 11 5 12-1 12 7 10-3 6-5-5-5-2 0-9 6 0-1 11 3 12-2 7-3 6-5 0-1-12 6 12 0 11-5-11 1 9-5-7-4-2-3 0-3-5 0 3 2 7 1 5 1-1 0 3-1 2-1 1 2 2-1-3 0-4-2 1-2-3 1 5 2 2-1-4 1-6 2 1 0 3 2 1-1 2 0 2 1 1 2 0 1 1 0 2-1 3 1 3 1-2-1-4 1 1 1 0-2-3 0-4 2 4 0-4 1-2 1 7 3-1-1-7-3 1-2-8 4-2-4-9 3-3 4 1 5 5-3-11-5-5 3 11M1027 163l-3 4-2 6-5-7 2 11 2 9 4 9 0 10 3 14-1 10-5-8 2 11 0 11-1 5 2 5M1050 166l4 13 6-1 5 12 2 13 3-3 3 15-5 12 3 16 4-9 2 12-1 8-5-11-5 2-6-14 2-10 3-9-7-5 2-12 7 8M1024 167l3 11 4 12-6-5M1024 167l4 5-1 6-5-5-3 4-3 5 5 4M1035 167l5 2M1055 168l-1 11-7-5M1028 172l4 9-1 9 5 15-6-9M1054 179l-1 12 7 4 5-5 5 10M1054 179l6 16M1007 184l-3 4-2 4-2 3-1 3-2 2 1 5 2-1-3-4-2 3 3 2 0 4 1 2-1 1 2 3-2 1-1 3-3-4-2-5-2 3 4 2-2 5 1 8-3-4-2 4-3-6-2 3 2 3 3 0 2 8-1 4-2-6 1-6 3 4 2-4 2 8 1 8-2 2 4 7-4 0 0-7-1-7 3 5 2-3 2 9 2 9 3 6 2 2 3-2-1-8 3 3-3-10-3-7-3-2-3-4 1 9-3-5 2-4-2-7-2 3-3-5 3-4 2 6 1-4 3 3 1 1-1-4 2 0-2-2 0 2 0 3 1 4 0-3 2 1 0 3-2-1 1 4 1-3 1 5 2 3-1-5-2-3M1007 184l3 12-6-8 0 9 3 1-3-10M1046 188l-4 8 5 6M1046 188l7 3 5 16 4 14 6 6-2 6-6-2-4 4-6-11M1046 188l6 15-1 11 5 3 4 14-5-7 1 11 2 13-6-9-6-11 2 9-2 4 0 7-2 6-3 4 2 11 1 12 2 9 3 7-4-1 0 7-2-1-2-3 0 2-2-1-1-3 0 1 1 2-1 2 2 3-2-1-2-4-1 2-1-3-2 0 0-4 2 1 0-4-1-1-1 4 2 4 0-3-1-5 0-3 1-4 2 5 0-5 3 6-3-1-1 0-1-5-3 1 0-6-2 1-2-4-3-2-1 0 1 3-1-1-1 2 2 2-1-4 0-2 0-4 1 4 2 4-2-1 2 4-1 4 3 0 2 4 2 6-2-1 2 5 0 4 1 6 2 4 2 1 1 2 2 1 1 3 0-4-1-2 0 3 0 2 1 4 0-3 2-1 0 4 1-1 0-3 1 0 1 5-1 4-1-6 2 2 2 6 2 0 1 4 1 0 0 3 2 2-1 2 2 1 1 3-1 1-1 0-1-2 0-3-2 1-1 2-2-3 1 5-1 3-2-7-4-3-1 6-3-4 0-7 1 5-1 2-3 2-1 6 3 1 2 4 2 1 2 6 1 8-2 3-3-5-2 0-2-6-3-6 3 1 0 5 2 0 0 6 2 6 3-1 3 3 1 6 1-5-3-7-3-4-2 2-2-6 2 1 0 5 0 6 3 5 2 0 2 3 3 3 1 8-3-4-1-7-2 3 3 4 2-4 4 6-3 2 1 6 2-1-3-5-2 4 3 2 0 4 2 5 3 2 3 3-2-8 2-1 3 2-2 4-1 3 3 5 1 7-1 2 0 5 2-1-1-6 3-1 1-5 1-4 3 5 3-1-1-5 1-4 0-4-1-4-1 1 2 3 1 2 1 3-1-5 2 0 2 5 1-2-3-3-1-3-1-3 1-3-1-4 2 3 0 3-1-2 1-1 2 4-2-1 1 3 1-2 1 5-2-3 0 3-1 1 0 4 2 1 0 5 1 8 1 6-1 3-2 1-3-8-4-6 1 6 3 8-3 2 4 7-4-1 0-6-1-7-5-5-4-6-2-8-1-6-3-6 1 7 3 5 4 4 3 5 2 3 2-2 0-6 3 5 1 7 0 8 1 9 2 7 3 6 2 5 1 7 0 6 3 2 2-2 0-7 1-5-3-7 2-1 3 5 3 2 2 8 1 6 1 9 3 8-3 0 0-8-4-3-1 6 1 8 1 8 3 6 0 7 0 9 2 6 3 5 2 0 0 6 2 6 2 6 2-2-4-4 2-5-4-1-2-6 0-4 1-3-2-7-4-6-2 3-1-6 3 3 2-1 1-6 3 0 2-3-2-7 0 10 3 8 1 9 4 10 2 9 1 7 3 0 4 5-2 3 1 8-4-5-3-3-3-8-2-9-1-9-4-5 1-3-3-4-4 3-2-6-3-6-2-6-2-5-3-6-2-6 0-6-2 0 2 6 3 1 2 1 3 5 2-2 3 1 1-4 3 8 3 9 0 9-3-9-3 0 2 6 2 7 2-4-4-3M1013 189l2 13-2 4 4 8 2 10 5 8-4 2 0 7 0 5-2 1-1-6-3-2-2 3-2-3 1 6M1013 189l-3 7 3 10 0 6 4 2 5 7-3 3-4-4-1 3 0 4-2-1-2-3-1 2 2 5-2-2-2-1-1-4-1-1-2-2 1 4 2 2 1 1 0 3 1 1 2 0-1-3-1 3 2 3 1-1M1002 192l2 5-4-2 4 8 2 7 0 4 1 3 1 4-2-4 0 3 0 3 0 3-1-4M1000 195l1 6-2-3 1 6 2 2 1 5-1 0 1 4-1 1M1010 196l5 6 2 12 3-3 2 10 2-3 3 11M1010 196l-3 2 0 7-3-2-2 3-1-5-1 3 1 4 2 3 2 1 1-2-2-2-1 3 2 4 1-1 2 0-1 3M1010 196l0 9-3-7M1004 197l0 6 0 5M1004 197l3 8-1 5 2 1 1 4 0 3 3 4 2 1-2-6-3 1-1 3 2 2 2-1 2 5 2 7 4 7 3 7 0 5-1 1 0 2-2-2-1-1-1 0-1-2M1001 201l3 2M1019 201l6 4 5 9-2 5-4-1-4-7 3 0 5 8M1019 201l1 10-5-9 4-1 4 10 2-6M995 203l3 6 2 0 2 2M995 203l1 8-2 4 2 9 1-5 2 7 1-4-3-3-1-8 2-2 0 3 0 4 2 2 0-3M995 203l-1 3 0 9M1041 203l-5 2 4 16 6 7-3 4 5 5 4 2-2 7 5 7-5 4 3 13-3 6-1 11 6 4-2 8-1 9 0 9 1 9 1 5-2 3 3 3 3 1 0-4 3 6-3-2-2-6-3-6-3-6-3-4 1-3 2 7-2 1-2 3 2 2 2 4 2 4-1-7 2-1 3 0 2 8-2-2-2-1 1 6 1 4 1 0 2 2M1052 203l6 4-2 10 6 4 4 12 5 10 6 3 4-2 0 14 6 11-4 6-5-11 3-6-4-12M1052 203l4 14-1 7M1000 204l0 5-2-4M1007 205l1 6 2 0 3 1 2 8 2-6M1007 205l3 6 2 6 1-5-3-7 3 1M1007 205l3 0 0 6-1 4 3 2 0 5 0 4-1 1-2-2 0 3-1-4 1 1-1-4-2-1 2 4 0-3M994 206l-2 4M994 206l2 5 2 5 2 6 1-1 1 3-1 0 1 2-1-1 1 4-1 4-3-3M1001 208l-1 1 0 4 1 0 0 2-1-2M1000 209l-1 2M1000 209l1 4 2 2 2 0 0-3M1006 210l2 4 1 4M996 211l2 1M1003 211l0 4 0 5-2-2-1 0 1 3 0-3 0-3M1008 211l0 3 1 1M1023 211l1 7M990 213l-2 3-2 3 2 9M990 213l2 7-2 4 1 8-1 4-3-2-2-6-1 5-2-6 1-2 1 8 3 1-1 5 3 1 0 5 2 1 3 0-3-5-2-1 2 6 3 7 2 9 2 6 2 6 2 5 0-7-2 2 0-6-2 0 0-4-2-2-3-6 1-3-3-3 0-4 0-5-1-5 3 3 2-3 1-3 4 4 1-4 2 8 1-4 2 6 0-4 1-2 1 2 2 0 1-2 1-3 2 2 2-2 1 7M1030 214l3 10 5 4 2-7 3 11 3 9 4 5-2-9M988 216l2 8-4-5-1 3 0 6M988 216l4 4 4 4 0 9 2 8-3-5-4-4 2 7-2 2M1012 217l3 3 1 7-2-4M1000 218l0 4 1 3-2 1-3-2M1001 218l2 4 1 2 1 4-1-2 1 5 1 3 1 3 0-2-1-3 0 2M1003 220l0 2 1 4M1001 221l0 3-1-2M1001 221l2 1-1 2M1001 224l0 1M1019 224l1 10 4 9M1019 224l-3 3-2 0-1 3-2 0M999 226l2 7 2 0M1006 226l-1 2 0 3 1 1-1-4 2 2-1-4M1012 226l1 4 1 6M1011 227l2 3-1 4 2 5-3-2-1-3 0 5-2-5-1 1M1016 227l0 7 4 0-4-7M1038 228l4 13-6-6 3 12-6-6M1038 228l5 4-1 9 4 0M1007 230l-1 2 2 2 2 0 0-3M1007 230l1 4M1013 230l3 4M1060 231l1 12-3 5 7 10 7 12 3 16-6-2 4 10 0 11M984 233l2 6 3 6 2 5 2 6M1001 233l3 4 2 2M1066 233l0 12-1 13-5 3 4 6-1 7 2 13-4 4 4 14 2-6 3-5-5-7-6-9 2 13-5-10-6-5-4 0-2 5-3-8-1 8-3-9-3-1 3 7-4-1-4-4 1-3-2-5-1 1-1 1 1 3 2 3-1 3 3 3 2-2 1 7M1056 235l-4 4M1056 235l5 8 5 2 6 13 0 12M1042 241l2 13 1 12 1 10 3 11-3 3-1 6-4-5-1-10-1 4-3-1-3-7-3-7-2-1-1-3 0 4 1-1M1042 241l4 7 4-2 0 11-1 7 1 12M1042 241l-3 6 2 11-3 5-1-11-4 0-4-2 2 5 2-3 0 10 1 9-4-1 0-6-3-6-2-1 0 3 0 3 1 4 0 3 1 2 2 1M1086 242l6 0 0 14-6-14M1061 243l4 15-1 9 4 6-5 1-4 4-6-8 4-5 6 9M1071 243l1 15 4-4M1020 246l0 5 1-1 2-2 3 3 4 6 1-2 2 7-3-5 0 7-2 1-2-4-1-1M1020 246l3 2M1018 247l2 4 0 3 0 2 0 2 1 1 1 3 0 2-2 0 1 4-1-2-2-1-2 2 1 6 2 1 1-2 1 3-2-1-1 2-1-3-3-6 2 0 0-4-1-5 1-2 1 5-1 2 2 2 1 4 1-3 1 4 2 4-1 0 0 4-1-3 1-1-2-2-1-3 2 1-1 2-2-2-1 3 0 6 3 7 3 9-1-9 1-3 2 2 3 6-3-2-2-6-1-5-2 1-1-5-1-4-2-3-2-5 2 1M1039 247l-2 5M1039 247l5 7 5 10 4 6 3 11-1 10 3 13 5 8 4 11 4 10 4 7-3 5-4-1-1-11 4 0 3 0 3 0 5 11 2 9 5 8 5 9 6 9 5 13 1-10 5 3 4 13-5-4 1-9 1-10 0-10-5-3 0 10-5-1-2 8 0 12-4 1-4-9-4-7-5-4-5-3-3-12 5 4 1-6 4 9 4-3 1 12 2 10 0 10 4-1 4 8 4 11 2 13 3-4 4-5 7 5-2 9 5 2 5 8-5 2-6-2 1 14 3-5M1046 248l4 9-6-3M1005 250l2 9 2-2M1009 250l4 4 2 4-1-4 1-2 2 3 1 2 1 3 2 1 1 1 2 1 1 4 1 0M1021 250l1 4 1 3 2 0 1 4 1-3M1020 251l2 3-2 0M1033 252l5 11 3 10 2-4 3 7M994 253l3 6 1-6 2 10 2 9 4 1 1 7 3 1 3 5-2 1-2-1 2 7-4-2 2 6 2-4 2-1 3 7 2 7 2-2 1 8-3-6 0 6 1 8-3-6 2-2-4-3 2 5M998 253l4 6 1-5 4 5 3 6 4 2-2-7-2 5 1 7 1 7-2 2-1 5-2-6-1 4 3 2-2 5-2-6 1-1 1 7M1018 253l0 4 0 1 1 2-1 2 2 4 0-2 1-3-1-3-1 2 1 4-2-2 0-4-1 3 1 4 0-3-1-1-2-3-1 4 0 5 0 8 3-2M1018 253l1 2-1 2 2 1-1-3M1013 254l-1 6 2 2-1-8 1 0M1023 257l1 3 0 3 1 0 2 3-1-5-1 2 0 4-1 2-1 1-2-2 0 2 2 0-1-3 2 2 1 3-1 2M1050 257l7 8 2 13-3 3M1065 258l3 15 7 13 2 16-4-8-3 0M1065 258l7 0 5 17-2 11 6 13 3 13M1072 258l6 6M1081 258l2 17 3 15 4-6 7 13-5 3 7 14 5 15 5 8-2-14-8-9M997 259l-1 3M997 259l3 4 2-4 3 1 2-1 0 8 4 5 3 3-4-10M997 259l1 5 2-1 3 4 2-2M1002 259l1 8 3 6-1 6 2 1M1005 260l2 7-1 6 3 1 1 7M1024 260l1 3M1033 262l4 10 0 6 2 7 0 5 2 1-2-6M1033 262l5 1 5 6 2-3 4-2M1033 262l-3 2 4 7-1 6M1000 263l0 5 2 4 3 7 0 6-3-6 3 0 1 5M1038 263l-1 9 4 1M998 264l2 4M1020 264l2 3 1-2 2 2 1 3 1 3 0-1 0-2-1 0-1 2 2 4-1 2 1 2 2 0 2 5 2 6-3-2 1-4 2 3 1 4 1-3-2-1M1022 264l0 3-1 1M1018 265l0 5 1-1M1003 267l-1 5M1007 267l2 7 2-2M1025 267l0 5 2 1 0 3 1 0 1 4 0 4 2 1M1087 269l3 15 2-13 4 13 6 9 4 12 4 11-1-17-5-15M1021 270l1 4 1 2M1103 270l-5 3M1103 270l6 14 0 15-7-6M1027 272l1 4-1-3M1009 274l3 5 1 7 3 6 0-6-3 0 0 6-2-5M1014 275l2 11 1-7 1-3 2 3 0 7 0 6-2 3 3 3-1 6 4 1 3 8 3 8 0-8-3 0 0-5 2-2 1 7-3-5-1-6 3 4 2 4 2-1 1-3 1 3 0-4 2 3-1-3-1-3 0 3-1-2-2-4-2 1 2 3 2 0 1-1M1014 275l-2 4 4 7 4 6 3 3 2-6 3 9 1 8 2-1 2 4M1014 275l3 4 3 0 2 7M1021 275l-1 4 3 4 1-3 2 1 0-3M1077 275l4 15 5 0 6 10-5 3M1083 275l7 9 6 0M1027 276l0 4 1 5-2-4 1-1 2 4 1 5 0 5 0 2 2 3M1040 281l3 7 1-7M1029 284l-1 1 0 6 2 5 0 4-2-2-5-3 1 10 3 3M1090 284l2 16 1 14-4 1 4 10-5-1 1 11 3-2 2 11 4-5 1-13 5 3 1 11-7-1 3 18 6 5 5 13 5 0-1 12 5 1-4-13-5-10M1075 286l-2 8M1075 286l6 4 0 9M1049 287l4 12 5 5-2 4 3 7 4-3 4 3 5 9 5 9 6 3-3-10-3 7-2 7 2 11-5-6-5-12-4-11 4 1 5 1 2 9 1 7 4 6-2 5 3 10 3 11 0 9-4-4-2 2-2 3-2-3-1-4-1 3 2 1-1 2-1-3-1-4 2 1 2 1 1 6 1 5-1-1 0-4 3 3-1-6-3-3-1 3 1 4 1-1M1043 288l3 2M1043 288l2 8 3 7 4 5-3 1-2-2M1043 288l-2 3 2 7 0 4-1 0 0 3-1-4 1 1-1-3-1-1-1 2 1 3 2 2 1 0 0 3-1 2-1 2-1-2 0 4-2-3-1 1 2 2 1 0 1 0 0-2 2 1 1-1 2 4-2 0 1 3M1030 289l-2 2 2 3M1035 289l1 4-2-1 2 4-2 0 2 4-2-1 0 4 0 3 1-1 1 0 2-1 0-2-2-2 2-2 0 4 2 1 0 2 1 2-1-4 1-2-1-3-2-1-1-1 1 2-2-2 0 4 0 5 2 3-1 0 1 3 1 3 1 3 1-1 2 3 1 3M1036 289l0 4 2 1 0 3M1036 289l2 5 1-4 1 5 1 4 2-1 2 5 3 0 1 6-1 4-2 0 1 3M1028 291l0 7 2-2M1041 291l-1 4 0 3-2-4-1 2-1 0 0-3 1 3M1055 291l5 9 3 12M1061 291l-1 9 5 5 2 10 3-4 5 8-3 5M1013 292l3 0M1013 292l1 5-2 2-1-6M1020 292l1 6 2-3 3 7-2 3-3-7M1038 294l2 1 3 3 2-2M1009 297l3 6 2 6 1-6 1-4M1009 297l3 2 0 4 3 0-1-6M1114 297l1 16 5-2 5 14 3 17-7-16-4 3 2 15 1 14-5-11 0 13 6 9 3 12 6 7 4-6 7 11 6 9 5 2-2 11-3-13-3 4 6 9-4 3-5-5-5-2-3 7-4 10-1 11 5 14 5-3 2 13 4 15 7 14-6 0-1 9-5-11 6 2-1-14 1-10-5-5-7-10-4 7-5 0-2 4-4-1 4 10 4 9 5 10-4 1-1-11-4 1 5 10 1 12 2 8 1 5 1-4 5 4-3 5-3-5 1 7 2-2-2-9-4-9 4-4-1-9 4-1 4-1-5-9-1-10 4 6 2 13 1 15 4-4 4 5 2 9-3-1-3-13M1114 297l-5 2-3 6-3 3 4 15 3-7 7 13-4 4-6-10-3 6M1028 298l-2 4M1028 298l3 7 1-2 2 3M1012 299l3 4 3 3M1109 299l6 14-5 3M1030 300l1 5 0 5-1 3 4 1 1-1 0-4M1060 300l-2 4 1 11 4 7M1042 302l1 3 2 4M1043 302l0 3 2-2M1015 303l3 9 3 0 0 8 0 6-2-6 2 0 2 7 0 5-2-6 2 1 2 5 3 6 0 5 2 6 2 2 0 4-2-6 1-5-3-6-3 0 3 5 3 1 3 5-2 2-1-7 0-8-3 2 0-8-2-7-1 2 0 7 0 6-2-6 2 0 3-2-3-5-2 2M1020 304l4 8 3 1-1 6 0 4-2-5-3 2-3-8M1038 304l0 4 2 2-2 1 0-3 1-1 1-2 1 4 0 3 1 4 1-3 1 3-2 0 1 3 1 0 2 5M1038 304l1 3 1 3 1 4 0 2 1 0-1-2M1024 305l0 7-3 0 3 6 1 7-4-5M1039 307l2 2 0-2 1 3 1 3M1052 308l4 11 5 8-2-12-3 4 0-11M1041 309l-1 1M1041 309l1 1 2 2 2 1M1049 309l3 8-2 3 1 7-3-1M1031 310l3 4-1 6 4 6-3 1 4 7 2-4 2 9-3 0 2 6 2 8 0 8-2 4 1 7 2 6 1-3-1-6 3-2-4-6 3-1 1 7 2-3 3 6 2 3 1 6 3 1 0-9-2 0 0-5 1 0 1 5 1-5-2-6-1-3-2-4 0-2 1-2 0-3 2 2M1024 312l2 7 4 2 3-1 3 0 2-1 2 0-1 3 2 1 2 0 0 4 2 1M1024 312l0 6 2 1 2 6-2-2M1044 312l0 4 0 3-2-3M1030 313l3 7 1 7-4-6 1 8-3-4 2-4M1035 313l1 3 1-2 1 5 0-3 1-2M1048 313l4 4 4 9 0 6-1 5 2 4M1115 313l6 13 1 13-3 5 7 10 1 17 3 17 1 15 2 15 6 2 2-7 3-7 2 12-2 8 3 16 7 15-6-1-1-14-5 4-4 4 0-10 4 6 6 10 0 9-3 3 5 9-6 1-3 4-2 8M1115 313l2 16 5 10 4 15 8 6 8 6-6-14-8-10 3-4M1034 314l2 2 0 4 2 4-1 2 3 4 4 3-3-6 0-4 2 4 1 6 2 9 2-1 1-1-2-5-1 3 0 4 3 4 1-2 2 2 1-2 1 0 1-2 1-1-2-2 1 3 0 4 1 4 1 4 1 4-1-2 0 4 2 2-1-4 1-3 1-2-1-3-1 1-2-1 0 3-2 0 0 4-1-1-1 3-1-4 2 1-1-4-1 3-1 3 2 1 2 1 2 6-3-1-1-6M1067 315l0 8 0 10-3 4-3-1 0-9 6 6M1089 315l-1 9 4 9 1-8 5 14 6 11 3 12 2-8-4-14M1036 316l2 3 1 3 2 5 2 0M1052 317l4 2 0 7 3 3 2-2M1038 319l0 5 2 6 1-3-3-3 1-2M1056 319l3 10-1 5 3 2 0 4 3 4 3 8 0 5-2 2-3-1 1 4 2-3 2 3 3-1-3-4 0 5-1 4 0 8 2 5 2 2 1-1 0-2-1-1 1 3 1 1 1 3 0 3 2 2 0 3-1-1 2 5-2 0-2 0 1 5-2-3-1-3-1 3 2 2-1 3-1 3-1-5M1075 319l2 14 2 13 5 7-3 2M1075 319l5 7M1048 321l3 6 3 4M1028 325l0 5 3 6 4 7 2 7 0 6 2-2 1 5 1 6-2-3-2-6-3-7 1 7-3-5M1034 327l-3 2-3 1M1034 327l0 8 4-1M1051 327l-1 3M1084 327l3 12-4-3 4 13 2 12 3-3 6 7-4 5-4 3-2 3-3-12-2 8 5 11 4 0 3-2 1 11 1 12-5-11 0 9-5 0 0 8 2 1-2-9-3 1 3 7-3-1-2 0-2-5 0 4 2 1 2 5 0-5 0-6-3-4-2 0-1-6-1 2-1-5-1 2M1031 329l0 7 3-1 4 6 1 8 2-4 4 2-3-8M1031 329l3 6 1 8-4 1M1059 329l2 7 3 8 4 0 3 10-4-2-3 0-1 2 2 5 1 7 2 6 2 2-1-6-2-6M1048 330l2 7 1-3 0 4 1-1M1092 333l6 6M1052 334l2 5 1-2M1047 335l3 2-1 3 1 4 1 4-2-2 1 5 1 4-2-1-1-5 2 2 2 1 1-2 1 3-1 0 0 3 1 4 2 3 1 3 2 0-3-3 0-4 1 1M1089 335l2 12 3-3 1 10 3 11 4 6-1-14-6-3-3 4 2 12 1 11 5-2M1089 335l-2 4 4 8 1 11-5-9-5-5M1050 337l1 5 1 4 1 2 1-2M1050 337l1 1 2 3M1064 337l0 7-2 2 2 6 1 7M1051 338l0 4 2 2 0 4 1 3-1-1-1-4-1 2 1 4 1 1 1 4 2 0 1-1 0-2 2 1 2 2 1 1 0 3-2-1-1 2 0 4 1 7-2-2M1087 339l0 10-3 4 1 11 5 9 5 8 5 10 0 9 4 1 0 10 5 9 2 13 6 6-3 4-1 10-5-6 0 8M1122 339l6 3 6 18-2 9 2 13 3 17 4 14 3 13-5-6-3-9-5-8-4 3-5-6 4 14 7 4-6-12-1 8-6-4-4-1 4 11 3 11 0 10-5-12-4-2 3 12M1049 340l2 2M1046 342l-1 5 3 2-1 6 2 9 4 1-1 5-2 2-3 4 2 8 2-4 3 4 2 0-1-5-2-2-2 3 2 10 1-6 3 7-4-1 3 7 1-6 3 0-4-7 1 7 3 7 2 7 1-6 3 0-1-6 2 3 0-4 1 2M1128 342l-2 12-6 4 1 11-4 6 7 6 2 13-4 6M1035 343l4 6 0 5M1054 344l1 2M1064 344l0 8-2-2-2 0-1-3 1 0M1072 345l-1 9 4 3-1 7-4-3 1-7 3 10 4 5 1 8 1 7 1 7-1 3-1 5 3 5-2 0-2 0 2 4 1 6 1 6 1 6 1 2 1 3 1 3 0-2 2 0-1-3-1 1 2 2 1-1 0 2 0 3-1-4 1 1 2 2-2-4 2 0-2-4-1-4 1-2 2 2-1 2-1-4-2-4 1 6-1 2-2-2-1 1-1 2 1 5 2 3 1 4 1 4 1 3 2-1 1 3 2 0 0-3-1-3 1-1-1-4 1-3 0-4 2 1 2 3 0-6-2 3-2-6 0 5 2 5-2-1 1 4-2-1-1-1-1-4 0 4-2 1 0 2-2 0 1-3 0-3 0-4-1 1-2-3 0-3 1-4 2 4 2 2-1 2 0 4-1-3 1-1-2-2-1-6-2-5-3 0-2-4M1045 347l-2 6 4 2 3 3 3 7 1 8 2-2-3-6 1-5 0-3 2 2 0-2 0-4-2-2M1045 347l2 8 2-1 1 4-1 6 1 8 3 5-1-7M1091 347l4 7M1091 347l-4 2M1051 348l-1 3-1 3M1051 348l2 2 0-2 2 1 1 4 1 3M1039 349l-2 1M1039 349l4 4-2 2-1 4 3 2M1039 349l2 6M1053 350l0 3M1060 350l0 3 1 1 1 4 1-4-1-4-1 4-1-4M1104 350l5 4 6 6 5-2 7 13-6-2M1058 351l1 4M1058 351l-1 3-1-1M1064 352l3 5M1043 353l3 7 3 4M1060 353l1 4-1 3 1 4 1 3 2 5-1 5 1 7 1 5 1-2 1-1 1 4 2 5 1 0 0-3 1 4-1 2 1 4-1-2-1-5M1061 354l0 3 1 4-1 3-1 1 0-5M1061 354l2 0M1126 354l6 15 8 8 2-11 5 13 6 14 5 14-1 11-5-14 1-11-6-2 5 13 6 3 6 14-7-3-7-3 6 13 2 13 5 11 6 14-7 0 1-14-5 1-4 4 8 9 0 13-2 7-5-7-5-2 1 15 7 10 0 10-4 4 6 15 4 13 6 10 2 13 8 9-4 6-3 5-5-7-5 7-3 8-6-6-1-14 0-13-1-12-1-11-2-11 5 7-3 4-4 0-4-1 0-10-6-10 3-1 3 11 4 11 5 11 5 11 4-3 0-9 3-5 2 12 6 11 4 15-5-6 1-9 4-5 3-8-5-13-4-15 4-6 5 3 4 12 0 13-4 6 7 11-3-17 7 12-2-13 5 7 4-6 3-6 4-6-2-20 6 14-4 6-6-9 4-11-6-2-6-9 3 15-5 0 2-15-7-2 5 17 6 13 6 9-2-15-4 6 3 15-7-11-2-17-4 6-1 9 7 2 3 17-3 6-4 5-3 6-3 5-4-14 7 9-4-17-1-10-4-3 0 10 5 3M1047 355l-1 5M1035 356l2 0 3 3-1 3M1035 356l2 5 0-5M1056 359l-2 1M1115 360l2 15M1062 361l1 1 3 4 3 2 3 2 0 5M1062 361l1 6 1 5-3-2-1-5-1 1 2 4 2 7 3 1 0 5-2 1-1 3-2-8 2-2-3-4 1 6-3 1-4-7-1 4 1 7M1070 361l2 9 2 6 2-4 3 5M1080 361l-2 8 5 12-3 3-3-5-1-7 2-3M1080 361l5 3M1059 362l1 3 2 2-1 3-1 3M1063 362l0 5 3 7 3 3-1-5M1061 364l2 3 3-1M1074 364l2 8-4-2 2-6M1047 367l3 5 1 8-4-4 0-9M1062 367l1 0M1132 369l-5 2M1072 370l-2 4 0 3-1 0-1 2M1056 371l2 9 2 11 3 8 2 7-3-1 2 8 4 1 1-8-3-7-1 7 3 8 1 7 3 4 3 0 3 0 2 7 2 2 2 5 2 3 2 2 1 1 2 3 1-1 1 4 1-4 1 3 1-2 2 6-1 4 1 6-1 4 3 6-2 0-2 1 3 8 2-1 0-4 1-1 2-1 0 4 2 5-1 3 2 2 0 4-1 1 0-4-1-3-1-1 0 4 1-3-1-4 2 1 1 5 2 6-2-2-1-3 1-1 2-1 1-1-2-2 1-1-1-2 1-2-1-3-1-1 0 3 2 1 1 2-1 2 2 2 3 4-1-5 1 0-1-4-2 0-1-2 0 3 1-1 0 5 0 4M1102 371l4 11 4 12-5-2-5-1 4 10 1-9 4 11 4 12 1 12-5-7-1-10 5 5 0-11 2-6M1042 372l0 6 2 6 0-6M1070 374l-1 3 1 4 2 3 1 0 2 2 0 3-1 2-1-4 2-1 1 4 2 3 2 1 1 5 2-2-2-6 3 0 3 11 5 8 4 1 4 8 6 5 0 10-2 6 0 8 3 9 2 6 0 5 1 5-2-3 0 3-1-3-2 0 0 5 1 3-2-2-2-3 1-1 0-4-2-2-1 0-2-2 2-2 1 4 1 3-2-3 0-4-3-4-1-5-1-3 3 4 2 8 1-3 2 1-1 4-1 2M1045 375l2 1M1088 376l0 7 4 10-4-1-1 10-4-5-3-3-1-5 2 2M1053 377l3 7 2-4 5 7 2 6 0-4 2 3-1-5 0-4 1 0 0-3M1063 377l3 6 1 3 0-3 2 4 0-4M1069 377l2 3 1 4-2 0 0 3 0 3 1 2 1-2 2 1 0 5 0 4-1 1 2 4-1 0-2-1-2-1 2 5 1 5 3 3-2 2 4 7 0 8 1 9 5 7 3 5 0 4 2 8-2 3 2 4 0 7-2-5 0-6-3-2 3 8-2 3-1-5-3-5-3-5 0 8 3 6 2 6-1-7 2-3M1140 377l7 2 0 12-7-14 1 16 3 13-7-7-6 4-5-9 4-6 7 11-1 12M1072 381l0 3 1 3-1 0-2-3M1072 381l2 2-1 1M1083 381l1 10-4-7-2 1-2 2 0 3-1-1M1083 381l5 11 4 10 4 9-1 7 3 9-4-3-2-7-3-6 3-1 0 7 3 1-1 6-1 2 1 3-2-1 2 5-2-1 1 4 0 2 1 2 1-3 1-3 2-1 0 5-2-4 0-4M1083 381l5 2 0 9-4-1-1 6 1 6-2 1 2 5 1 5 2-4 0 7-1 2-1-5-1 0 0 5 1 4 2 3 0 3M1074 383l1 3M1044 384l2 6 1-2 1 8 3 6 2 1 4 1-1 5 1 6 2-3 1 8 3 4 3 5 0-6-2-10-2 4-2 3 2 6-2-1-2-6-3-6 1-4-3-6-2-5M1072 384l0 3 2 4-1 2-2-1M1080 384l-1 5-1-4 0 5 0 3M1067 386l2 1-1 3 2 2 1 3 0 3 0 2 1 4 0-2M1063 387l2 2M1063 387l0 7 3 5M1063 387l-3 4 3 3 2-1 2-1 1-2 2 0 0 2M1069 387l1 3M1069 387l1 0 2 3 0-3-2 0M1076 387l2 3 2 4M1121 388l5 6 1 12M1079 389l-1 1-2 0M1046 390l2 6M1053 390l0 7 4 7M1072 390l1 3-1 3-1-1M1060 391l0 7-1 5M1147 391l-6 2-4 6M1147 391l0 11M1073 393l1 3 1 3-1 1-2-4M1063 394l0 5-3-1-4-1-3 0 0 6 0 4 2 6 2 2 1 4 2 1-3-5M1110 394l-1 9-5-2 4 9-4 1-4 8-2 8 4 4 2 9 4 7 3 11 4 6-3 3-1-9-2 5 3 4 1 6-1 1-2-1-1 3 1 4 1-2 2 4-1-5 0-3-1-4-2-2-2-1 1 3M1110 394l3 10 3 5M1076 396l1 5 0-3M1075 399l2 2 0 4M1081 399l1 5 0 5-1 5-2 1-2-6-2-4-1-5 2 2-1 3 0 2-1 2-2-5 0 4-3-2-4 0-1 7M1100 400l-3 4-1 7M1077 401l1 0M1077 401l-1 1M1077 401l1 3M1092 402l0 8 3 8 5 1 2 12 4 3 5-1-5-9-2 3-4-8-3-15 7 7M1092 402l5 2M1109 403l-1 7M1109 403l4 1M1069 406l2 7 2 0M1072 408l-1 5-3 1M1072 408l2 1 2 7 0-6 1-1M1074 409l2 1 3 5 3 5 2 4 0 4 2 2 0 2-1-1 1-1-1-4-1-2 0-5 2 0M1087 410l3 7-1 4M1120 410l4 10-4 0 0-10M1089 411l1 6-3 0-2-3M1081 414l3 5-2 1-2 3 3 3-1 4 0 4-1-5 1 1 2 1 1 0M1126 414l-2 6 5 8 6 4-2-14 7 14 7 10 4-11-1-16M1126 414l3 14 5 12-6-1 0 10-3 3M1079 415l-3 1 4 7 2 7 2 4 2 0 2 1-2-3M1076 416l2 9 2-2M1090 417l2 0 0 5 2 2M1090 417l1 6 1 5-1 1 0 2 1 1 0 3-1 0 1 3 1 3-1 0 2 3-2 0 0 3M1090 417l2 5-1 1 2 3-1 2-2-3 1 4-2-2M1146 418l5 13 7 10 0 12 4 13 5 14-5-1 3 13 6 3 6 4 6 4-2 11 7 6M1157 418l6 17 0 17 6-3 0 17 6-4 5 0-5-14-6-14-5-13-1 14-7-7 1-10M1060 420l0 5 2 6 3 6 2-1 5 5 0 8 3 6 3 8-2 3-1-6 3 3 0-8 3 0 2 1 0 4 3 3 3 3 3 5-3 2 3 7 2 6-2 1 3 7 2-6 2-5 3 3 0 5 3 7 1-3 2 5-1-6M1120 420l5 8 3 11M1124 420l1 8-2 3M1139 420l1 12-2 8-3-8 5 0 4-6 7 5 5-3M1069 421l2 7 4 5 3 0 4 6-2-7M1069 421l-3 2 3 9 3 3M1092 422l1 4M1072 425l-1 3-2 4 3 9-3 2 3 6-1 5 3 6 1 0 0-5 3 0 0-6 1-3-3-4 3 0 0 4 2 4 0 5 0 6 2-1M1078 425l3 4M1087 425l1 3-1-2 0-1M1062 426l2 4 1 7 2 5 2 6 2 6 3 2-2-7-3-1 0-5-2-1 0-6 2 7M1085 426l-1 2 0 3 0 3 0 5 2-1 0 4 1-1 1 3 0-2 1-1 0 4 1 3-1 5 1 8 2-3 2 8 3 2 3 1 0-3M1085 426l2 0M1098 427l3 10-3-4M1104 427l-2 4-1 6 3 3M1104 427l2 7 2 13-4 1-3-4 0 6-2-1-3-1 0-4-2-4 2 1-1-4 2 2-1-5M1114 427l-3 6 3 10 4 10 0 10 0 9 4 11 0-10 4-1 0 10 4 0 1 10 4 8-3 1-5-8-4 1 5 11 0 6 2 2 2 1 1-5 4 9 1 11 5 9 5 12 4 0 5-3-6-8-4-8 2-3-2-14 1-8 6 10-4-1 2 8 2-7 6 6 0 9-4-2-2-13-3-14 0-10 3 13 0 11M1092 428l0 4-1-3M1125 428l4 0M1066 429l-2 1 3 6 2-4-3-3 1 7M1151 431l3 14 0 12 4 16 4 6M1135 432l-1 8 4 10 5 8 5-2 4 12 2-11M1140 432l2 14 1 12-3 5-1 10 5 5M1075 433l4 9 2 8 3-1 3 9 3 3 2 10 3 9 1-5-4-4 2-5 4 8 2 4-1 5M1111 433l-1 9 3 11M1082 434l2 0 2 4 0-4M1082 434l0 5 2 0 1 5 1-2 1 3 1-1 2 4 1 0 0-4 1 0 2 3 1 0 1 1 1-3 2 4-1 5-2-1-1 2 2 3-2 2 3 4 2 5 0 5 1 4 2 2-1-3 2 3-1 0-2 2 1 4 2 1 0-3-1-4M1106 434l4 8 4 1M1169 434l-6 1-5 6-4 4-7-3M1169 434l0 15 6 13 0 12-6-8-2 14 4 15 4 15 2-11 4 15 3 12 6 11 4-4-1-13 3-6 2 13-5-7M1088 435l1 1 1 4 1 4-2-3-2-3 0 3 1 1M1088 435l1 3 1 2 2 1 0 3-2-4 1-2-2-2M1091 435l0 3 1 3 0-3 0-3 1 3 0 3 2 3 0 3-1-3 1 0 1 4M1163 435l6 14 6-1 0 14 5 13-5-1 4 13-2 12-4-16-4-17M1101 437l3 11 0 9-3-7-3-6 1 5 2 6-3-1 3 5 0-4 3 2 1 6 2 4-1 0-2-3 0 3 2 0-1 3-2 2 1-4 0-1 1 3 2 4 1-1 1 3-1 2-1 2 1 3 0 3-1-3-1 2 1 2 0 3 3 3-1 3 3 1-1-5-1-4 1-1-1-4M1101 437l0 7-3-6-1 1-1 2 1 4-1-1 0-3 2 3 3 0M1101 437l-3 1 0 6-1-5M1086 438l1 0M1086 438l1 3M1089 438l0 3 1-1M1091 438l1 0 1 0M1082 439l2 10 3 0 0 5M1082 439l-3 3M1082 439l3 5-1 5-1 7 4 2-1 5 1 6M1094 440l1 4 1 0M1134 440l4 0M1134 440l-1 13-5-4-5-8M1072 441l3 7 1-6M1110 442l-2 5M1085 444l2 5 2 4-1-5 0-4M1085 444l2 1 1 3 2 0 2 5-3 0M1098 444l-1 1M1087 445l0 4 1-1M1154 445l4 8M1095 447l0 3-2 1-2-3 1 5 0 5M1075 448l-3 1M1075 448l0 7-1 1 1 4M1075 448l3 1 3 1 2 6 3 7-2 4-3 1-3 3-2-5-2-6 0-4M1075 448l3 7 3 6-3 2M1128 449l1 11 0 11 1 11 5 9 0 9 5 5-5-14-1-10-4 1-4-10-2-12M1093 451l2 4 0 5-1 6-4-5M1093 451l3 2M1093 451l-1 2 3 2M1092 453l3 7M1118 453l4 11 0 9-4-1-3-8 0 8-2 1-2-3-2-7M1133 453l2 13 5-3M1104 457l3 0M1143 458l5 7 2 12 6 12-5 3M1143 458l2 10M1101 459l1 5 2 0M1129 460l6 6-2 5M1081 461l3 6M1081 461l0 7 1 8-1 1M1100 462l2 2 2 3M1180 462l0 13 5 14 5 16 1-16-6 0-2 14-4-16 6 2 1-14-6 0-1 12-6-4-2 12-3 13 2 18 0 10 0 7 4-2-4-5-5-4-5-1-1 9 5 4 6-1 0 11 4-3 2 11-6-8-4 2-5 2 1 13 1 16 7 5 3-5-2-11-3 4 2 12-3 5-4-10 1 14-4-6 2 11 2-5 3-4M1180 462l6 13 5 14 6 14 5 13M1102 464l1 4 1 0 1 2M1102 464l2 4M1122 464l4 8 3-1 5 10 3-4 4 5 4 10 3 14 3-4 3 3 4 7 5 3 7 11-5 6-1 12M1148 465l4 3 3 11 3-6 4-7M1094 466l2 9M1135 466l2 11 2-4 2 9M1135 466l4 7M1112 467l3 5 2 8 5 3-3 5-2 3-1-6-2 1 0-3 2 2 3 3 2 7 0 6 2 4 1 5 2 1-1 3 1 4-1-2-2-2-1-2-1-4-1-5-2-3-4-3 3 7-3 0 0-7 2-2-2-4M1112 467l-1 3-1 3-2 0M1103 468l-1 1 1 3M1152 468l-2 9M1152 468l6 5 2 13 5 6 2-12 6 3 2-9M1100 469l2 4 0 4-2-3 2-1 0-4-2 0M1078 471l4 5 3 2 0 5 3 7-1 5 4 3-1-7 2-4-3-7-1 3 2 8M1092 471l0 9 3 0 2 8 2 3M1115 472l-1 6 3 2-1 5-2-7-1 4 1 1 0-5-1-5M1115 472l3 0-1 8 2 8 4 6-1-11M1110 473l2 4 2 1-2-4M1110 473l1 5-2-2-2-2M1100 474l0 4 1 0M1087 475l1 8-3-5M1082 476l3 7 3 0 4 4 1 9 3 6 1 6 2 7M1107 477l-1 1 1 5 1 0M1112 477l-1 1 0 4 2 4 0-4M1100 478l1 4 3 2 0-4 3 3 0 4 1-1 1 3 2 3-1 1 2 4 2 7 0 6 1 7-1 3 0 6-2 2 1 7 4 7 2-5-4-4-1-7 2-3-1-6-3-3 2 6 2 3 2 3 2 2 2 2-1-4-1 2 0-3 1 1 0-3 1 2-1 1 2 3-1 1 1 2 3 4 1 6 2 8 1-5-3-3-2 2 4 6 0 9 1 10 1 7 3 2-4-9 3-2 1 11 5 1 3 0 1-4-2-9-4-5 4-3 2-5 2 1 4 8 4 13 5-1 5 13-5-3-5-9-4-4-1 9 6 9 0 13-2 7-3 6-4-4 0 10-4-8 4-2-2-10 1-7 5 4 3 11 4 6-3 5-1-11-5-4-2 6 3 9-3 1-4 0 0-8-3-10-4 1-3-5-2-7-3-8-3-8-1-9 3 6-2 3 3 3 0 5-1 6 3 7 3 8 0-6 2-5 5 9-2-12-2-13 2-6 3 7 0-8 2-5 0-8-5-7 1 10-2 3-2 3 3 5-1-8-2-10-4-4-4 0-2 6 1 9-2 2-2 2-2-7-1 3-2-6 1-5 2 8 3-3-2-8-4-7 2-2 2 9 2-3 2 8 3 5 4 8-2 1 3 6-2 2-4-5-1-8 2-4 3-2 4 8-1-8-3-9M1106 478l-2 2M1106 478l1 2 0 3M1155 479l1 10 2 13-4 3M1089 480l3 0 0 7M1088 483l0 7 3 8 1 8 2-1 0 7 2 0 1-4 2 0 0-7-4-7M1104 484l-2 2 2 5-2 0 0 8 0 9-3-7-3 1-2 3-1-9-2 2-1 3M1094 486l3 2 1 7 4 4 3-1 3 2 1-4 2 6 1-5M1113 486l-2 1 2 5M1160 486l-4 3 6 10-4 3 5 13 2 17 5 11 4 8M1160 486l2 13 3-7 3 16 6 12 1-10 4 13 5 3M1107 487l2 2 1 4M1104 491l2 4M1104 491l2 0M1104 491l1 7M1117 491l-1 4 3 2-1 3-1 4 0 4 0 3-1-1-2 0-2 4-2-7-3-2 1-5 2 7 4 3-3-8-3-2M1145 492l6 10M1123 494l-2 1 3 6 4 4 5 4-1-8 4 8 1 9M1123 494l1 7-3 0 1 4-2-2-1 3 2 2 1 3 0 1 0 3 1 5-2-3 1-2 1-1 1-2 0-2 1 4-1-2 1 4 0 4-2 0 2 3 1 1 0 2 1 4 2 2 1 1 0 3-1-4-1 3 2 1 2 1-2-4-1-3 0 2-1-4-2-4-1-4 0 3 1 3-1 1 0 3-1-3 1 4 0-1 2 0 1 5-2-2-1-3M1098 495l1 6 3-2M1116 495l2 5 1 6-2-2 1 5-1 2 1 3 0 5 2 1 1 3 1-2 1-1 0-3 0-3-1-3 2 1-1-3-2-1 1-3 1 4 1 1 1-3 3-2M1091 498l3 7 3 3M1162 499l1 16 5-7 7 2 6 4-2 9-2 10-7-7M1162 499l6 9M1135 500l1 9 4 8 0-12 7 9-2 7 4 7 3-5 2 12 2-6-4-6-5-9M1124 501l-1 4 0 4-1 2M1124 501l1 6 1 4 2 0-1 5-1-5M1111 502l-1 5-1 5-4-4M1111 502l3 2 3 4-1 2-2-6M1197 503l-7 2M1197 503l-1 11M1094 505l2 7M1107 505l2 7 3 2-1 6 3 6 3 4 2 7 3 3 3 4 0 6-3-10-2-8-1 5 2 6 1-3 0-7 0-3M1122 505l1 0 2 2 3 4 1 4 1-2M1140 505l-4 4-3 0M1140 505l5 16-2 7-5 1-4-6 1 7 3-1 1 9 4 0 0 8 0 7-4-6 2 11 4 10-4-2M1119 506l-1 3-1-1M1119 506l1 5 2 1M1121 508l-1 3 2 4 1 2 2 3 1 0 0-2 2 2 1 4 1 3 0-4-1 1-2-2-1-4 1-2-2-2 0 2 1 4 0 4 1-2 1-2 2 3 2 2-2 2-1 3-1-4-2-2M1118 509l1 4-2-2M1118 509l2 2 1 6 1 4 0 4 2 2 1 0 2 3-1 3 2 6-1 3-3-4-2 2M1114 510l2 5-1 2 2 3 1-1 1 3 1 3-2 1 1-4 1 0-2-3-2-4 1 5 1 6 2 6 0-4 2 5 1-1 0-3 1-2-1-3 0-4M1116 510l0 5 2-1-2-4M1120 511l-1 2 2 4-2 0-1 2M1109 512l-1 4 3 4 3 0M1109 512l2 8-2 5 0 8 4 2-1 5 3 4-2 3-1 4 4 3 0-3-3-4-1-7-3-7-3-8 3 0-4-8 3-1M1158 512l2 10 3-7M1119 513l0 4-1-3 1-1M1129 515l2 3-2 1-2-3 1 4 1-1 1 4M1129 515l-2 1M1129 515l0 4 3 6 3 5 4 8 4 8 2 8 3-4-1-11 0-8-4-3M1125 516l-2 1M1105 517l1 8M1119 517l1 3 1-3M1140 517l5 4 2 10M1111 520l1 8-3-3M1117 520l2 2M1117 520l-1 3 1 7 1-4M1120 520l2 1 1 3-1 1 1 4 2 2 1 2 0 3 2 3 2 6 3 1 1-4-2-5 0 3-2-4 0 4 0 5 3 9 4 7 2 10 3 8 4 7-2 8 3 11 2 10 4 5-2 4-2-9-1 5 3 4-3 4-3-7 1 11-3 4-3-8 6 4-5-11-1 7-3-8 4 1-3-8 0-10 2-5 3 3 4 4 2-7 5 4 5 9 3-5-4-6 2-5-2-11-4 5 4 11-4 2 2 13 3-4-1-11M1120 520l0 2 1 4M1126 520l1 2 1 4 1-2M1174 520l3 13-3 8M1103 521l-1 6 3 1 1 7 3-2M1120 522l0 3M1120 522l1 1M1160 522l5 10M1125 523l0 4-2-3 2-1M1099 524l3 3-1 3 3 1 2 4 4 7 2-2M1132 525l1 6-3-4 1 5-1 1M1126 526l2 2-1 2M1128 526l2 1M1128 526l0 2 1 2 2 2 1 5 1-1 1 6-2-2 1 6 3 5-2-9 5 5 4-1 5 4 5 12 4-1 5 10 6 9-2-13 6 0M1102 527l2 4M1112 528l3 5-2 2M1156 529l3 11 2 9 5 7 0 11 5 9M1117 530l3 2 2 1 2 5 1 6M1117 530l-2 3 2 9 4 1 4 7 4 9 3 0 3 5 4 7-3 1M1135 530l-2 1 0 5-2-4 2-1 3 6-2 5M1135 530l1 7 3 1 0 9-3 4-3 3 0-8-3-6-2-5 0 4 2 1 2 0M1125 531l-2 1 1 6 2-2-1-5M1177 533l6 2 5 12-5 1-5-4-1-11 6 15M1154 535l5 5-2 7 0 14 1 13-5-12-4 0-1-12M1154 535l3 12 4 11 5 9-4 4-4 3 0 10M1133 536l3 1 3 10M1190 537l-2 10M1110 542l3 5 3 7 2 2 0 6M1117 542l4 6 4 2 1 11 2 9-3 3 1 6 3-1 3 6-1-8M1121 543l0 5M1157 547l4 2M1112 551l1 8-3-6M1116 551l2 5 1-5M1143 553l2 8-4-3M1133 554l-1 5M1145 554l0 7 4 1 0 9 2 8 3 10-4 2-2-11-5-5 2-7 3 12 3-1 2-4M1118 556l3 3 3 6 4 5 1 8 0 7-3-1-3 0 0-8-3-7-3-4 1 6 2-2 0 8 3-1M1113 559l2 0 0 6-2-6M1145 561l4 10-4-3 0-7M1115 565l3 6 2 6 3 7 2 6 4 2 4 2 1 10 0 8-3-7 3-1 4 9 3 0 0-8 4 6M1115 565l2 0M1139 571l4 4 3 11 2-6M1134 578l-2 6 4 7-3 3-1-10-3 1 0 7-1 5 3 2M1134 578l6 12 4 4-2-8 0-7M1126 579l3 6 4 9M1139 579l3 7 4 0 3 12 1-7 4 11M1139 579l1 11 3 11-2 4-3-2M1142 586l-2 4-4 1 4 7 1 7M1146 586l4 5M1140 590l0 8M1134 612l4 1-1 7-3-8M1148 620l0 8-2 4"/>
</g>
<ellipse cx="1005.2" cy="222.3" rx="15.5" ry="10.5" fill="url(#hg)" transform="rotate(68.1 1005.2 222.3)"/>
<ellipse cx="1022.1" cy="264.9" rx="15.5" ry="10.5" fill="url(#hg)" transform="rotate(68.1 1022.1 264.9)"/>
<ellipse cx="1039.0" cy="307.6" rx="15.5" ry="10.5" fill="url(#hg)" transform="rotate(68.1 1039.0 307.6)"/>
<ellipse cx="1056.0" cy="350.3" rx="15.5" ry="10.5" fill="url(#hg)" transform="rotate(68.1 1056.0 350.3)"/>
<ellipse cx="1072.9" cy="392.9" rx="15.5" ry="10.5" fill="url(#hg)" transform="rotate(68.1 1072.9 392.9)"/>
<ellipse cx="1089.8" cy="435.6" rx="15.5" ry="10.5" fill="url(#hg)" transform="rotate(68.1 1089.8 435.6)"/>
<ellipse cx="1106.7" cy="478.3" rx="15.5" ry="10.5" fill="url(#hg)" transform="rotate(68.1 1106.7 478.3)"/>
<ellipse cx="1123.7" cy="520.9" rx="15.5" ry="10.5" fill="url(#hg)" transform="rotate(68.1 1123.7 520.9)"/>
<ellipse cx="962.3" cy="197.1" rx="12.500" ry="9" fill="url(#hg)"/>
<polygon points="869,112 1043,119 1208,530 1143.5,637 967.5,631 803,220.5" fill="none" stroke="#000"/>
<path d="M1043 119L981.5 227L803 220.5M981.5 227L1143.5 637" fill="none" stroke="#000" stroke-width="1"/>
</svg>
<!-- scale bar & marker -->
<svg style="left:460px;top:94px" width="1004" height="602" viewBox="460 94 1004 602" shape-rendering="crispEdges">
<rect x="973.500" y="648.500" width="428" height="11" fill="#fff" stroke="#000"/>
<rect x="974" y="649" width="107" height="11" fill="#000"/>
<rect x="1187" y="649" width="108" height="11" fill="#000"/>
<g fill="none" stroke="#c01848" stroke-width="1" shape-rendering="auto">
<polygon points="1426.4,335.7 1424.5,344.3 1420.5,352.2 1414.8,358.9 1407.7,364.0 1399.5,367.3 1390.8,368.6 1382.0,367.7 1373.7,364.8 1366.3,359.9 1360.3,353.4 1356.1,345.7 1353.8,337.2 1353.6,328.3 1355.5,319.7 1359.5,311.8 1365.2,305.1 1372.3,300.0 1380.5,296.7 1389.2,295.4 1398.0,296.3 1406.3,299.2 1413.7,304.1 1419.7,310.6 1423.9,318.3 1426.2,326.8"/>
<polygon points="1408.2,335.7 1405.9,341.7 1401.6,346.5 1395.9,349.6 1389.5,350.6 1383.2,349.3 1377.7,345.9 1373.7,340.9 1371.6,334.8 1371.8,328.3 1374.1,322.3 1378.4,317.5 1384.1,314.4 1390.5,313.4 1396.8,314.7 1402.3,318.1 1406.3,323.1 1408.4,329.2"/>
<path d="M1374 332.500h32M1390.500 316v32"/>
<path d="M1374.500 365a36.400 36.400 0 0 0 31 0" stroke="#c87838"/>
</g>
</svg>
<span class="t n" style="left:969px;top:636px">0</span>
<span class="t n" style="left:1167px;top:636px">2e+003</span>
<span class="t n" style="left:1381px;top:636px">4e+003 (mm)</span>
<span class="t n" style="left:1060px;top:664px">1e+003</span>
<span class="t n" style="left:1274px;top:664px">3e+003</span>
<!-- tabs -->
<svg style="left:458px;top:696px" width="300" height="16" viewBox="458 696 300 16">
<path d="M460 696L467.500 711.500H530.800L538 696z" fill="#fff"/>
<g stroke="#000" fill="none" stroke-width="1.100">
<path d="M460 696L467.500 711.500"/>
<path d="M530.800 711.500L538 696.500"/>
<path d="M534.300 703.500L538.600 711.500"/>
<path d="M616 696.500L622.600 711.500"/>
<path d="M614.700 711.500L619 703.500"/>
<path d="M710.800 711.500L717.300 696.500"/>
</g>
<rect x="458" y="696" width="2" height="16" fill="#404040"/>
</svg>
<span class="t b" style="left:470px;top:698.500px;font-size:12px;letter-spacing:0.45px">Geometry</span>
<span class="t" style="left:540px;top:698.500px;font-size:12px;letter-spacing:0.11px">Print Preview</span>
<span class="t" style="left:624px;top:698.500px;font-size:12px;color:#808080;letter-spacing:0.17px">Report Preview</span>
<!-- message header cells -->
<div class="a hc" style="left:460px;top:738px;width:50px"></div>
<div class="a hc" style="left:510px;top:738px;width:465px"></div>
<div class="a hc" style="left:975px;top:738px;width:305px"></div>
<div class="a hc" style="left:1280px;top:738px;width:150px"></div>
<span class="t" style="left:513px;top:740px;letter-spacing:0.34px">Text</span>
<span class="t" style="left:978px;top:740px;letter-spacing:-0.16px">Association</span>
<span class="t" style="left:1283px;top:740px;letter-spacing:-0.36px">Timestamp</span>
<!-- status panes -->
<div class="a sp" style="left:-1px;width:517px"></div>
<div class="a sp" style="left:518px;width:248px"></div>
<div class="a sp" style="left:768px;width:209px"></div>
<div class="a sp" style="left:978px;width:460px"></div>
<div class="a sp" style="left:1440px;width:24px;border-right:none"></div>
<svg style="left:770px;top:1038px" width="17" height="14" viewBox="770 1038 17 14"><defs><linearGradient id="bub" x1="0" y1="0" x2="0" y2="1"><stop offset="0" stop-color="#fff4b0"/><stop offset="1" stop-color="#ffd030"/></linearGradient></defs><path d="M770.500 1039.500h15v7h-9.500l-2.700 4v-4h-2.800z" fill="url(#bub)" stroke="#c8a830" stroke-width=".8"/></svg>
<span class="t n" style="left:776.500px;top:1032px;font-size:13px;line-height:15px;height:15px;transform:scaleX(.92);transform-origin:0 0">0</span>
</body></html>
